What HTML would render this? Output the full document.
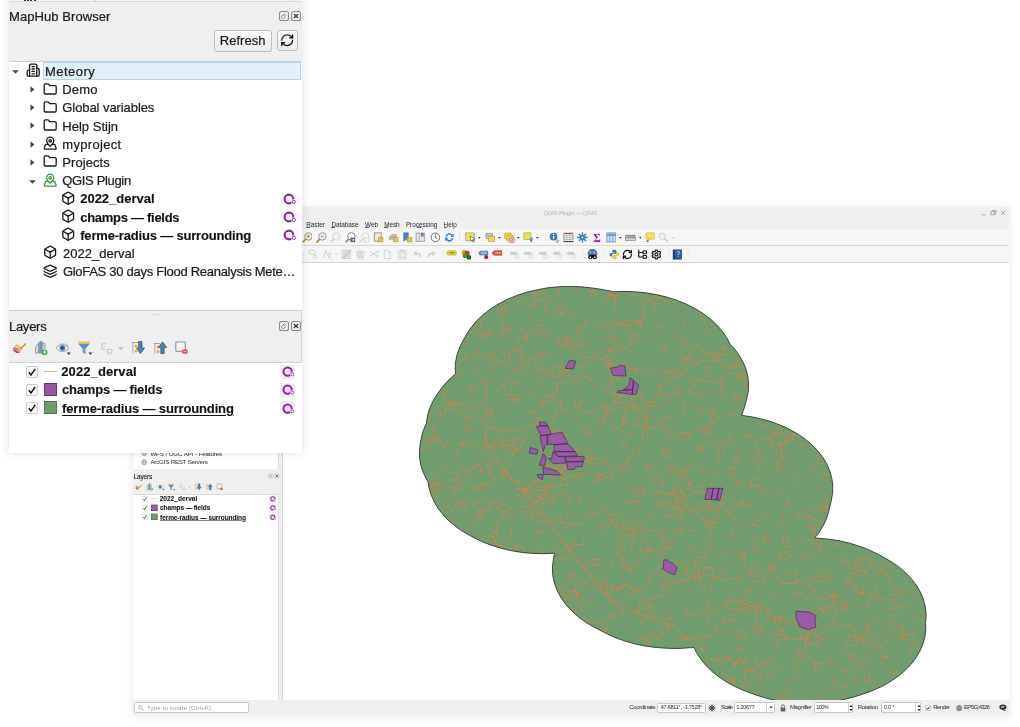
<!DOCTYPE html>
<html><head><meta charset="utf-8"><title>QGIS Plugin — QGIS</title>
<style>
html,body{margin:0;padding:0}
body{width:1020px;height:727px;position:relative;overflow:hidden;background:#fff;font-family:"Liberation Sans", sans-serif;}
div,svg{box-sizing:border-box}
.abs{position:absolute}
</style></head><body><div id="root" style="position:absolute;left:0;top:0;width:1020px;height:727px;will-change:transform">
<div class="abs" style="left:133px;top:207px;width:875.8px;height:508.4px;background:#efefef;box-shadow:0 1px 8px 1px rgba(0,0,10,.08)"></div><div style="position:absolute;left:543.4px;top:207.70000000000002px;line-height:10.2px;font-size:6.2px;font-weight:normal;color:#c8c8c8;letter-spacing:-0.333px;white-space:nowrap;-webkit-text-stroke:0.22px #c8c8c8;">QGIS Plugin — QGIS</div><svg class="abs" style="left:980px;top:209px" width="28" height="8" viewBox="0 0 28 8" fill="none" stroke="#9a9a9a" stroke-width="0.8"><path d="M1.3 5.8H5.7"/><rect x="11" y="2.6" width="3.6" height="3.2"/><path d="M12.4 2.6V1.6H16V4.6H14.6"/><path d="M21 1.8L25.2 6M25.2 1.8L21 6"/></svg><div class="abs" style="left:133px;top:229.3px;width:876px;height:16.4px;background:#f6f6f6;border-bottom:1px solid #d9d9d9"></div><div class="abs" style="left:133px;top:245.7px;width:876px;height:17.3px;background:#f6f6f6;border-bottom:1px solid #d4d4d4"></div><div class="abs" style="left:283px;top:263px;width:726px;height:437px;background:#fff"></div><svg class="abs" style="left:283px;top:263px" width="726" height="437" viewBox="283 263 726 437"><defs><clipPath id="bufc"><path d="M455.4 363.1 455.2 370.2 455.6 374.0 452.5 376.4 446.4 382.3 441.1 388.6 437.3 394.2 436.9 394.7 432.9 401.3 429.8 408.1 427.7 415.0 426.5 422.0 426.5 423.2 425.7 424.6 422.9 431.7 421.1 438.9 420.1 444.4 419.4 451.4 419.6 458.5 420.9 465.5 423.2 472.4 426.4 479.2 427.9 481.5 428.7 486.0 429.3 488.9 431.4 495.6 434.4 502.2 438.2 508.6 443.0 514.7 448.5 520.5 454.9 525.9 461.9 530.9 469.7 535.4 474.0 537.7 482.6 541.9 491.8 545.4 501.5 548.4 511.5 550.7 521.8 552.4 532.3 553.4 542.9 553.7 553.5 553.3 554.4 553.2 554.0 556.0 553.9 557.5 553.2 560.4 552.4 568.0 552.8 575.6 554.4 583.1 557.1 590.5 560.9 597.6 565.7 604.4 571.6 610.9 578.5 617.0 586.2 622.5 594.7 627.5 604.5 632.6 613.8 637.0 623.7 640.7 634.1 643.7 644.9 646.0 656.0 647.5 658.5 647.7 669.5 648.4 680.6 648.4 691.6 647.6 694.0 647.3 696.5 652.5 701.0 659.5 706.4 666.1 712.9 672.2 720.3 677.9 728.4 683.1 737.4 687.7 746.9 691.7 755.2 694.7 765.4 698.0 776.2 700.6 787.2 702.4 798.5 703.4 809.8 703.7 821.2 703.2 832.4 701.8 843.3 699.7 853.9 696.9 861.9 694.4 871.8 690.9 881.1 686.8 889.7 682.0 897.6 676.7 904.6 670.9 910.8 664.6 915.9 657.9 920.0 650.9 923.0 643.7 925.0 636.3 925.8 628.8 925.5 622.5 925.9 620.2 926.0 613.1 925.1 606.0 923.3 599.0 920.4 592.2 916.6 585.6 911.8 579.3 906.2 573.3 899.8 567.7 892.5 562.5 884.6 557.8 877.7 554.1 868.9 549.9 859.5 546.2 849.7 543.2 839.4 540.8 828.8 539.2 818.0 538.2 814.6 538.0 819.0 532.6 823.1 526.0 826.3 519.2 828.5 512.3 831.4 500.0 832.6 492.8 832.8 485.5 831.8 478.3 829.9 471.2 826.9 464.2 822.9 457.4 817.9 451.0 812.0 444.9 805.3 439.2 797.7 434.0 789.5 429.3 780.5 425.2 771.1 421.7 761.2 418.9 750.9 416.7 741.5 415.3 741.7 415.1 744.3 407.8 746.7 399.0 748.2 391.6 748.6 384.2 747.9 376.8 746.1 369.5 743.2 362.3 739.3 355.4 734.3 348.7 730.1 344.3 726.8 337.8 722.2 331.1 716.6 324.8 710.2 318.8 702.9 313.4 694.8 308.4 686.0 304.0 676.6 300.2 666.7 297.1 656.4 294.6 645.8 292.8 635.0 291.8 624.0 291.4 613.3 291.8 608.9 290.7 598.6 288.9 592.4 288.0 581.4 286.8 570.2 286.4 559.1 286.7 548.0 287.8 537.2 289.7 526.7 292.3 516.6 295.5 507.1 299.5 498.3 304.1 490.1 309.2 482.8 314.9 476.4 321.1 471.0 327.6 466.5 334.5 462.1 342.4 458.9 349.2 456.7 356.1Z"/></clipPath></defs><path d="M455.4 363.1 455.2 370.2 455.6 374.0 452.5 376.4 446.4 382.3 441.1 388.6 437.3 394.2 436.9 394.7 432.9 401.3 429.8 408.1 427.7 415.0 426.5 422.0 426.5 423.2 425.7 424.6 422.9 431.7 421.1 438.9 420.1 444.4 419.4 451.4 419.6 458.5 420.9 465.5 423.2 472.4 426.4 479.2 427.9 481.5 428.7 486.0 429.3 488.9 431.4 495.6 434.4 502.2 438.2 508.6 443.0 514.7 448.5 520.5 454.9 525.9 461.9 530.9 469.7 535.4 474.0 537.7 482.6 541.9 491.8 545.4 501.5 548.4 511.5 550.7 521.8 552.4 532.3 553.4 542.9 553.7 553.5 553.3 554.4 553.2 554.0 556.0 553.9 557.5 553.2 560.4 552.4 568.0 552.8 575.6 554.4 583.1 557.1 590.5 560.9 597.6 565.7 604.4 571.6 610.9 578.5 617.0 586.2 622.5 594.7 627.5 604.5 632.6 613.8 637.0 623.7 640.7 634.1 643.7 644.9 646.0 656.0 647.5 658.5 647.7 669.5 648.4 680.6 648.4 691.6 647.6 694.0 647.3 696.5 652.5 701.0 659.5 706.4 666.1 712.9 672.2 720.3 677.9 728.4 683.1 737.4 687.7 746.9 691.7 755.2 694.7 765.4 698.0 776.2 700.6 787.2 702.4 798.5 703.4 809.8 703.7 821.2 703.2 832.4 701.8 843.3 699.7 853.9 696.9 861.9 694.4 871.8 690.9 881.1 686.8 889.7 682.0 897.6 676.7 904.6 670.9 910.8 664.6 915.9 657.9 920.0 650.9 923.0 643.7 925.0 636.3 925.8 628.8 925.5 622.5 925.9 620.2 926.0 613.1 925.1 606.0 923.3 599.0 920.4 592.2 916.6 585.6 911.8 579.3 906.2 573.3 899.8 567.7 892.5 562.5 884.6 557.8 877.7 554.1 868.9 549.9 859.5 546.2 849.7 543.2 839.4 540.8 828.8 539.2 818.0 538.2 814.6 538.0 819.0 532.6 823.1 526.0 826.3 519.2 828.5 512.3 831.4 500.0 832.6 492.8 832.8 485.5 831.8 478.3 829.9 471.2 826.9 464.2 822.9 457.4 817.9 451.0 812.0 444.9 805.3 439.2 797.7 434.0 789.5 429.3 780.5 425.2 771.1 421.7 761.2 418.9 750.9 416.7 741.5 415.3 741.7 415.1 744.3 407.8 746.7 399.0 748.2 391.6 748.6 384.2 747.9 376.8 746.1 369.5 743.2 362.3 739.3 355.4 734.3 348.7 730.1 344.3 726.8 337.8 722.2 331.1 716.6 324.8 710.2 318.8 702.9 313.4 694.8 308.4 686.0 304.0 676.6 300.2 666.7 297.1 656.4 294.6 645.8 292.8 635.0 291.8 624.0 291.4 613.3 291.8 608.9 290.7 598.6 288.9 592.4 288.0 581.4 286.8 570.2 286.4 559.1 286.7 548.0 287.8 537.2 289.7 526.7 292.3 516.6 295.5 507.1 299.5 498.3 304.1 490.1 309.2 482.8 314.9 476.4 321.1 471.0 327.6 466.5 334.5 462.1 342.4 458.9 349.2 456.7 356.1Z" fill="#709c70"/><g clip-path="url(#bufc)"><path d="M907.3 306.4L906.2 313.0L909.1 311.6L910.8 317.3L909.9 322.3L910.2 327.2L909.6 330.6L912.0 329.5L914.1 327.3L916.6 323.7L918.2 321.1L921.3 318.7L922.7 316.4L924.4 314.5L926.5 312.8L929.7 311.2M931.8 311.2L933.7 310.3L936.2 309.9M935.7 307.0L937.8 307.0L937.1 304.7L940.4 305.4L943.0 306.6L945.2 307.8L949.0 308.7L952.6 308.4L953.0 301.9L957.3 300.5M649.8 417.0L645.8 417.3L643.9 416.5L640.9 413.3L638.2 411.3L635.7 408.3L633.7 406.2L633.4 408.5M628.3 411.5L625.2 410.2L623.0 408.6L620.4 407.8L617.7 407.6L615.2 408.4L612.9 408.5L609.1 410.5L605.2 412.3L603.9 418.5M630.9 586.8L632.2 589.5L635.9 589.4L636.8 591.3L639.8 590.6L642.6 588.7L646.0 585.6L647.9 582.2L648.8 578.3L649.8 575.4L650.5 578.1L652.2 574.8L654.2 572.7L656.3 570.1L659.2 567.2L661.5 563.4M662.7 559.1L661.8 554.1L661.0 551.7L660.4 548.1L664.1 546.0L666.2 544.5L667.3 548.5L671.4 547.8M673.8 546.1L671.3 541.0L673.2 540.0M686.8 362.3L685.6 359.2L686.1 362.6L682.6 364.8L680.1 368.1L677.4 370.8L673.9 373.2L673.6 369.0L671.6 369.7L667.1 370.5L668.7 375.4L666.8 376.4L665.4 378.0L662.8 380.1L661.1 382.5L659.9 386.4L659.6 388.8L658.8 384.0L660.9 388.1L659.5 389.8L660.6 394.9L657.8 397.2L653.8 399.4M651.0 400.5L652.8 405.4L648.5 406.6L645.7 408.9M641.2 409.8L639.1 409.4L635.3 407.5M501.6 331.0L504.7 333.9L505.6 330.4L507.3 331.9L509.5 332.3L511.4 326.9M516.4 327.8L517.9 329.5L522.0 330.5L525.1 332.4L529.0 332.9L531.1 333.0M533.9 333.9L537.9 335.1L541.0 335.8M544.1 337.1L545.0 333.8M547.3 329.4L548.7 326.5M656.5 504.3L660.1 505.0L659.8 501.5L662.2 501.7L664.3 502.8L666.1 503.8L668.5 506.0L671.7 508.0L675.2 509.0L679.2 509.0L683.6 510.0L686.2 510.1L685.8 507.3L688.5 507.8L690.9 509.2L695.1 509.0L694.9 513.0L697.2 515.1M699.5 516.4L702.5 518.7L705.0 520.7L708.1 521.1L710.7 521.7M713.6 522.7L717.3 522.5M716.2 516.6L718.5 516.6M621.6 394.9L617.8 395.1L613.5 396.8L615.4 392.0L613.2 392.6M608.8 391.5L606.4 391.1L604.2 389.9M602.3 388.4L600.4 386.1M591.6 379.5L588.2 378.2L586.1 377.3M586.9 374.7L586.2 377.8L583.6 378.0L579.5 379.5L575.9 379.1L572.4 377.1L569.6 375.1L567.4 372.5L569.4 367.3L565.9 367.2M668.0 299.4L664.9 299.4L663.6 305.9M660.8 304.0L657.0 303.7L654.3 302.5L652.2 301.1M648.7 298.9L645.6 297.6L643.0 295.1L640.5 293.8M638.8 292.5L637.0 291.3L632.7 290.4L628.8 288.5L625.5 286.7L621.8 286.1L620.1 291.1L616.1 290.5L613.0 290.7L611.5 296.4L612.5 289.5L608.5 289.8L604.2 290.0M744.7 671.1L747.9 669.8L750.9 669.9L754.6 668.5M758.1 667.3L757.1 663.9L761.2 663.1L765.0 664.0L766.9 665.2L769.4 667.3L773.2 668.4M765.0 475.8L761.8 474.2L759.7 472.1L757.7 468.5M752.6 461.7L751.4 458.1L748.7 456.0L745.7 452.8L743.6 450.3M756.5 669.5L753.3 669.4L750.9 670.1L747.9 670.6L744.1 673.1L744.6 677.7L741.1 680.7L738.8 682.0M734.8 682.0L732.7 682.5M731.0 683.7L727.1 685.9M539.0 497.0L536.2 496.2L532.7 493.1M530.1 492.0L528.4 490.6L528.1 492.6L525.9 489.9L523.7 487.9M518.8 483.9L520.0 481.5L515.6 481.5M720.1 499.7L720.1 502.6L719.7 499.9L718.3 495.8M715.0 495.6L711.8 494.2L708.0 491.9L705.4 491.4L701.3 492.2L698.2 492.4L694.2 492.9L692.1 493.4L688.5 495.5M686.2 503.5L686.6 496.9M684.1 497.9L681.8 499.9M610.9 431.6L614.5 429.1M620.7 426.3L622.7 425.3L622.9 422.2L624.1 419.8L623.9 414.6L624.7 411.5L625.1 408.9L624.6 405.8M627.2 403.9L629.2 400.9L630.7 399.5L632.9 397.4L636.2 396.3L639.4 395.0L642.3 394.4L643.3 398.8M522.5 399.2L519.1 398.9M515.8 399.2L513.1 399.8L508.6 400.0M506.9 406.2L504.2 405.9L501.0 406.1M497.6 406.4L494.4 407.1M492.0 407.8L491.4 411.4M491.2 413.7L489.1 413.4M487.0 412.5L485.0 411.1M482.3 408.8L479.1 406.5M475.6 404.5L473.8 411.1L469.8 410.8L466.6 410.8L463.6 411.2L459.7 412.1L457.3 412.6M456.1 405.3L453.9 405.4M450.3 403.8L447.2 402.5M621.2 337.2L618.8 337.8L614.5 337.6L612.3 337.1M613.1 328.0L611.0 327.8L607.4 327.4L605.5 328.1L605.3 331.1M452.7 539.6L452.5 544.2L450.3 544.7L447.2 545.1L446.8 547.9L442.6 549.0L444.4 542.5M443.6 548.9L440.0 549.4L437.6 548.5L434.8 548.3M432.3 545.5L428.6 545.2L425.6 543.5L422.6 542.5L421.9 548.7L418.2 546.8M414.4 545.8L410.0 545.8L407.6 545.8L404.4 544.4L402.1 543.2L399.1 541.7L395.5 540.7L394.8 545.9L391.9 545.2L389.2 545.7M563.4 366.2L559.2 365.8L557.1 366.1L554.1 366.9L550.4 368.9L548.7 370.3L549.4 376.1M546.0 376.4L543.4 376.5M532.5 374.7L530.6 373.9L526.2 373.4L523.1 371.5L518.9 370.3L515.1 369.5L511.4 368.9L507.8 367.2L504.8 364.3L500.9 363.2L499.0 361.8L497.0 360.4L495.6 355.4L491.7 355.4M461.4 471.9L463.9 472.0L466.0 472.1L468.7 471.1L472.0 470.0L474.5 468.0L477.2 467.1M481.7 466.7L481.0 473.3L480.2 469.5M484.2 467.5L486.4 467.0L489.4 466.9M491.7 466.3L490.1 472.8M722.6 603.7L724.7 604.5L726.8 600.6M728.8 601.0L730.1 597.1M733.8 597.8L736.5 597.5L735.2 601.4L737.6 601.5L741.5 600.3L745.0 600.2L747.3 600.7L751.3 602.1L753.4 603.2L755.2 605.5L757.4 606.9L759.3 608.6L762.8 609.9L766.1 611.0L768.7 613.2L770.2 615.1M772.2 619.1L774.0 621.7L774.7 624.1L776.8 627.0L780.3 628.5L782.6 628.6L781.8 634.2L784.6 636.8L788.0 638.8M508.3 356.3L509.4 359.1L510.0 361.3L506.0 363.1M502.4 363.3L499.8 362.9L497.0 361.2L495.3 359.8L491.9 357.4L489.5 356.4L486.1 355.9L483.6 355.5L480.4 355.8L477.2 356.6L473.7 356.3L472.1 351.7M469.1 354.0L467.6 356.0L466.1 359.8L465.5 355.3L463.1 357.7L461.1 359.7L459.3 361.7L458.4 363.4L456.3 366.3L455.4 368.9M452.9 372.6L452.9 368.8M887.2 538.3L889.5 539.5L892.2 539.9M899.3 541.2L901.2 534.8L905.1 534.8L904.2 537.1M908.3 539.1L909.8 540.6M912.5 542.0L914.6 542.2L917.2 543.5M916.8 548.6L918.7 549.5L922.1 551.3L924.5 552.4L928.6 552.5M931.6 553.1L933.8 553.8M865.6 408.8L863.0 406.7M857.4 402.2L858.8 398.7L854.5 397.9L855.0 394.2L852.5 393.1M849.8 390.0L850.4 386.4L849.6 384.2L847.6 381.2M846.6 378.5L843.4 375.7L841.1 375.3L839.1 374.0L841.0 369.0L836.7 368.7L834.9 373.9L834.6 378.3L832.2 378.7M469.2 413.6L469.0 418.3L472.8 420.3L475.9 420.9M479.1 417.4L481.2 418.2L483.9 419.6L487.4 420.8L491.0 421.8M493.9 422.5L493.5 427.9L496.3 429.7L500.6 430.7L503.8 431.4L506.6 433.3M507.6 439.9L510.7 442.9L512.5 445.5L514.9 447.3L518.4 448.5L520.6 449.0L520.4 444.4M741.7 579.2L739.2 579.6L735.6 581.0L736.7 578.2L733.1 578.6L730.2 578.9L726.5 579.3L723.1 579.9L719.5 578.6L717.3 578.3L714.1 577.6L710.6 578.6M704.3 577.8L700.6 576.7L697.4 575.3L697.5 577.7L695.4 577.4L693.2 577.2M571.5 665.2L568.7 665.4L566.2 664.2L562.1 663.4M560.0 663.2L556.1 661.5L552.7 661.7M549.2 661.7L544.9 662.8L541.7 664.0L539.2 665.0L535.2 665.4L532.2 664.2L530.6 668.4L529.1 673.5L528.2 677.8M523.0 678.1L523.3 674.9L523.9 668.8L520.0 666.5L516.6 665.2L513.4 665.4L511.1 665.1L507.2 662.6L504.5 661.8M502.7 660.3L501.6 666.1L499.7 663.2L499.0 665.4L496.5 664.5M795.8 393.7L794.8 397.9L792.6 397.5L789.7 396.8L787.3 397.0L783.2 395.7L783.6 391.0L783.9 388.0M781.9 389.1L780.8 394.9L778.2 395.1L776.1 395.5M775.9 400.5L773.7 400.6L771.8 399.6L769.6 397.7L768.6 396.0L766.9 394.5L765.3 392.7M762.9 391.7L760.2 388.7L757.8 385.1M754.6 383.3L750.8 383.0L747.6 381.0L744.4 377.9L742.2 374.5L740.4 370.8M539.3 593.2L543.4 592.8M547.7 592.5L549.8 593.0L553.6 594.1M555.8 595.5L559.4 597.9M562.9 598.6L566.0 598.9L568.2 599.0L570.8 597.8L573.8 597.7M577.2 596.4L574.6 590.5M577.0 588.5L579.3 587.2L583.0 586.4L583.4 588.7M431.2 353.8L426.8 353.6L423.6 353.1M422.7 345.3L420.3 344.8M418.3 343.3L416.2 341.8L415.5 335.0L413.5 333.0L410.2 332.4L408.2 331.5M404.4 329.4L402.0 327.7M399.9 325.2L396.7 323.2L396.4 319.1L395.1 317.4L392.5 314.2M389.3 312.0L387.6 310.4L384.6 308.1M376.8 306.9L376.0 312.0L373.1 311.0L370.1 310.8L365.9 311.8L366.0 305.2L363.0 307.0L360.0 309.5M750.2 581.8L754.4 580.9L758.1 581.2L761.8 582.0L765.3 581.1L763.7 575.8M762.6 571.4L763.8 574.3L766.6 573.5M769.2 573.6L771.2 573.6L771.7 578.5M775.3 578.3L779.1 579.8L780.7 581.3L784.0 583.1L786.5 583.6L790.3 582.9M637.1 486.5L640.9 487.4L644.4 489.9L643.4 495.0L644.5 491.0M648.4 491.8L652.7 492.1M655.5 491.9L658.7 493.0L662.4 493.5L666.5 493.3L668.9 493.8L671.1 493.4L674.7 491.3M677.2 491.0L680.0 491.8L681.4 488.2M914.5 672.2L917.9 673.0L920.1 673.5L923.1 674.0L926.7 673.9L930.9 672.5L935.0 670.5L939.2 670.4M942.8 668.2L945.5 665.5L947.3 659.0L948.5 655.6L950.8 657.6L952.8 652.6L956.5 653.2L959.8 652.9M963.6 653.5L965.8 654.2M968.4 653.9L970.8 652.8L974.2 651.8L976.0 650.7M978.3 648.8L980.7 647.8M419.3 436.1L422.9 435.7L426.7 434.1M424.5 439.9L427.3 439.9M433.2 437.0L432.6 440.6L435.5 439.5M597.5 473.5L596.7 476.7L600.3 475.3L603.9 475.9L607.6 476.8L609.6 476.5L612.5 474.9L612.3 470.9M615.6 467.7L617.9 466.0L620.1 465.5L623.6 464.4L626.8 462.0M628.4 460.7L628.0 457.2L632.1 455.7M414.8 644.3L411.1 644.3L408.7 643.4L406.4 643.7L403.3 644.6L400.1 645.1L396.0 643.7L393.3 643.7L391.1 643.9M387.7 645.1L385.7 645.8L382.4 646.5M379.3 647.0L375.6 648.8L376.1 645.9L376.6 643.8M651.9 636.7L654.0 630.8M651.1 634.9L647.1 637.1L644.6 637.3L640.3 638.7M641.0 635.6L637.7 637.9L634.9 639.1M632.3 640.7L630.2 642.6M628.4 644.0L625.9 646.3L621.6 647.8M617.4 653.7L613.8 654.5M610.3 655.9L609.9 659.1L605.8 657.2L603.9 655.3L600.3 654.4L597.7 652.6L595.1 649.1L594.6 653.1L593.7 650.3L592.1 647.8M591.2 645.7L589.4 642.4M449.9 686.7L445.9 687.6L446.3 682.4L446.2 679.6L442.5 679.2L439.4 677.6L435.3 678.0M436.2 680.5L433.8 680.1L430.7 680.3M431.5 682.4L428.4 685.4M426.4 688.3L422.8 690.6L421.3 685.9L417.9 688.0L415.4 690.9L414.7 687.7L415.5 691.0L412.3 692.6L409.2 694.6L406.2 697.3L402.2 698.0L400.0 697.9M475.9 620.5L479.1 621.0L482.6 621.9M485.6 623.3L487.9 625.3L490.6 628.1L492.1 629.8L494.6 633.5M495.9 635.1L497.8 637.3L500.5 640.1L502.5 643.2L505.9 645.5L508.9 646.0L513.2 645.8L517.2 643.9L517.5 647.8L521.4 647.1L524.7 647.6M531.6 648.4L531.5 643.5M534.7 644.9L538.9 645.4L541.9 645.1L544.2 643.9L548.3 642.6L552.4 643.1L556.3 644.3M754.2 412.2L750.2 410.1M747.5 407.2L746.1 404.2L745.0 400.5L741.7 397.7L738.5 396.0L735.9 393.5L732.8 391.5L730.0 390.6M725.7 389.9L723.9 388.8L722.3 386.7L720.9 383.2L719.4 380.4M734.9 430.9L738.9 431.0M742.9 431.9L745.5 433.7L747.2 435.6L748.8 437.4M758.5 439.0L762.0 439.8L765.3 440.0L767.9 438.7L770.0 437.1L773.9 435.2L777.8 434.4L781.6 432.7L781.7 427.9L784.1 427.5M450.8 300.4L453.8 300.6L454.7 298.2L458.9 297.5L461.6 297.2L464.9 297.1M463.6 302.5L466.8 303.0L470.7 302.0L474.5 302.3L478.1 301.5L481.7 301.7M485.2 301.6L488.5 300.6L492.2 298.4L495.4 298.2L498.5 296.7L500.8 297.0M567.2 491.0L563.8 493.4M561.1 493.8L559.0 494.5L556.8 496.2L554.1 499.9L552.7 503.0L552.3 499.1M549.4 501.9L551.5 506.9L550.1 500.2L547.2 501.4L543.5 504.1L542.2 499.0L538.8 501.6L536.8 502.0L533.1 502.4L529.7 504.6L527.4 505.4M522.8 501.1L518.6 500.0M851.4 353.3L855.3 354.0L859.5 353.5L861.5 354.3M865.5 354.4L868.6 354.9L870.6 355.9L872.9 358.1L871.3 361.2L874.7 363.3L877.6 364.9L879.9 366.5L882.7 369.0L885.1 372.4L886.6 376.0L887.6 380.1M888.4 375.2L890.8 376.5L893.0 379.5L894.7 373.8L895.3 376.3M656.8 691.7L661.2 692.5M661.5 696.8L661.9 692.8L665.1 693.2L668.5 693.1M674.9 692.3L678.4 692.6L680.6 692.1L685.1 691.7M688.5 693.1L691.1 694.4L692.8 696.4L696.2 697.2L700.3 696.5L704.7 697.8M706.8 697.3L706.7 702.9M709.0 704.9L711.0 701.9L714.8 700.0L716.6 695.2L720.3 694.0M720.0 691.5L722.7 690.9L725.9 690.4M652.5 297.3L656.4 295.9L659.3 295.0L662.4 293.0L666.3 290.9L667.8 289.3L670.5 287.7L671.8 294.2L676.2 293.9M679.8 295.4L677.8 290.0M846.9 437.5L848.2 440.4M850.1 439.3L852.4 437.8L855.5 435.7M857.6 433.0L858.9 430.0L861.2 427.6L865.2 426.6L867.5 426.0L866.2 422.6L870.0 422.3M873.8 421.4L873.7 426.6L874.8 429.5L876.9 430.3M516.8 489.0L519.6 488.7L522.2 488.5L525.3 488.4L528.0 488.3M531.2 489.0L534.2 489.4L538.1 490.7L541.3 490.5L545.2 489.7L548.8 488.0L552.5 487.0L554.5 486.3L559.0 485.7L561.1 485.0L564.0 484.2M551.8 301.5L549.5 296.6L547.3 291.2L544.0 294.0L541.8 288.6L542.3 291.5L539.2 293.3L534.9 293.9L533.6 287.8M531.0 288.2L529.0 287.7L525.3 287.6L521.8 288.5L518.9 289.8L516.4 292.6M582.9 523.2L578.5 524.2L574.1 523.8L574.4 525.8L570.2 524.5L568.1 523.6L564.8 523.0L561.6 521.4M558.7 519.3L554.5 517.6L553.4 521.2L549.7 521.0L547.1 521.1L544.3 520.2L539.8 520.3L540.3 523.1L537.2 522.2L533.2 520.5L532.9 515.2L529.4 513.1L525.5 511.6M522.4 511.0L520.2 510.3M418.8 499.2L422.6 497.7L425.8 497.8M430.0 498.0L432.0 497.7L431.8 492.3M434.0 491.7L438.5 491.1M447.0 487.4L451.5 487.2L452.1 490.3M721.6 475.8L719.6 475.9L716.8 474.9L713.5 473.2L709.1 472.9L706.7 472.2L704.8 471.0L702.1 469.8L700.1 469.3L697.2 467.6M693.1 467.4L689.6 466.2M690.1 469.0L686.5 468.5L682.8 469.5L680.3 469.8L676.3 472.0L675.3 466.2L672.7 465.7L672.5 468.4M670.3 467.9L670.8 464.6M803.3 320.7L803.3 323.2L804.0 325.3L799.6 326.0L795.9 328.5L792.5 330.6L790.3 332.7L787.3 334.4L784.6 336.6L781.4 339.3L778.1 341.0L776.1 343.0L773.9 345.9L772.9 348.9L772.0 351.0M769.8 352.8L767.5 347.7L766.2 350.4M862.4 513.2L859.0 514.5M859.1 517.8L856.4 519.0L856.6 515.8M854.6 516.5L851.5 518.0L849.2 518.0L848.5 516.0L844.5 517.1L842.3 518.8L839.8 520.0L836.4 519.9L834.3 520.7L830.9 523.2L830.6 519.7L828.6 520.7L826.8 522.1M820.0 525.3L817.4 525.3M813.0 526.8L810.8 527.2L809.3 522.2M786.1 370.4L786.5 375.2L790.6 373.6L793.8 374.1M797.4 375.4L799.6 377.0M802.4 378.0L803.2 373.4M806.6 368.5L808.5 370.3L808.3 367.1L810.9 368.7M811.4 366.2L815.2 365.6L815.7 369.6L819.2 370.1L823.5 370.9L827.9 370.9L831.7 370.3L836.1 370.4L840.1 370.3L844.2 370.6L844.0 373.6L844.3 371.3L846.4 371.4L848.6 371.5L851.4 370.3L853.4 369.4L856.3 366.6M746.5 380.6L750.7 380.5L752.9 380.1M756.5 381.0L755.7 378.6L756.1 385.5L760.3 384.6L764.4 385.4L767.3 385.9M774.5 387.2L777.5 386.1M767.1 537.8L764.6 538.9L760.9 539.6L758.5 539.1M755.0 537.3L756.2 541.7L756.4 539.6M757.2 544.3L756.7 549.0L752.6 548.4L752.4 551.6M746.7 553.4L744.2 552.5L739.9 552.9L740.0 549.3M734.0 551.0L732.4 552.5L730.4 553.4L727.3 553.5L724.8 554.0L721.4 553.8L718.6 553.9M738.7 367.1L734.3 366.0L734.4 362.4M722.7 361.3L721.9 355.2L718.7 354.8L719.2 357.8L715.7 356.3L713.2 355.7L709.5 354.1L706.2 352.8L701.8 351.5L701.7 348.4M698.8 347.8L694.8 348.2M674.2 429.8L673.5 432.8L675.3 433.7L678.4 434.3L682.5 433.8L686.5 432.9L685.4 437.4M689.9 433.5L692.4 432.3L695.8 430.3L699.7 429.0L701.6 429.5L704.5 430.2L708.6 430.0M580.6 357.3L584.6 356.8M586.9 356.9L591.1 357.6L595.4 356.9L597.7 355.3L599.8 353.1L603.6 350.6M606.7 348.7L610.4 348.0L614.9 348.0L618.8 347.0L622.4 345.6L623.3 349.3L625.6 348.0L628.3 346.0L631.8 343.4M868.6 658.5L867.6 660.5L864.3 659.7L862.8 666.4L860.9 665.6L860.2 668.2L856.7 668.5L852.6 668.6L849.6 670.0L845.3 671.3L842.8 670.6L840.3 670.8M836.9 676.1L834.5 681.0L831.2 678.0L828.6 675.1M539.3 451.6L539.5 448.6L543.2 449.3M546.5 454.0L548.8 453.8L551.8 454.4L551.4 449.1M553.7 451.5L555.7 452.3L556.1 458.6L560.0 459.2L563.4 458.6M566.0 457.3L568.3 457.5L572.1 458.5L575.5 459.2L578.8 460.2L581.1 460.9L584.5 461.5L587.4 461.6L591.0 460.0L593.8 459.2L598.2 459.8M605.8 458.0L604.7 464.7L608.5 463.9M622.6 367.0L625.1 365.3L628.7 365.1M630.8 365.7L633.9 367.0L635.4 371.9L633.9 368.7L637.3 368.9L637.7 371.9L640.9 371.5M644.5 369.7L646.9 369.8L647.6 373.6L651.8 372.9L655.1 372.2L658.6 370.7L659.7 373.0M663.2 372.4L667.0 372.7L670.3 373.6L673.6 372.5L673.6 378.3M679.6 372.7L680.8 375.9L682.8 375.1L685.3 373.2L687.6 370.4L685.8 367.1M543.8 682.5L544.7 680.5M542.0 681.2L543.5 676.7L540.3 676.8L538.0 677.1L534.0 677.9L532.6 682.8M532.4 688.3L528.2 687.7L524.7 686.2M520.5 685.9L517.7 686.1L515.0 685.1L511.9 682.6L507.9 681.0L505.4 681.1L502.2 680.0L502.1 682.7M498.2 681.3L496.2 681.5L493.0 682.6L488.8 683.5M486.1 683.9L483.3 683.6M484.1 602.0L484.1 597.3L479.9 597.1L476.9 598.4L474.7 600.5M471.8 601.9L468.3 601.7L464.1 601.7L461.0 601.9L456.7 602.0L454.1 602.7M452.3 603.6L449.3 603.8L449.1 600.4M780.7 490.7L776.5 490.4M773.9 491.2L772.3 492.4L770.3 493.4L767.4 493.4L764.1 492.1M760.4 490.9L757.5 491.4L757.0 486.2L753.2 485.4L749.8 483.4L751.6 488.6L750.9 486.0M746.9 485.1L743.2 482.7L739.1 480.8M736.6 479.0L739.1 485.1L736.1 485.7L734.3 487.0M731.5 490.0L730.4 491.7L729.2 493.4L725.8 496.4L723.7 497.3L720.9 497.1M665.2 535.0L665.0 537.4M662.8 537.7L660.7 537.2L660.6 530.6L657.0 530.1L653.5 530.2L649.4 530.5L646.0 530.8L642.0 532.1M640.0 533.5L636.8 534.0M634.3 534.2L630.7 535.9M629.6 529.5L625.7 529.8M782.6 336.7L785.5 336.8L789.1 337.4L793.2 336.7L797.1 336.4L798.8 330.6M801.0 330.0L801.1 323.6L805.5 324.6L808.9 325.8L812.9 327.9L816.2 329.4L816.1 335.7M892.1 572.0L888.2 572.7L884.4 572.5L880.7 571.2M880.0 566.9L880.4 573.0L877.3 574.5M874.1 577.3L872.5 579.5M866.5 586.2L865.2 588.1L864.5 590.0L863.4 592.8L862.6 595.3L862.3 590.8L860.8 594.9L860.4 592.4L857.1 594.1M820.7 657.3L824.7 658.7L826.8 660.0L829.7 662.9L831.0 665.3L830.5 659.0L832.4 660.4L834.1 663.3L836.7 664.8L840.2 665.8L841.9 667.1L842.0 672.0L845.6 674.7L849.1 677.0M852.5 678.9L855.0 682.0L857.0 683.6M911.3 426.5L909.1 425.0L907.1 422.5L904.6 420.2L906.5 416.2L903.1 414.9L903.4 410.8M901.2 410.1L902.2 405.7L898.0 405.1L895.8 404.3L893.7 402.5L890.7 401.0M889.0 405.0L886.3 403.0M887.8 398.9L887.7 392.7L884.4 393.2L882.5 393.8L879.9 393.8L877.3 394.7L872.9 395.2L873.0 400.8M582.6 695.4L585.6 695.3L587.5 691.5L590.8 692.2L590.5 697.9L592.8 699.1L590.6 703.1M592.0 697.6L591.8 699.8M596.4 700.2L600.3 699.2L601.0 697.3L604.2 699.3M610.5 699.5L608.6 703.7L609.5 698.1L609.7 693.9L612.9 694.4L615.0 694.7L617.2 693.9M620.5 693.4L621.4 690.4M624.1 689.5L628.5 690.2M891.3 691.3L894.2 690.1L897.8 688.1L899.4 686.1L902.3 684.1L905.5 683.7L909.8 682.7L912.2 681.8L916.3 680.2L918.9 677.5M920.5 676.1L919.8 673.4M924.0 673.1L926.8 671.5L929.7 668.4L931.2 665.3L933.1 664.0L934.9 662.5L938.2 660.8M538.1 464.6L542.2 465.0L544.9 465.2L549.2 465.7L551.9 464.9L552.7 467.3M555.2 468.6L559.1 469.7L562.3 469.1L565.8 466.9L568.9 463.7L570.8 461.8L573.1 459.5L574.4 457.4M576.5 453.9L577.4 452.1M603.4 619.0L603.0 623.7L600.5 624.2L596.3 623.3L594.0 622.8L589.6 622.1L591.2 628.7L588.1 629.2L583.9 628.3L580.5 626.8L576.2 627.1L573.9 626.1M571.9 618.6L570.9 614.3L567.6 613.8L563.7 613.6L563.5 617.8L561.7 615.7M559.4 614.9L557.3 614.5L555.5 613.4L552.5 612.8L549.4 612.6L548.8 608.9M546.9 607.3L546.6 601.8L543.2 601.1M920.3 668.5L923.5 668.5L924.4 673.4M926.6 673.6L926.8 669.8L929.5 669.6M932.8 669.9L936.9 671.6L941.4 671.4L944.5 671.5L945.1 677.9L947.8 678.1L951.2 678.8L954.5 679.2L957.3 678.5L958.2 683.0M957.1 677.5L961.5 676.8M965.3 680.3L966.9 685.5L971.2 686.6L975.5 687.0M552.4 313.1L548.6 311.4L544.7 310.4L544.9 305.8L545.6 300.4L542.2 300.1L539.0 299.8L535.3 300.8L535.3 306.6L532.3 306.8L529.4 308.0M881.2 622.0L882.0 626.3L885.7 626.4M888.2 627.6L890.3 627.7L889.7 631.3M894.3 631.3L894.8 627.1L897.3 627.3L899.5 627.2L901.6 627.2L903.1 633.1L902.7 635.8M907.3 635.8L911.3 633.9L913.7 633.6L914.7 637.7L913.5 644.1L915.9 643.9L919.3 642.7M878.8 293.7L875.3 294.6L871.6 295.9L871.1 292.3L872.9 296.9L871.0 298.6L867.2 299.6L863.9 302.6L861.2 304.5L861.0 301.0L858.7 295.4M854.4 295.2L851.2 293.8L848.0 293.2L843.8 293.7L840.5 293.6L837.7 295.1M833.2 299.3L830.7 303.0M444.6 583.7L440.7 584.4M433.8 582.2L433.0 585.9L429.3 584.7L429.7 590.0M427.0 589.2L427.6 584.2M425.2 581.4L425.2 585.2L426.2 578.5L422.3 577.3L417.9 577.1M458.0 664.8L461.5 662.5L464.0 660.4L467.5 659.8M475.3 659.0L478.7 658.2L481.0 657.9M480.2 653.9L482.9 653.3L485.9 654.0L488.1 655.0L489.9 656.8M494.9 659.5L498.3 659.3L502.1 657.1L503.5 660.1M508.0 655.9L510.4 653.3L514.3 651.9M657.4 313.6L655.0 313.1L654.8 307.6L653.0 301.6L650.3 301.5L646.0 302.8M643.8 304.6L643.3 310.6L644.5 316.7L645.0 319.4L642.8 319.4L642.8 322.0M640.5 320.2L640.4 325.9L639.0 320.9L634.8 320.8L631.1 320.8L627.1 320.7L624.0 320.6M621.3 321.2L620.8 327.1M577.5 286.7L578.5 281.0L576.5 279.8L578.7 273.2L574.5 271.6L572.4 269.7M570.9 268.1L567.8 265.1L565.1 263.0M561.0 259.8L561.3 263.3L561.2 265.8L561.8 270.7L559.2 272.1L559.0 267.9M558.8 265.4L556.1 265.3L552.4 266.7M548.0 267.7L544.3 269.8L540.5 272.1M917.4 489.3L915.3 485.9L919.7 484.6M922.1 483.0L926.5 482.6L930.6 482.3M933.8 482.0L937.9 483.2L940.1 484.5L941.9 486.4L943.9 489.1M947.9 490.6L950.4 491.9L952.5 492.3M958.6 494.2L962.1 494.2L965.5 494.9L968.2 495.9L970.6 496.4L973.2 495.9M977.4 497.0L979.6 497.7M982.8 500.0L985.1 498.7L987.2 498.5M989.4 499.0L990.4 501.7L994.4 503.0M732.4 341.1L736.5 343.0M737.6 337.8L739.2 331.8M741.4 340.8L743.9 344.4L743.2 347.0L745.5 348.4L748.5 351.2M750.9 352.9L754.5 354.2M760.2 358.0L764.4 359.1L767.8 359.6L771.3 358.8M819.3 433.2L816.7 433.2L813.7 431.9L809.9 430.5M807.3 430.4L803.5 431.7M801.4 433.5L801.8 435.7L798.1 437.0M791.9 438.3L789.5 439.6L786.3 442.8L784.8 444.3L782.6 448.3M690.9 509.3L689.9 513.8L692.1 513.8M696.3 515.1L696.7 510.9L699.3 510.7L701.7 509.4M704.7 507.6L707.0 507.7M709.8 507.7L709.5 510.4L713.1 509.2L717.5 509.0L720.0 507.8L722.1 508.1M727.0 512.4L730.1 513.1L732.7 515.0L736.3 516.8M739.2 523.1L738.5 525.8M741.9 525.5L745.4 525.2L747.4 525.8M751.8 525.2L755.8 525.2L759.5 526.8M631.5 666.9L633.9 667.5M636.9 669.4L639.9 672.2L643.5 673.7L647.1 673.4L645.9 679.0M647.3 673.0L651.6 671.3L654.5 671.4L657.6 671.1L661.3 672.8L665.2 673.5M667.7 674.0L670.7 674.9L673.6 674.4L676.4 674.2L680.3 673.5L683.9 671.3L687.2 670.5M691.2 666.7L695.3 667.6L697.5 667.0M467.4 590.9L471.0 590.5L472.9 589.6L474.6 588.2M482.6 598.0L485.6 599.7L485.7 596.6L487.8 598.2L491.3 599.3M906.7 523.4L902.8 523.0L899.6 521.9L900.1 516.4L897.5 516.4L893.9 515.0L890.4 515.4M887.1 517.1L883.1 519.2M879.8 520.5L875.7 520.9M875.9 523.7L872.0 523.7L870.0 523.0L869.2 529.8L865.9 529.2M867.1 522.3L864.0 523.6L865.2 516.8M862.9 516.5L863.3 518.7L859.8 521.3L856.0 521.7L853.3 522.2L851.6 516.6M829.7 701.5L825.3 702.4L821.4 702.5M822.4 705.8L819.5 706.2M817.4 705.9L814.6 705.4L815.6 711.4M815.8 713.9L813.4 711.9L809.4 711.5L806.8 710.4L804.6 705.7L800.7 704.3M797.4 703.7L795.2 703.3M791.2 699.6L787.1 699.2L784.3 700.3L783.5 696.7M795.3 639.9L797.8 639.6M802.9 639.7L805.8 638.3L807.3 636.6L807.2 632.6L809.3 631.4L809.1 636.3L808.2 630.5L810.8 628.6L812.6 626.0L814.2 621.9L815.2 617.5L815.1 613.4L816.9 610.8M825.4 599.6L829.1 597.3L830.8 595.5M833.7 593.4L833.7 599.3M839.0 605.3L841.7 605.7M921.9 367.2L925.5 367.0L929.3 366.5L931.2 372.2L933.2 372.0M934.9 370.9L937.5 370.3L940.3 370.2L943.2 369.3L945.5 367.4L948.1 365.2L950.2 364.7L953.6 364.2L951.0 357.7L954.2 357.7L956.9 356.9L960.6 356.7L964.4 357.6L967.5 358.1L970.6 358.3L974.2 357.3M975.3 363.6L975.8 367.8L978.0 367.1L982.2 366.9L983.3 369.8L986.5 370.0L990.2 370.2L994.5 370.1L997.1 368.8M496.7 390.6L499.9 388.6L501.6 387.3L503.9 385.4L505.5 390.9M510.3 395.0L514.3 395.9L518.4 394.9L522.0 393.3M529.0 394.1L532.0 394.9L535.6 396.9L537.3 398.2M539.8 399.7L541.0 403.7L543.0 403.4L546.0 402.2L549.6 401.3L551.6 400.4L554.3 397.3L553.8 392.2L557.5 390.3L556.9 385.0L557.8 389.6L556.2 384.2L559.9 382.9L562.9 382.5L567.2 381.5L569.6 381.3M760.3 297.6L759.6 295.5M762.8 293.4L766.4 292.7L768.4 291.9M771.7 291.2L773.9 290.4L778.5 290.9M781.8 291.0L786.1 290.0L788.7 290.2M794.6 287.2L796.9 288.4L801.3 289.2L805.1 291.6L808.4 291.9L812.7 290.5L814.8 289.9L817.4 288.9L820.9 288.5L823.9 287.7L823.0 285.2M826.2 282.5L829.2 281.7M832.4 281.8L835.7 282.6M576.9 624.0L580.2 624.3M583.7 623.7L586.8 622.5L585.8 626.2L589.3 625.2L591.6 625.1L595.1 626.6L597.7 627.9M599.9 629.2L603.9 631.0L606.6 631.2L607.1 625.7M606.8 629.2L605.2 634.4L604.9 629.1L608.7 628.1M697.5 448.2L701.6 447.6L701.5 452.4L703.8 451.7L703.5 445.5L705.2 443.7L708.3 441.3L710.7 440.3L714.4 439.7L717.1 440.0M719.2 440.8L721.4 440.9L724.4 441.9L728.2 441.5L730.3 435.1M848.0 566.1L851.5 566.8M853.6 567.8L857.3 569.7M860.6 570.0L863.5 571.5L866.7 571.3L868.6 570.8L870.0 566.9L873.9 566.5M877.7 567.4L881.0 568.6M884.3 569.9L883.0 575.2L886.5 574.9L885.7 577.2M889.9 577.4L888.3 583.8L892.5 584.6L894.7 586.0L898.4 588.4L901.0 588.8L904.6 590.9M906.9 590.9L909.3 592.0L913.5 593.2M703.2 692.8L705.6 692.1L709.3 690.1L710.8 694.2M712.8 692.5L717.0 691.3L720.1 690.7M729.3 683.2L731.6 681.5L735.1 680.2L734.2 676.9M424.3 696.5L421.0 695.8L418.0 694.3L417.7 689.6L415.4 688.2L410.9 688.2L411.3 685.1M409.7 683.4L406.7 682.6L402.8 680.4L400.8 680.0M398.9 678.8L397.1 684.7L394.6 682.2L391.1 681.5L392.1 674.9L388.5 674.0L385.3 672.6L381.0 671.0L378.6 670.7L375.9 670.5L372.3 671.6L370.4 672.5L367.2 673.8L364.6 676.0L365.0 672.3M656.7 395.9L658.9 396.1L660.9 396.1M663.0 395.7L667.2 395.8L669.8 394.6L671.6 393.4L674.0 391.3M676.4 390.2L679.4 390.4M687.0 390.8L691.3 391.5L691.1 393.8L694.4 393.1L698.5 392.8M699.2 395.9L703.6 396.4M706.2 657.3L709.6 659.2L713.0 660.5L717.3 660.7L720.1 660.6M723.0 660.6L726.9 659.7L731.2 659.8L733.8 659.6M736.7 660.0L735.0 666.7L738.3 667.9M742.3 668.4L745.5 669.4L749.5 671.3L751.6 671.7M753.7 671.9L757.6 671.4M477.4 513.5L481.4 512.7M482.6 515.4L486.1 513.3L489.1 510.6L491.0 508.9L492.6 507.2M495.5 506.5L498.7 506.4L501.6 505.2L503.9 504.3L507.9 503.5M510.0 502.0L512.9 498.5L515.7 496.1L518.7 494.8L521.1 492.7L524.3 490.5L527.2 489.4L529.6 486.8M531.6 484.8L534.2 483.9M537.2 481.5L541.5 480.7L543.8 480.9M544.7 485.0L547.1 486.1L549.8 486.7L552.3 486.6M754.9 622.5L756.5 623.8M760.1 626.4L761.7 628.9L762.6 630.9L765.6 632.9L769.5 634.0L773.9 634.4L778.2 634.8M776.6 638.5L780.2 639.6L784.4 639.7L788.5 639.3M792.8 638.9L795.7 639.8L800.0 639.2L802.3 639.2M806.6 639.5L805.7 645.0M805.9 641.8L807.8 642.8L811.8 643.8L816.1 643.7L819.6 644.4L820.0 639.6L824.3 638.4M517.1 659.1L515.1 657.9L512.2 655.7L509.0 653.3L506.6 651.0M506.6 648.2L504.6 646.3L501.1 644.8L498.2 642.3L496.1 640.2L495.1 638.2L495.0 641.2L493.1 637.0M531.5 423.9L534.3 425.6L537.5 426.3M540.4 427.7L544.0 429.5L548.1 429.5L550.1 429.1L554.1 430.6L557.9 433.1L561.4 434.8L564.5 435.3L567.7 434.9M432.5 564.2L435.3 563.2L437.4 562.5M440.1 561.3L441.0 563.5L440.8 559.9L443.8 557.8M446.3 554.1L447.7 552.2L449.1 549.2M452.1 545.9L451.0 541.5L448.0 535.8M449.3 532.1L453.7 531.1L455.7 530.1L457.4 533.8L459.4 533.7M465.2 530.1L468.6 529.1M477.0 518.8L480.7 516.9M588.8 437.5L590.3 434.2L587.8 433.6L584.2 431.0L582.4 429.1L580.6 425.9L579.7 424.0M576.2 421.5L576.6 418.2L574.5 417.1L572.1 414.6L569.8 413.5L566.0 411.4L563.7 409.6L560.3 407.8M558.9 414.6L555.2 415.8L553.3 421.5M554.1 418.8L552.7 421.9L550.3 426.2M538.8 497.0L541.6 497.4M545.0 496.0L544.5 489.7L548.6 490.4M548.0 485.6L550.7 484.8L551.8 487.7M553.2 486.1L552.3 482.5M552.6 479.3L555.6 477.3L558.1 475.3L561.0 471.8L561.1 478.8L564.1 477.8L567.4 477.0L569.4 475.6L572.9 475.4L575.5 475.3M579.3 474.7L582.4 474.1L585.3 472.7L588.2 472.2L591.7 470.3M799.4 445.4L803.4 445.7L805.5 445.0L808.1 443.6L812.5 443.2M812.2 441.0L815.4 438.6L817.5 436.0M817.1 442.5L815.0 436.3M434.0 550.8L435.7 549.7M433.2 545.1L432.4 538.4M435.2 539.0L439.1 540.9L437.7 537.1L440.7 540.4L443.7 541.2L447.4 543.6M449.9 546.5L452.7 547.8M455.7 546.2L457.8 546.4L459.8 545.5L461.3 543.7L464.6 542.8L466.1 546.4L468.7 546.2M472.3 547.4L475.0 549.5L476.4 551.0L479.0 552.8L482.1 553.7L484.6 553.7L487.9 554.5L490.4 554.4L489.2 549.1L493.2 549.3M514.3 445.1L511.9 445.7L510.0 446.7L509.5 444.3L505.9 444.9L503.4 445.5L500.0 447.7L496.5 448.4L492.5 447.3L489.1 446.6L486.7 446.2L484.3 445.4L481.5 445.0L478.2 444.7M475.6 444.9L472.0 443.7L469.3 443.9M465.2 443.0L462.3 443.4L458.0 444.1M493.2 416.4L490.7 415.2L487.4 414.1M476.1 406.2L476.2 410.3M467.3 405.4L463.6 404.6L459.2 404.3L455.1 402.3M454.1 405.8L451.8 402.2M449.3 408.6L446.2 408.4L444.5 415.1L443.6 417.7L440.1 417.6L441.0 411.5L438.8 411.6L434.4 412.4M431.9 412.5L428.0 414.0L428.4 420.2M866.5 328.6L869.1 328.3L869.1 332.2M871.0 330.4L873.9 329.2L877.8 326.7L880.8 325.5L884.9 323.8L887.3 323.0L889.2 322.4L891.1 320.9L892.7 319.5L894.8 316.7L896.6 315.6M628.9 593.8L632.5 595.6L635.1 597.9L636.7 599.4M640.0 602.2L639.3 607.1L637.2 613.0L638.8 615.7L641.2 619.3L642.3 621.9L643.6 624.3L643.8 620.5L644.5 617.3L647.7 618.4M650.2 618.1L652.4 617.6L655.0 617.9M434.7 315.1L431.4 313.3M429.1 311.4L425.6 310.9L422.2 309.5L419.5 307.2L416.1 304.6L414.2 302.6L413.1 300.4L411.3 297.9L409.3 297.0L407.0 297.1L409.8 290.7M407.2 291.1L403.6 291.2L400.7 290.0L398.5 289.1L395.2 288.2M604.6 513.2L608.0 515.1L610.5 516.9L613.5 519.2L611.5 523.9L615.3 525.1L619.3 526.8L623.3 528.4L625.5 528.8L627.6 530.3M631.0 531.1L633.2 531.9L636.4 532.9L640.4 533.9L642.2 534.9M644.3 537.6L641.9 543.0M794.5 679.2L790.1 680.4L786.8 682.6M789.2 688.9L786.4 688.6M787.8 693.6L789.9 697.8M785.4 695.5L781.4 695.5L778.1 696.3L780.3 701.4M869.4 324.4L872.3 325.1M876.4 326.4L876.4 331.4L879.2 331.4L881.7 331.6L882.2 336.6M885.4 335.5L888.8 335.0L891.7 335.4L895.2 336.1L898.2 337.1L901.8 337.5L905.1 338.4L907.1 338.6L911.3 339.8L910.8 344.0L911.1 340.3L910.9 343.4L915.4 343.9L919.8 342.7L923.2 343.3L925.2 343.5L927.5 344.7M841.3 424.9L840.1 418.9M839.9 416.6L839.6 411.1L843.4 411.9L845.6 412.2L849.9 412.6L853.0 412.8L857.2 412.1L857.7 408.5L856.3 403.4L860.1 401.8L864.6 401.6L866.7 402.4M868.6 403.9L871.8 405.2L876.2 404.6M880.0 405.3L883.0 405.4M711.0 567.6L708.8 567.9L705.4 567.2M700.7 568.3L698.2 568.8L699.5 573.3M697.2 573.5L692.9 572.4M689.9 573.2L689.3 578.8L687.8 580.3M510.0 339.7L507.4 338.0M504.7 338.6L500.9 338.3L501.6 331.7M493.7 332.2L489.3 333.6M485.5 335.4L481.5 335.2L481.2 338.9L478.8 337.3L479.8 334.7L477.2 331.8L476.0 329.7M474.6 325.7L472.0 322.0L473.3 316.2M475.5 305.4L472.6 303.7M473.0 297.3L471.0 293.2M902.9 607.3L900.4 606.7L896.6 604.5M894.6 603.3L895.2 599.6L891.7 599.2L889.0 600.0L886.3 600.1L881.9 599.5L879.0 599.1L876.5 598.5L874.2 598.9L870.5 597.4L868.0 602.8L870.6 597.7L873.6 592.7M871.4 592.9L867.4 592.7L864.1 592.9L860.5 594.6M477.4 695.1L480.9 694.6L483.9 700.7L485.8 699.7L488.5 696.8L488.1 691.1L491.0 691.8L493.6 693.1L497.1 692.6M500.3 692.8L499.0 686.2M704.7 605.0L708.9 604.5M707.4 600.8L711.3 602.7L715.0 604.8M719.1 605.9L722.3 605.5M724.7 606.1L727.7 608.3L730.0 609.4L733.7 608.9L736.5 608.9L739.3 609.3L743.1 608.3L746.2 607.4L749.8 606.3M752.3 606.3L755.4 607.5L757.5 608.7L759.9 610.7M762.4 618.0L764.9 619.8L768.6 620.6L767.4 614.8L767.8 608.6L771.3 608.4M509.8 290.4L513.3 291.8L517.0 293.5L520.8 295.1L523.0 297.4L524.6 300.2L527.1 302.7M528.8 304.0L526.7 308.6L527.6 306.2M649.0 557.4L646.2 557.8M640.0 559.4L636.6 561.2L634.7 562.6L635.3 567.8L631.0 569.0L631.5 573.0L631.2 568.3L628.0 567.9L626.0 568.5M828.9 380.3L824.9 378.9L821.0 378.7L818.9 378.9L816.5 378.0L813.6 375.6M810.7 374.6L806.7 373.9M803.5 372.0L801.2 369.7M802.5 365.9L800.9 372.4L798.9 372.0L796.2 370.9L793.7 370.9M791.1 370.0L787.4 368.3L784.8 368.4L780.6 368.0L780.6 364.5L778.3 364.8M779.2 360.4L779.7 363.9L781.5 358.8M592.6 603.1L589.9 603.2L586.5 601.8L584.1 599.6L582.1 598.2L581.2 595.7L578.5 593.7L574.3 593.3M570.5 594.3L569.9 590.2L566.5 591.7M564.1 593.1L562.4 594.3M602.7 648.3L604.2 654.6M601.7 654.7L597.7 656.0L595.7 657.7M590.6 654.2L587.6 655.4L587.4 658.2L585.2 658.4L582.2 659.1L579.8 658.7L576.1 658.0M572.2 658.5L568.2 657.7M565.2 656.5L561.9 653.6L558.4 652.7L554.9 650.8L551.5 650.6M603.6 418.2L607.9 418.6M611.6 421.1L613.9 424.2L615.3 426.7L618.8 428.9L622.3 430.5L624.6 431.9L628.4 433.9L627.9 436.6L629.9 437.4M639.2 550.8L643.2 549.6L644.7 554.0L647.5 552.4L647.1 547.5L648.1 550.6L649.3 546.2L650.2 552.2L652.8 550.7L652.0 548.2M650.3 542.3L652.6 541.4M659.0 540.2L662.6 540.1L662.9 534.8L666.1 533.2M739.0 619.9L736.5 619.3L734.2 619.9L732.0 621.2L728.4 621.3L724.7 623.1L720.8 624.1M717.4 626.4L716.2 628.0L714.2 629.7L711.1 632.3M711.7 634.5L708.0 636.0L704.4 635.9M916.6 631.0L914.0 631.3L911.3 631.5M902.2 636.5L902.6 639.9L900.0 634.1L897.8 635.5L895.0 636.7M891.9 636.4L887.9 637.1M885.2 637.3L882.1 636.3L879.8 636.3L876.3 635.5L873.7 633.6M870.5 633.7L870.2 631.6L867.4 632.2M867.2 629.6L862.8 630.1L860.5 629.9L862.4 634.1M635.5 454.9L637.4 452.8L640.1 449.5L638.9 446.9L641.2 444.7L642.2 442.8M643.0 440.0L642.7 435.4L642.4 429.0L644.1 427.3L645.1 425.3L646.9 422.6L648.4 425.2L647.9 422.9L646.6 417.0L645.0 410.7L647.6 407.2M880.5 495.2L879.2 493.6L876.1 490.6L874.9 488.8L874.1 486.3M871.4 484.3L868.8 481.5L867.2 480.3L864.3 486.4L861.3 486.0L857.5 484.5L854.5 482.4L852.7 479.6M853.2 477.6L851.2 475.2L848.8 472.3L845.2 470.3L842.3 466.7M799.5 639.5L802.0 638.8L804.3 637.7M807.2 636.9L807.5 638.9M814.2 638.5L817.1 636.5L819.4 634.9L822.4 632.4L824.2 630.2L825.9 627.8L829.7 626.0L832.7 622.9L832.4 619.9M833.7 625.0L832.3 621.4L834.3 619.3L835.6 616.9L837.1 613.6M839.2 611.7L841.9 609.2L843.8 606.2M428.5 287.4L431.8 286.2L434.0 285.2M437.4 284.8L441.6 283.8L440.7 287.1L445.1 287.5L444.7 293.3L447.6 294.1M449.6 295.7L450.8 297.6L452.9 299.1L454.3 301.2L452.9 305.3L457.3 305.7L461.4 304.3M463.6 309.4L467.0 309.4L470.8 310.3L473.5 311.5L477.9 311.3M482.3 310.2L485.1 309.9L489.4 309.0L492.1 307.8M477.5 646.6L477.1 641.9M474.7 642.2L471.4 643.2L468.4 644.2L466.1 644.1L462.2 642.8L459.6 641.9M457.0 640.8L453.5 638.6L450.4 636.1L446.8 634.9L443.8 634.7L440.8 633.8L440.0 629.9L438.2 627.4M436.6 621.5L434.2 618.3M427.9 487.3L431.2 486.7L433.4 485.3L437.0 483.5L436.8 486.9L436.3 482.3L438.7 481.8L437.6 475.6L440.1 474.4L442.3 473.5L442.7 469.1M445.4 466.9L448.0 465.6L450.7 463.4M453.4 460.5L455.1 457.4L456.0 454.9L457.6 453.1L459.2 450.6M461.2 447.2L462.5 444.8L463.8 443.0L465.7 440.1L466.1 438.0M626.5 363.7L623.0 363.2L624.1 370.0L620.6 370.4L620.9 368.3M614.4 364.8L613.1 362.9L611.7 368.1L609.1 365.8L610.2 370.8L609.5 364.4L607.3 362.1L605.3 360.4L602.7 359.6L598.2 359.9M594.4 358.7L593.9 361.9L591.5 362.0M588.1 361.3L587.4 364.8L582.8 365.2L578.5 366.1L574.3 367.5M818.3 352.0L816.2 351.3M813.5 349.7L811.7 348.3L809.7 347.2L807.7 346.2L804.2 345.5L800.3 343.4M797.6 340.1L795.1 339.2L793.0 337.7M790.0 335.9L786.2 335.8L782.2 336.7L778.3 336.2L776.3 336.9L774.0 337.2L771.4 337.0M767.2 336.5L765.2 336.6L763.0 336.5L763.9 333.8M759.5 333.8L756.0 334.6M701.0 318.4L703.5 318.4M704.0 315.2L707.0 314.8L709.4 315.5L709.3 318.0M712.2 319.6L714.6 320.1L716.8 319.6M720.2 317.9L723.9 316.7L727.1 315.3L729.0 314.4L729.3 321.2M732.4 320.4L735.5 318.9L738.7 316.5L740.4 314.7L743.7 313.8L746.2 312.3L749.1 310.4M749.0 306.5L750.0 304.5L751.7 301.0L752.5 297.7L755.0 294.5L758.5 293.0L760.3 291.4L762.0 289.5L763.6 288.2M872.1 444.6L868.9 444.7M865.2 443.3L861.7 440.6L864.1 434.7L861.8 433.9L861.5 436.1L859.2 434.3L856.3 434.0L851.8 435.1L847.4 436.0L843.6 436.0L840.4 436.9L838.6 438.0L837.1 439.7L836.7 433.4L833.9 434.6L829.5 435.3M825.2 437.7L822.9 438.9L819.6 439.5L819.6 443.9L819.9 440.6M625.2 581.9L622.7 583.1L623.3 587.3L619.0 587.6L619.6 590.2L615.4 590.6M612.4 591.0L610.7 584.5L608.2 585.3M602.8 589.6L601.6 586.7L600.3 580.1M598.2 581.3L594.3 582.0M587.2 584.2L584.2 583.4M581.3 583.3L577.4 583.1L573.1 582.1M569.8 582.2L566.0 583.4L563.1 585.4L559.2 587.4M476.8 303.0L474.0 303.3L470.5 302.8M465.6 299.7L461.2 300.4L458.8 301.3L455.4 301.8L452.2 300.6L449.4 299.8L446.4 299.0M592.2 342.7L588.2 343.9L584.1 344.8L582.0 345.5L579.3 346.1M575.6 347.7L575.8 349.9M573.0 352.3L571.9 346.0L571.2 342.5L568.6 343.8L564.7 345.2L561.0 347.0L557.1 346.9M549.1 354.1L545.7 354.2M543.6 354.0L540.4 354.0L538.1 353.0L539.2 358.5L536.4 358.0L532.8 357.7L528.7 358.1L525.8 357.1L522.7 357.5L520.6 357.9L522.0 363.9M714.0 419.5L716.9 418.9L719.1 417.9L722.5 415.1L724.8 413.0M728.6 410.8L728.6 415.3L730.3 413.8L732.9 413.4L737.1 414.4M501.0 460.9L497.0 461.8L493.3 462.7L490.9 463.0L491.8 459.0M489.6 459.6L489.5 466.4M487.3 468.1L485.1 470.7M482.3 471.5L480.2 472.3M477.8 473.5L473.9 475.6L470.3 475.8L466.9 477.3L463.3 479.5L460.6 482.9L458.6 484.6L455.4 486.6L453.0 488.7L451.4 490.4M625.7 535.8L629.5 534.0L632.5 531.8M633.9 530.2L636.1 529.3M639.1 528.5L641.2 527.4L641.1 529.6L640.4 526.6L643.0 523.2L645.7 519.6L647.3 518.4L649.5 516.2L649.2 513.5L653.4 512.1L656.8 509.5M660.4 508.1L660.4 505.0L663.2 503.0L665.7 501.7L669.7 500.6M667.7 494.0L669.4 492.4L673.6 490.9L675.7 490.8M891.1 608.6L894.0 609.1L897.2 610.5M900.9 611.6L900.4 606.9L902.9 608.4M905.0 603.3L907.7 604.5L910.5 606.0M913.3 611.5L913.6 617.9M915.9 618.1L919.0 618.9L921.7 619.2L925.3 619.1L929.5 618.9M929.1 623.5L932.2 624.2M932.3 617.4L936.7 617.5L940.1 617.1M903.7 563.2L901.2 563.2L903.1 566.2L900.8 565.9L898.1 565.0M894.9 565.6L892.9 567.2L889.3 568.2L887.3 562.9L884.5 564.5L881.3 565.5M876.6 562.3L874.1 562.6L870.9 563.5L867.8 557.8L865.1 558.3L861.0 558.1L857.9 559.0L855.0 560.8L851.9 561.5L849.8 562.4L847.7 563.0M495.2 552.2L498.3 551.0M499.9 549.6L501.7 554.3L505.5 552.0M507.6 549.4L511.3 547.1M514.8 546.3L519.1 546.1L522.1 546.2L522.1 548.4L525.1 549.4M530.3 552.0L533.1 553.2M537.5 553.4L541.4 553.6L545.0 555.1M549.3 555.9L551.7 557.1L553.7 557.7M557.4 558.1L559.9 559.3L564.1 559.6L566.8 560.1L566.6 556.8L569.7 554.8L571.9 553.2M571.2 546.9L575.6 546.2M920.4 513.3L918.0 513.0L915.9 513.1L915.6 516.0L911.9 517.3L908.4 517.5L905.8 517.3M902.7 516.2L899.6 514.7L897.2 513.2L895.1 510.9M894.8 507.0L892.8 506.8L893.3 511.8L890.7 510.3M889.8 516.0L886.1 516.2L886.0 523.1L882.0 522.6L878.1 522.9L875.6 522.3L872.4 520.9L872.3 525.5L869.4 525.2L867.4 518.9M716.7 543.8L714.2 545.7L711.5 547.4M707.0 551.3L705.9 554.0L704.7 557.7L704.4 559.8L701.2 562.7L697.7 564.8L695.7 566.6L694.8 561.6L691.4 564.0L687.3 565.4L685.1 566.8L687.0 573.3L683.1 573.4L681.1 573.2L676.5 573.6M668.8 571.8L666.5 571.7L662.2 570.2M841.7 487.7L842.9 490.0M845.4 485.6L848.3 484.7M850.4 484.0L852.4 482.4L854.8 480.5L855.9 478.7L857.0 476.4L860.4 474.6L861.6 477.0L865.0 475.7L867.2 474.4M871.4 473.5L874.3 473.1L876.6 472.1L873.6 466.9L876.3 464.7M878.0 463.6L880.1 461.2L882.6 459.9M885.9 459.4L888.8 457.8L888.6 453.7L890.9 454.2L894.4 454.6M755.1 355.7L758.4 354.6L758.2 356.9L760.9 356.7L761.3 353.1L764.6 353.5L767.1 353.4L769.1 353.5L772.1 352.3M778.8 350.1L780.6 348.8L784.7 346.7L788.0 344.6L788.6 341.0L790.7 339.1M792.4 337.9L794.7 335.9L797.5 334.3L799.8 334.0L803.5 333.6M805.7 334.0L809.5 333.3M506.0 624.8L510.5 624.7M514.6 626.3L518.4 626.6L522.3 627.8M524.6 628.2L528.9 628.1L532.9 628.9M536.9 629.2L541.1 628.8L542.1 623.1L544.9 622.4L544.0 624.3L545.9 623.6M545.0 627.1L547.9 628.2L551.8 627.9L554.0 627.3L557.5 627.4L561.6 628.0M565.2 627.6L567.4 627.0L567.1 631.5M571.4 631.9L575.4 631.1M646.8 336.9L643.6 336.5M640.9 336.1L638.1 335.7L635.7 335.4M631.6 330.3L630.7 327.0M627.4 326.2L623.9 326.1M619.7 324.3L616.4 321.8L612.4 320.5M605.3 323.2L603.0 324.8L599.4 326.3L595.6 326.7M595.5 322.4L593.2 321.7M588.7 322.5L584.4 323.9L584.9 318.3M806.0 319.6L802.7 320.3L799.3 321.7L796.3 323.2L795.9 320.3M790.5 318.4L786.9 319.9M783.8 321.1L780.2 320.6L780.5 318.0L776.4 318.0L774.0 316.9M771.8 314.9L772.8 310.8L770.3 309.2L767.8 308.8L764.3 309.5L761.1 310.6M673.3 400.7L669.0 400.3L666.6 400.2M662.0 402.9L659.9 406.0M656.0 409.4L655.7 403.6L655.7 400.9L652.3 402.0L647.7 401.3L645.0 401.6M642.8 401.7L643.8 403.8L641.9 404.4M639.4 404.1L637.4 403.0M638.4 406.4L635.9 405.1L633.3 403.1L631.3 397.1M628.6 394.5L626.2 391.1M692.9 387.0L694.9 387.6L695.0 382.7L694.1 378.7L697.8 379.3L702.2 379.8L706.3 381.3L710.0 381.0L714.1 382.2L718.1 382.0L721.6 381.1L721.2 378.1L723.8 379.1L725.5 373.2L727.6 373.9L731.6 373.4L734.4 373.7M736.9 373.2L736.7 379.0L739.5 377.2L742.8 376.9L745.7 375.8M749.9 375.4L752.7 376.5L756.9 376.9L759.7 376.6L763.9 374.9L764.9 368.5M840.8 376.7L842.8 370.1M836.9 369.3L833.7 367.4L830.4 364.2L831.8 361.0M832.7 355.2L828.8 354.5L826.5 353.4L822.2 353.0L818.6 350.5L815.9 349.3L815.7 353.2L816.4 350.7L813.1 347.5L809.8 344.6L807.2 341.2L804.4 340.2L802.4 339.4M804.1 336.1L801.6 335.7L799.5 334.6L797.2 334.0M883.8 357.9L881.2 357.7L879.3 357.2M872.1 357.3L869.4 357.0L865.3 355.8L864.1 350.5L864.8 355.8L862.5 356.8L862.5 353.2M858.2 353.5L854.8 353.8L851.6 354.5L852.0 358.4L848.8 361.1L846.4 362.2M781.1 548.1L785.2 546.6L789.1 546.2L792.3 545.4L795.1 544.6L798.1 543.2L800.3 541.8L802.6 539.9L804.7 539.6L807.5 539.5L811.6 538.8M814.2 538.8L818.4 539.2L821.4 539.4L819.3 534.5L820.9 539.0L822.9 537.9M825.8 537.5L829.4 535.9L832.7 535.2L836.1 535.8L839.8 535.6L842.9 533.8M840.6 527.6L842.9 527.9L846.8 528.9L849.6 529.3L852.5 528.5L855.5 527.6L855.6 531.1L859.1 533.1M416.1 415.7L414.1 415.3L412.7 417.9L412.4 420.9L409.8 420.3M406.9 419.1L404.8 418.8M400.7 418.8L401.3 416.1L398.0 422.1L395.4 422.5L391.4 423.6L390.8 425.8L386.8 426.5L383.9 425.5L381.3 425.3L378.3 425.5L374.9 425.4L371.4 424.3L369.6 422.8L368.2 421.2L366.6 419.6L364.9 417.5L362.9 414.3M926.7 331.7L923.2 332.3L920.7 331.7M916.4 335.0L913.7 335.7L914.2 329.2L912.1 330.5L909.3 333.3L906.2 335.4L904.6 336.7M904.3 339.5L906.2 335.2L902.4 334.1M902.5 330.5L901.3 337.4M901.9 335.2L899.3 334.2L895.9 331.3M893.7 330.2L890.0 327.7M886.0 325.5L883.4 323.9L879.2 322.2M876.8 320.7L876.4 322.9M871.1 322.3L868.7 322.8L865.8 322.8M469.4 513.4L473.3 512.3M477.8 511.6L480.6 511.1L479.8 508.3L482.7 508.7L487.1 509.5L489.7 509.4L488.4 504.0L492.0 501.6L494.2 501.1L497.7 501.6L498.9 504.6L498.8 509.8M503.3 510.6L506.8 511.6L510.3 512.1L514.6 512.9L514.1 509.3M518.1 507.9L521.3 507.4L525.6 506.5L529.3 507.0M531.4 507.4L532.0 510.1L536.0 512.1L538.8 514.4M582.5 581.6L586.9 580.9M589.8 586.4L592.4 587.2L596.2 587.8L598.9 589.7L602.1 592.9L605.2 593.8M608.0 595.2L610.2 595.1L612.3 595.9M513.0 566.9L509.4 565.7L508.7 561.9L505.6 560.5L503.6 558.6L500.5 556.8M496.5 555.3L492.1 554.6L489.5 554.2L489.7 551.8L485.9 551.4L485.8 557.6L481.2 557.2L478.7 556.3M471.7 554.8L469.2 555.6L469.5 551.8L465.5 553.3L462.6 553.4L462.1 548.1L459.9 546.7L455.8 545.1L454.0 543.6L454.0 549.0M738.1 300.0L741.5 300.3M743.7 300.2L747.4 299.6M751.0 294.9L753.3 294.4M756.2 294.1L759.8 295.4L761.5 296.6L764.4 299.1L767.3 301.2L769.3 302.2M772.2 304.8L775.4 307.6L777.5 309.4L781.2 310.1L784.4 310.2L788.0 310.4M502.1 352.2L504.3 352.8L504.5 356.7M508.2 356.1L507.7 351.2L511.8 351.0L514.7 349.6L518.4 346.9L522.1 346.1L522.9 350.0M526.8 342.1L527.7 339.7M526.9 336.8L528.0 333.0L530.0 330.2L532.0 328.9L533.9 327.7M538.1 326.8L538.4 331.9L540.6 332.4L544.7 333.9L547.3 334.8M792.3 592.4L792.6 598.1M795.3 596.8L797.1 594.6L799.7 593.3L803.9 592.6M808.3 592.9L812.6 594.6L812.3 589.9L816.7 590.1M818.1 595.1L820.2 601.0L819.8 598.1L823.5 599.6L822.4 595.7L824.9 595.4M828.6 596.5L831.5 597.3L831.0 594.7M663.9 516.8L667.6 515.8L670.5 515.1L674.1 514.4L677.9 512.4L681.0 510.9L683.6 508.3L686.0 505.5L688.6 504.5M691.7 503.5L694.4 503.5L696.8 503.3L701.2 504.0L703.4 503.8L705.8 502.7L710.0 502.7M715.9 509.2L718.9 511.6M665.0 471.3L667.3 470.5L670.8 470.9L674.2 470.0M682.6 468.1L682.1 473.7L681.3 477.7L685.4 477.5L688.8 478.7L687.9 485.5M688.5 481.9L691.7 484.2M843.9 595.6L839.6 597.0L836.4 597.4L833.3 597.7L834.8 603.0L832.4 603.9L828.7 603.4L824.5 605.2L824.9 608.8L822.8 611.9L821.2 608.4L821.2 611.1L819.8 606.5L817.2 607.3L813.9 608.4L812.0 609.3M808.8 609.2L805.4 610.9M802.9 612.0L799.7 614.6L796.6 617.7M795.2 619.5L791.1 621.6L787.5 622.5L785.3 622.1L784.7 617.9L780.2 618.1L781.4 621.1M704.5 486.0L700.2 486.2L695.7 487.1L692.7 488.0L689.0 488.0L685.5 489.7L683.7 490.9L680.0 491.3M676.7 493.3L673.0 494.4L668.8 493.9L665.2 494.1L663.2 493.3M659.8 490.4L659.7 492.9L657.6 491.8L658.1 495.7M656.5 493.1L655.4 489.7M653.9 485.7L651.1 482.6L650.3 476.2L648.6 474.3M647.1 472.3L645.0 469.7M577.8 403.8L578.2 410.6L580.3 410.3L583.6 410.6L586.5 412.0L589.3 412.6L591.9 413.8L592.1 411.5L595.9 410.5L599.2 408.1L602.9 407.0L606.8 406.6L607.6 411.3L607.7 415.8L610.5 412.8L610.5 409.4L611.9 406.0M613.3 401.8L616.3 399.4L619.7 397.2L621.2 395.1M672.5 688.0L675.9 686.9M674.4 683.8L677.2 683.3M677.2 679.1L681.0 679.6M684.8 681.6L687.0 683.2M689.2 683.2L691.6 682.0L690.2 678.7M692.2 677.6L695.5 675.1L698.1 674.6L701.7 671.7L701.4 667.3L703.4 665.3L704.4 669.6L706.2 666.5L707.4 664.2L707.9 662.2M813.9 293.9L814.2 297.5L810.3 297.4M804.1 290.8L799.6 291.2L795.5 292.5M793.0 293.8L789.5 294.9M789.3 292.8L785.2 293.8L782.3 295.2L779.4 296.8M534.8 692.7L535.3 694.7M531.7 694.8L528.8 694.5L525.0 692.4M521.4 690.1L517.5 688.0M514.2 686.8L510.8 684.9L507.0 684.9L503.7 683.9L501.7 683.1L498.8 683.3L496.6 676.8M490.7 675.7L493.6 680.4L492.6 674.2L490.1 674.7L485.9 675.3L483.5 675.9L480.4 675.4L476.7 675.6M833.6 595.2L835.6 595.4L839.7 597.4M839.7 601.8L844.1 602.5L844.3 605.5L848.1 606.8M849.7 608.3L852.1 610.6M852.3 606.1L854.7 608.9M475.0 615.7L477.0 611.6L480.6 611.9L480.9 606.9L482.6 608.1L485.5 610.7M486.9 612.6L488.4 615.8M489.8 618.1L491.8 619.7L493.3 621.6L494.6 625.0L494.2 629.3L496.2 630.8L497.5 632.7L499.6 636.6L502.0 639.3L505.7 641.7L508.7 643.0L510.5 645.2L512.0 647.2L513.6 650.8L513.8 648.6L516.7 649.1M519.1 653.7L521.2 648.7L524.1 642.4M779.5 401.6L775.9 401.2L771.5 401.4M768.5 401.4L765.3 401.0M764.8 398.5L761.9 398.5L761.7 394.9L758.2 393.4L755.7 391.0L751.9 390.2L748.8 389.1M746.6 387.5L744.0 384.6L742.5 382.4L740.1 378.7L739.3 376.9M737.9 375.2L735.5 373.4M559.2 646.7L562.1 652.2M566.1 652.5L569.5 653.9L573.3 654.6M575.2 654.0L577.6 654.4L580.2 656.0M580.7 653.2L583.0 653.5L585.8 652.8M590.2 652.3L594.2 650.5L596.2 648.2L598.3 644.6M599.6 642.8L602.6 639.4M603.4 642.7L603.8 640.7M604.0 638.0L605.1 635.6L606.8 633.2M672.7 668.5L675.6 668.7M679.0 668.9L682.3 669.8L685.9 668.9L690.5 668.5L693.4 667.7L695.9 672.8L699.5 674.8L702.7 677.2L706.7 678.7M709.0 679.8L710.9 681.6L712.8 682.1L715.2 682.3L717.3 682.5L721.7 682.7L720.2 679.9L722.7 677.9L723.3 683.1L725.3 682.6L728.1 681.0M730.9 679.6L729.7 676.9M731.0 673.9L731.3 680.5L732.3 683.8M464.6 324.1L462.3 323.6L458.4 321.3L455.5 318.0L453.3 316.8L449.4 315.3L447.3 314.3L444.6 312.1L442.9 309.6L442.1 307.5L440.3 306.1M675.0 639.3L678.1 639.7L681.7 639.4M683.7 639.8L687.6 638.7L692.1 638.4L694.3 638.4L696.5 638.4L699.6 637.3L701.7 637.1L703.8 637.1L707.5 636.3M416.8 388.0L414.4 387.9M410.5 386.3L410.1 383.8L406.8 384.7L404.5 390.8L400.2 391.7L398.3 392.7L395.7 394.0L392.9 396.2M390.6 397.7L387.3 397.5L384.3 396.2M381.1 393.3L379.2 392.6L376.6 392.1L373.8 392.7M368.7 393.3L364.7 393.3M364.2 396.3L361.9 396.6L359.2 398.1L356.0 400.5M490.0 482.4L487.0 482.9L483.0 483.3L481.8 488.4L479.7 487.8M473.0 486.7L468.7 486.0L466.7 484.7L463.9 484.4L461.0 484.9L461.2 488.6L458.0 488.1L457.9 490.4M453.3 490.1L451.1 489.9M447.3 489.2L443.8 488.4L441.8 486.9L439.5 484.6L436.8 483.6L432.5 483.6L433.3 478.6L430.0 480.5L427.7 481.3M743.4 436.7L746.0 438.2L745.7 434.0L748.3 436.5L749.4 438.5L749.6 434.9M751.3 436.3L752.9 437.9L752.2 440.5M755.0 443.2L756.1 445.3L756.7 447.4L754.8 452.3M755.3 445.8L756.9 447.5M759.1 448.1L756.8 454.4L759.5 457.0M764.7 461.6L767.5 465.1L769.9 467.1M776.2 471.7L777.5 466.1L780.2 469.1M782.6 469.8L786.0 469.2M770.6 437.7L770.0 435.2M772.9 435.2L771.8 431.1L775.6 432.2L779.4 433.5M781.3 434.6L785.6 436.2M788.9 436.9L787.3 432.3L790.0 431.7L789.0 428.8M582.5 496.9L578.6 495.8L576.1 495.7M571.7 495.4L567.4 496.7L564.7 496.5L561.5 495.3L558.9 495.4M551.9 491.9L552.2 497.0M779.5 584.5L782.7 583.4L786.4 583.5L788.7 583.4L791.2 583.7L793.9 583.4L796.7 584.0L795.4 579.2L798.6 580.0L801.9 582.1L804.7 583.2L808.7 582.8L810.8 582.6M812.7 582.2L814.8 582.2L817.9 581.3L820.9 581.7L824.9 581.9L825.0 579.0L827.9 580.0M900.8 389.2L898.0 388.6L895.1 389.5L893.0 391.3M889.7 392.7L887.2 394.9L885.7 397.1L884.4 393.1M883.0 396.4L880.0 399.0L876.4 399.8L874.5 401.2L871.1 403.8L868.5 405.9M866.5 409.3L865.2 411.3L861.5 413.5L858.4 415.1L854.9 415.0M853.8 412.9L849.6 412.9M870.8 386.5L870.1 388.6L868.8 393.5L865.3 394.0L863.1 394.2L861.1 393.3L859.1 392.8M854.9 392.7L852.4 392.0L852.4 394.7L849.8 395.4L847.4 395.7L845.1 397.0L843.1 398.4L839.4 400.1L836.3 406.1M833.0 407.5L834.4 402.0L831.2 403.4L828.2 406.2L825.9 409.8L824.2 411.4L824.7 406.2M536.2 556.9L533.4 556.5L533.4 561.6L532.6 563.6L528.4 563.7L525.4 562.2L524.8 566.9M522.1 564.2L521.5 567.5L523.5 562.2L521.5 560.6L517.4 559.0L514.6 559.4M508.4 557.0L510.1 550.2M507.5 549.0L504.4 546.4L502.1 545.7L499.3 545.4L497.1 544.8L494.2 542.6M490.2 540.7L487.8 539.7M606.8 289.7L611.2 289.8L613.4 296.3L616.9 298.5L616.1 296.0M618.9 297.1L617.3 292.2L621.1 293.5L620.5 290.5L622.6 291.4M626.3 292.3L629.4 294.0L631.4 294.9L633.3 295.8L636.1 295.6L635.8 291.9L637.8 291.3L638.0 287.5M641.9 285.8L643.6 284.3M646.1 283.7L645.8 280.3M648.2 278.1L650.1 275.4M500.5 560.9L505.0 561.0L507.9 561.4L511.3 562.1L514.4 561.4M521.6 560.5L524.0 560.3M526.6 559.6L529.8 557.2L531.7 554.5M724.6 700.6L720.8 700.1L717.6 701.1L714.3 702.2L712.2 703.6L708.4 703.8L706.5 704.7M703.5 706.6L701.4 708.2L697.3 709.1L694.8 709.7L694.0 712.3L691.2 713.7L688.8 716.0M685.8 718.9L686.5 713.7L683.2 715.3L678.9 716.3L678.7 719.1L676.8 720.9L679.4 715.9L676.9 719.2L673.5 721.1M670.0 726.5L669.1 730.3L666.3 730.7M850.7 700.1L854.9 700.0M858.9 699.8L862.9 698.7L864.2 702.7L868.5 701.9M871.4 702.1L873.7 708.3M877.7 708.9L881.5 708.8L885.2 708.8M885.3 704.0L888.8 703.9M894.5 702.5L895.0 706.4L896.9 712.6L898.6 710.3L902.4 709.3L905.8 709.2L909.4 709.1L913.5 709.6M511.2 529.4L511.4 536.3L511.0 539.3L508.3 540.8L505.4 543.8M501.0 544.5L497.8 544.0M497.7 541.5L495.4 540.2L495.5 542.8L493.4 539.5M490.5 536.5L487.9 534.5L486.2 533.6L484.2 532.9M765.9 606.8L762.7 606.7L758.6 608.2L757.4 610.2L755.1 610.0M753.2 609.5L750.8 607.7M747.7 604.7L744.2 603.4L740.0 603.1L735.6 602.3L731.8 600.9L727.7 600.7L726.9 607.1L724.2 607.6M718.0 609.3L714.4 609.2L711.4 609.4L708.4 610.4L705.0 612.1L700.6 613.1M698.3 613.8L699.0 607.7M748.8 502.4L749.0 508.7L748.8 504.0M744.7 505.8L743.7 500.9L740.6 500.5L742.2 506.9L739.4 505.8L736.1 505.9M736.1 501.3L731.8 502.6L729.9 503.0M723.3 503.8L719.8 505.8M763.9 382.9L760.2 383.4L756.9 384.5L755.0 378.7M754.0 371.9L751.8 372.5L747.9 374.4L744.2 374.3L741.2 373.5L738.1 373.4M735.2 367.0L731.3 365.6M728.1 363.1L729.5 368.4L726.4 367.0L723.5 366.8L720.6 366.5L719.8 360.8L716.9 360.9L714.0 360.8L711.2 360.5L706.7 360.8M703.9 360.8L701.0 359.5M694.3 360.5L691.5 360.0L688.4 358.8L684.3 357.9M441.0 620.9L444.3 619.5M447.1 618.2L449.2 618.3L451.3 619.1L448.8 613.5L452.8 614.1L455.1 614.1L458.0 612.7L460.6 612.0L464.7 611.7L467.6 611.2L470.2 609.4L470.7 616.2L472.8 615.7L477.0 615.2L480.6 614.5L483.7 614.0L486.2 614.0L488.4 614.3L486.7 609.1L488.2 614.0L491.6 612.5L492.5 617.8L494.9 618.2M849.5 307.9L845.1 308.4L842.2 308.2L839.1 306.9L835.4 304.2M828.2 304.3L824.1 304.0L822.9 297.5M819.2 298.5L820.7 304.1L818.0 305.8M818.6 308.1L817.1 309.5M818.1 311.7L816.2 312.9L816.5 315.5L817.3 321.4L815.5 320.5L812.0 318.7L810.0 318.1L805.9 318.3L802.8 319.3L798.8 319.6L796.0 320.9M569.1 375.8L566.1 375.4L563.5 375.8L563.7 371.5L562.2 373.2L559.3 376.2L556.8 377.5L553.8 377.6L553.7 375.0L551.7 374.3L552.3 370.9L548.1 371.3M797.7 516.5L800.6 517.3L804.1 517.2L808.0 518.6L807.9 516.3L810.3 515.8L811.4 520.4L815.4 518.5L815.4 520.6L817.4 520.9M819.4 521.9L823.9 522.8L827.5 521.7L831.1 519.7M838.6 517.5L838.8 520.3L840.8 518.0M843.0 516.3L846.1 513.3L847.6 510.9L847.8 515.4L850.1 515.3M668.1 596.0L664.6 596.2L661.4 596.7L658.6 596.6L655.3 597.7L651.5 599.4M638.9 610.0L634.6 611.3M622.9 608.7L622.9 613.0L621.6 609.9L619.6 607.3L617.1 604.5L615.1 603.0L611.4 602.9L608.9 602.6M609.6 596.4L606.6 596.2L607.6 589.6L607.2 585.1L604.2 585.1M899.2 646.6L897.4 645.4M893.3 643.8L891.2 643.1M888.3 641.1L885.3 640.5M876.8 639.6L876.3 641.7M870.0 638.5L867.0 644.8L864.9 645.1L862.9 644.7L863.8 640.3L861.4 637.7L860.0 641.2L858.0 639.8L854.7 637.8L856.0 631.0L854.2 629.6L850.7 627.0L847.5 625.2L843.6 624.6L840.8 623.7L839.1 626.8L837.0 627.7L834.6 629.2M615.7 699.0L617.7 699.1L617.7 701.4M617.7 698.7L621.9 698.5L624.8 698.5M629.4 701.6L627.7 707.7M630.9 710.9L632.8 712.7L633.4 710.2L636.3 709.9L639.2 709.8L641.2 710.2L643.7 709.8M645.9 709.7L649.8 709.8L652.2 709.5L656.6 708.9L655.3 712.9L655.8 710.9L659.3 709.6L663.5 710.2L668.0 710.3L671.9 711.1L674.6 711.0M678.3 711.0L682.0 710.1L684.3 709.0L687.1 709.2M703.5 283.6L704.9 288.6L709.2 289.6M711.8 290.8L715.8 290.8M719.5 291.8L723.3 293.4L727.3 293.7L729.5 294.6L731.6 295.7L735.2 298.5M738.1 299.6L740.8 301.9L742.6 303.6M745.6 305.0L748.0 305.8L749.5 307.2L752.4 309.3M682.4 439.0L679.1 438.6M674.9 438.9L670.5 437.4L667.9 437.0L668.7 431.7L664.8 431.3M662.1 430.6L662.7 424.0L660.5 423.3L658.1 422.1L655.6 427.5L653.2 427.1L649.6 427.5L646.6 427.0L642.8 427.6L638.9 426.3L635.5 425.0L631.3 424.6L628.2 423.9L624.5 421.6L625.0 417.7L622.9 417.1L621.7 423.5M749.2 659.2L746.6 658.9L743.8 659.1L741.3 658.4L738.1 658.7L738.7 664.1L734.5 662.3L732.4 661.3L729.3 661.5L729.5 657.3L726.9 657.2L723.6 656.9M831.0 509.0L828.3 508.6L824.7 507.1M822.6 506.0L819.2 505.1L820.2 511.6L815.8 510.2L813.1 510.5M811.1 510.8L807.1 510.9L805.1 511.5L805.3 515.6L803.7 511.1M799.8 513.2L797.0 515.0L794.4 515.9M562.7 396.7L560.2 396.4L560.4 393.5L556.4 393.8L552.8 394.6L550.1 395.4L546.9 396.8L544.0 397.0L541.5 398.4M541.8 400.8L543.2 406.6L539.3 407.9L535.3 409.7L532.5 412.3L528.1 413.2M523.7 590.1L523.7 586.3L524.8 591.8M530.5 589.2L533.0 589.2L535.9 589.6L538.1 588.7L542.4 589.1L545.1 589.8L544.3 586.9L544.1 580.8L547.9 582.7M554.3 585.9L556.8 587.8L560.4 588.6M817.6 635.0L813.5 633.3L809.0 633.4L806.5 639.9L802.5 639.1L800.0 638.1L801.7 634.8M801.9 627.9L799.3 625.5L797.5 624.2L795.4 622.8L792.7 621.6M789.7 621.0L786.3 620.9L783.7 619.7L781.0 619.0L778.4 618.6M775.4 619.4L775.4 616.9M763.3 609.5L760.0 609.8M757.0 605.6L758.5 599.5M821.8 408.4L818.2 409.2M810.1 415.4L810.4 421.9L807.9 423.3L805.7 429.5L802.7 430.6M799.1 430.8L795.0 432.1L794.8 436.6L791.1 435.6L788.5 436.2L784.8 437.8L784.7 444.7L781.1 444.5L778.0 443.9L778.2 441.1M774.4 442.2L770.9 443.7L767.6 446.2M766.0 450.9L763.5 450.7L760.2 451.9L758.0 453.8M548.1 414.7L545.7 414.6L543.8 415.5L541.3 417.6M539.1 420.0L539.9 425.0L538.5 418.2L537.0 422.2L537.4 424.6L536.8 422.4L535.1 424.5L531.6 426.4L529.7 427.2L528.2 428.6L524.0 429.4L520.9 430.2L518.2 431.2L514.3 430.9L512.0 431.4L508.9 431.9L506.5 431.2M502.5 430.9L499.6 430.0L495.3 428.4L491.1 429.0L487.4 429.0M536.9 638.4L535.2 634.4M538.7 633.7L542.2 633.8M548.6 632.6L552.2 632.9L552.0 626.7L554.2 627.9L556.7 629.7M558.5 630.5L560.9 630.1L564.6 629.3M569.0 628.6L570.9 627.2L572.6 625.8L574.3 623.1M575.7 620.7L575.9 615.7L575.2 608.8M582.2 606.1L585.6 605.6M878.0 462.1L880.7 462.7L883.3 462.4L882.1 456.1M885.0 456.2L887.1 455.5M891.6 452.7L893.7 452.8M896.3 453.1L900.4 452.1M902.5 450.3L904.4 447.8M454.8 450.2L457.1 450.4L459.6 450.2M461.5 444.8L464.6 445.5L467.5 445.8L470.0 445.9M478.1 446.1L477.9 449.8L481.6 451.0L485.1 450.6L489.0 448.8L490.2 444.2L493.8 442.1M495.9 441.4L496.3 436.2L496.0 438.6M499.9 437.8L501.7 436.6L501.9 441.8L504.8 440.3L509.1 440.4L512.9 440.3L514.1 436.9L517.6 438.7M522.1 438.9L524.4 438.0L522.4 443.7L525.6 440.6M847.1 641.0L849.5 640.5L847.7 635.0L849.8 635.9L853.0 636.2L857.2 637.4L860.4 639.1M859.9 633.6L863.2 636.6L866.0 639.3L868.6 640.6L871.5 642.7L872.1 647.0L875.4 648.4L877.6 648.1L880.0 647.4L883.8 645.6M546.5 524.0L549.7 522.4M553.8 521.9L557.7 522.4L560.1 522.3L562.4 523.2L561.6 520.1L559.0 514.1L561.6 515.1M565.1 515.9L569.2 515.1L572.3 513.6M575.0 518.9L576.7 517.4L580.1 516.0M584.4 515.5L587.4 514.7L590.4 514.5L594.1 514.0L597.3 513.2M598.9 512.0L602.4 510.8M661.3 579.6L665.3 579.4L667.9 579.2L671.9 580.2M674.9 580.9L675.0 585.7M678.8 585.8L679.5 580.9L683.6 580.5L686.4 579.3L686.6 583.1L688.0 581.4L691.0 578.4M819.9 463.4L822.0 463.1L824.0 463.8L827.0 463.7L829.2 464.1L832.0 463.5L835.8 463.1L839.0 463.3L842.7 463.6L846.6 462.4L845.4 457.4L843.8 453.3L847.6 453.0M851.3 454.0L853.6 454.3M857.3 454.8L859.3 454.2L861.7 453.7L864.0 453.4L868.2 451.6L871.3 451.9M814.6 536.6L817.3 537.5L815.7 541.9M817.7 544.3L819.7 547.9L820.5 550.8L823.4 545.2M826.0 548.9L825.1 553.1M828.9 555.5L832.7 556.3L836.2 555.4M461.9 344.7L464.5 344.7L468.3 343.0L467.0 337.1L469.4 335.3L471.9 332.1L474.0 330.0L475.5 327.7L476.5 324.6L476.9 321.5L476.9 319.0M477.8 315.1L481.3 312.6M695.2 530.7L691.9 530.6L688.2 529.9M686.1 524.0L683.9 521.2L682.8 519.4L681.5 516.0L683.1 510.7L679.0 509.5L678.9 505.9L680.8 502.0L678.4 499.9L676.6 496.7L675.7 494.1L674.5 491.3M787.5 311.3L787.6 315.8L784.8 315.6L782.3 316.5M780.0 318.3L776.7 319.5L772.6 321.3L769.1 321.6M764.9 320.3L762.6 319.6M762.7 315.9L759.1 316.7M754.8 316.9L752.1 318.1L749.5 319.4L745.0 319.0L742.3 318.9L738.8 318.0M734.5 318.6L731.7 318.6L727.8 317.6M461.2 578.5L458.1 579.2L457.2 582.9L452.8 582.0M449.3 580.9L449.8 585.3L446.4 585.9M443.3 587.8L442.9 582.2M440.3 585.5L437.6 588.1L436.8 592.6M715.3 625.5L715.5 629.9L715.9 635.1M719.3 635.2L722.9 634.8L722.8 630.9L725.6 631.0M728.8 630.6L732.0 631.6L733.7 632.7L733.5 636.4M735.8 638.7L738.7 640.0M739.2 644.8L740.8 646.0L742.1 651.0L744.5 652.1L747.3 652.1M755.0 655.6L756.0 661.8L757.9 664.2L760.4 665.0L762.9 666.7L762.4 661.2L766.7 660.3M768.9 658.8L772.9 657.4L773.5 660.7L775.6 658.9M924.1 457.4L926.5 457.2M928.5 458.1L927.2 462.1L929.4 462.4L932.2 461.7L934.6 460.1M937.7 459.6L936.1 464.4L938.7 463.7M938.9 460.4L941.1 457.9M939.9 460.7L940.3 467.2L942.2 465.0M946.4 455.5L947.0 452.9L950.6 450.9L953.0 448.3M954.5 446.8L956.4 445.4L959.7 442.4L961.5 439.4M687.8 366.8L688.5 362.3M690.8 363.0L694.9 364.4L698.8 365.6L698.5 359.1L702.1 360.5L705.8 362.7M706.3 357.9L708.9 351.8L713.2 352.7L715.6 352.9L718.6 352.9L722.5 354.1L726.8 354.8L730.5 354.4M733.6 353.4L735.5 352.7M742.5 353.1L745.6 353.0M861.3 396.3L861.1 392.8L862.2 389.8M862.6 387.5L862.8 383.8L862.9 380.3L861.8 376.9M666.1 288.2L659.4 287.6L658.5 283.6L663.1 285.4M666.5 285.6L664.6 282.5L664.5 280.3L664.9 277.7L666.2 274.8M757.7 560.6L756.5 564.1L755.6 568.5L750.5 566.9M749.6 569.9L749.1 573.9L748.6 577.5M833.7 596.8L832.3 593.3L832.6 590.7M615.6 297.6L615.6 300.0L615.1 303.4L614.3 305.8L614.7 308.1L616.5 312.3M770.5 414.6L775.9 415.0L775.5 412.2L779.7 412.9L774.6 412.1L774.5 408.0L775.0 403.8M776.2 400.2L778.4 396.7L783.2 396.4L789.9 397.2L792.7 398.0L792.8 394.0M757.9 468.7L757.5 464.6L756.8 462.6L756.2 459.8L755.9 456.1M909.9 579.7L908.8 577.8M908.5 573.5L908.6 568.9L908.1 565.1L908.0 563.0L911.0 562.5L910.6 559.8L910.6 556.6L911.2 554.4M911.2 551.4L909.2 547.2M777.0 474.6L776.2 470.2L776.9 467.7M776.5 464.0L781.8 463.7L782.2 460.1L782.1 456.5L781.9 453.1L780.9 450.7L780.8 446.5L780.3 442.8L775.8 443.9M626.9 482.6L628.2 486.5M629.0 489.2L630.5 490.8L633.5 493.3L634.3 495.9L635.5 499.2M636.2 501.6L640.5 501.3L639.7 504.5L639.7 506.7M536.9 388.9L537.6 385.1L538.9 382.1L540.3 380.4L541.6 378.9L542.9 376.3L545.0 376.2L545.2 372.5L544.2 369.6M636.3 522.2L636.1 525.0L631.5 524.8L631.6 529.0L632.2 531.1L633.3 534.5L634.3 538.3L634.1 541.9L632.8 544.6L631.1 548.3L630.6 551.0L633.2 550.6M703.7 492.6L710.0 494.8L710.6 498.4M711.4 501.9L710.5 505.2L708.4 509.0L708.0 513.2M708.0 516.4L709.6 520.3M819.2 357.5L820.7 353.8L823.8 350.7L820.7 350.7L823.3 347.5L823.7 344.4L823.4 342.2M428.5 443.4L430.7 439.4M471.8 420.5L472.1 423.4L471.1 427.5L464.5 427.6M463.1 431.1L467.5 430.8L473.9 429.8M916.8 437.9L918.4 441.3M920.5 443.3L923.3 444.9L925.3 448.1L926.3 451.6L927.7 455.2L928.3 457.8L928.1 461.6L928.2 465.1L928.6 468.3M754.4 368.2L754.1 371.5M760.2 371.9L760.6 376.2L760.9 379.2L761.0 382.4M756.6 382.4L750.9 382.0L748.6 381.6L747.3 383.8M745.0 389.4L747.7 388.9M517.5 449.3L514.7 448.4L515.1 451.8L512.7 450.9L508.1 449.3M506.9 453.6L507.2 456.0M576.6 447.5L575.8 449.4L580.6 449.6M584.9 451.5L591.2 451.5L589.7 453.3L588.1 455.8L581.8 456.1L588.5 456.7L588.5 460.7L583.3 459.9L582.1 463.9M718.4 465.8L718.6 462.5L718.4 458.8L717.3 455.7L716.0 454.0M473.3 287.7L472.7 285.2L472.1 283.2M465.1 281.0L462.5 281.0L460.8 277.8L460.3 273.8M458.4 269.9L455.3 266.9M458.3 266.9L456.6 265.3L454.7 263.3M502.9 326.5L502.5 323.2L501.2 319.1M499.3 316.6L504.1 316.4L505.4 312.0L505.9 309.5L504.7 305.2L504.9 302.4L506.2 299.5L505.9 296.3L506.0 293.0L506.3 290.1M537.9 481.6L531.7 480.9M530.6 484.7L529.6 487.1L527.0 487.4L526.0 491.3L525.1 495.3L523.2 499.4M623.2 651.4L623.3 655.6L622.4 660.1M620.4 664.1L620.4 666.5L621.2 670.5L620.8 673.3L620.5 675.8L620.6 679.7M622.2 683.7L623.0 686.8M488.6 335.4L490.3 332.6M483.3 332.3L486.6 333.1M480.1 331.9L479.8 329.8L480.5 326.4L480.5 323.8M560.9 412.5L560.1 409.0L560.5 406.4L560.6 402.0M429.5 680.8L429.8 678.1L428.8 674.1M427.0 671.9L429.2 671.4L422.4 672.1L422.3 668.5M421.9 665.6L421.1 663.3L421.6 659.5L421.9 656.0M519.9 655.6L519.8 658.6L520.7 663.0L520.6 665.3M519.4 669.5L517.3 672.6L514.7 675.9L513.6 680.1L513.9 684.0M606.2 285.3L605.9 287.5L605.5 289.7M610.0 289.3L609.2 291.8L608.6 294.9L608.7 297.8L602.8 299.6M846.8 562.6L846.2 558.9L845.2 554.8L844.7 551.5M843.8 547.4L844.4 545.3L844.1 542.1L843.2 538.7L849.5 538.8L843.7 539.3L837.9 539.9L838.6 536.4L840.7 533.1M713.4 347.8L713.7 351.2L715.0 355.6L715.9 357.7L718.2 360.8M683.4 498.6L683.3 495.2L682.0 492.4L682.2 490.3M801.9 676.8L795.8 678.4M795.7 674.5L795.5 671.6M795.4 666.4L794.9 663.3M878.7 305.0L879.1 307.7L879.3 311.1M879.1 313.4L880.1 316.9M881.1 319.4L882.6 321.4L885.9 324.2L887.6 326.0L885.4 325.9L887.4 326.3L886.9 328.8M659.4 483.9L664.1 485.0M658.2 482.0L662.9 483.9L664.3 481.2L661.1 480.0L656.1 479.4L655.6 476.1M662.5 476.7L662.6 474.4M642.9 416.4L642.9 420.5M641.6 424.1L646.7 423.9L645.6 426.3L649.2 427.4L647.1 431.2L646.9 433.3L647.1 436.5L647.5 438.8M738.0 578.3L739.3 575.3L741.8 572.1M743.6 567.9L744.3 563.8L744.1 560.1L744.6 556.8M744.6 553.8L744.1 550.2M677.8 362.7L678.6 360.6M681.1 354.2L681.3 352.1L682.9 348.7L685.6 345.1L686.7 342.6M805.8 288.0L800.5 287.6M796.7 287.6L794.6 283.6M541.2 549.4L540.2 552.1L537.6 555.3M537.2 558.2L537.6 561.9L542.1 562.5M611.7 566.5L612.1 563.3L613.6 560.3L616.3 557.6L618.1 555.3L618.9 553.0M616.4 554.0L618.1 549.9L620.7 546.4M517.5 373.4L517.3 370.8M518.1 367.7L519.4 365.3L522.0 362.0M527.2 362.2L530.4 359.3L532.0 358.0M537.2 357.7L539.3 354.9L541.2 351.6M590.7 377.0L591.1 380.5L592.8 384.1L593.5 387.2L593.8 389.5M450.1 388.1L449.1 391.2L444.0 390.2L443.3 394.5L444.1 397.0L444.1 400.8L444.9 403.4M810.8 604.9L810.0 603.0L809.3 601.0M809.6 598.7L803.3 597.8M796.5 596.4L795.8 593.5L795.5 589.6M464.6 690.0L465.4 692.5M464.1 699.0L468.9 699.3M462.6 699.5L455.9 701.0L456.7 703.1L457.2 706.0M417.3 294.2L413.0 293.6M413.8 297.3L415.3 299.7L410.8 299.0M442.6 579.4L442.3 575.4L443.9 571.8M444.0 567.9L442.6 564.5M565.3 335.9L565.7 338.4L566.2 341.0L566.1 343.4L565.5 347.6M821.2 488.1L817.3 488.0M869.0 671.1L869.4 675.5L870.1 678.2L871.5 680.4M873.3 682.6L876.4 685.3L879.3 688.3M881.3 691.0L883.3 694.5M610.3 481.5L610.6 477.5L611.6 474.7L611.5 470.5L610.8 466.8L609.6 464.5M606.5 461.7L604.6 460.6M909.8 292.8L908.8 294.7L907.2 296.9L904.3 299.5L902.4 302.6M677.9 386.2L679.5 388.9M681.5 391.7L682.3 395.1M682.2 398.9L682.7 400.9L684.3 403.6L685.2 406.9L685.2 409.4L684.3 412.4L684.3 414.5M513.2 520.6L508.3 519.4L510.2 516.6M506.0 515.5L507.2 513.9L508.4 511.9L509.9 510.3L510.6 508.4L512.0 506.6M627.9 595.1L628.5 592.4M627.3 585.9L626.8 583.2M623.7 554.5L624.8 558.6L621.5 558.1L622.9 562.1L626.0 562.6M732.6 307.1L733.1 304.6L732.2 301.3L730.3 298.7M723.8 293.4L729.1 293.0L726.3 291.1L723.8 289.3L721.2 287.3L716.9 287.7L714.0 285.9M811.7 621.1L811.8 624.0L811.9 626.3L812.6 630.0M814.1 633.7L815.5 636.7L820.5 636.0L820.7 639.6L816.9 639.9L818.7 642.8M916.1 574.8L915.8 577.3L914.3 580.2L913.6 583.3M913.7 587.3L912.9 590.1L911.6 591.9L910.4 594.2M434.7 554.7L434.7 558.7M434.4 561.3L433.7 565.6L434.9 569.0L436.9 572.7L433.5 573.5L439.6 571.2M810.5 393.8L810.4 389.3L804.2 387.8L803.4 385.2L800.6 384.8L799.6 381.9L806.0 384.4L806.0 381.8M720.4 660.3L722.3 664.4M723.7 671.6L725.0 674.1L727.8 677.0M731.1 679.4L733.3 681.8L735.0 683.6M852.3 572.6L852.5 576.9M855.9 582.8L856.7 585.6M858.6 588.5L853.3 588.9L856.3 588.5M826.6 388.4L824.9 392.2L823.7 395.5L828.6 395.4L827.1 398.2L824.1 400.8L822.9 403.1L816.3 403.2M499.2 314.5L498.6 312.0M497.6 309.5L503.3 311.0L500.1 311.2L501.5 308.9M501.9 304.4L501.4 301.1M499.9 297.7L504.6 297.5L507.4 298.0L504.1 295.8M505.7 557.9L505.0 554.3L504.1 552.5M503.0 548.4L501.2 545.1L501.0 542.8L501.1 540.6M552.5 585.1L549.5 586.5L548.5 590.4L546.2 590.6L544.7 592.8L550.4 592.5L550.9 594.6L551.7 597.7M554.1 597.0L555.7 599.7L557.3 602.1M503.4 613.5L503.6 609.7L502.2 606.3M498.3 606.5L497.6 603.6L497.3 600.5L496.9 596.7L496.3 594.6M709.6 436.3L710.1 433.0L711.3 428.8L712.0 426.7M711.4 422.5L710.8 420.0L715.5 419.7M819.2 694.2L816.6 694.7M818.4 696.9L820.1 698.2L822.1 699.5L824.4 702.6M575.6 584.1L575.2 586.8L575.6 589.8L576.9 593.8L577.5 597.5L578.4 599.4L579.9 601.3L575.3 602.6L577.0 604.1L579.2 607.2L581.3 609.0L582.2 612.0M592.0 496.6L592.8 498.5M590.6 499.6L591.4 501.6L591.2 503.8L593.8 503.5L595.9 507.1M741.0 350.0L746.9 347.7L747.0 350.4M747.9 354.7L750.1 357.5L751.1 361.8L751.2 364.9L751.9 368.4M488.0 609.2L486.8 612.5M484.2 615.4L482.7 618.3M481.3 626.7L480.5 629.7L480.8 632.4L480.0 636.2M817.3 320.5L817.8 317.9L820.2 314.7L823.1 311.8L827.8 313.1L829.1 311.2L830.9 309.1M826.4 308.4L827.8 305.6L828.5 302.0M704.3 536.8L709.8 537.8L710.2 534.5M710.3 532.2L710.5 528.2L711.7 525.1L713.7 521.1M715.5 518.3L717.0 515.6L717.8 512.8M718.6 510.9L718.8 508.2L720.7 504.9M874.0 510.5L877.6 510.8L878.3 508.3M878.3 504.6L876.9 501.1L882.6 500.9L881.8 498.8L881.6 494.6M881.9 491.7L888.9 491.8M918.7 680.3L920.7 683.9L920.9 688.2L922.0 692.6L922.0 695.0M711.4 591.0L711.0 587.4L712.1 584.6L712.2 581.6L713.9 577.7L718.3 578.1L720.3 574.6L723.1 572.2L725.2 568.3M722.4 569.1L720.2 569.2L718.5 565.4M881.8 649.0L881.2 651.8M887.8 651.7L884.8 654.7L882.0 656.7L888.8 657.0L882.8 656.0L881.6 659.6L881.4 661.9L880.7 666.2M811.7 348.3L812.1 346.2L816.3 346.6L818.7 347.1L820.3 345.3M823.0 342.8L817.3 341.0M808.7 558.0L807.2 554.3M804.9 551.5L804.5 548.4M809.3 546.8L810.6 543.9L815.5 543.7M682.6 561.3L683.6 564.8M680.9 563.5L675.5 563.2L675.7 565.9L674.1 570.0L673.7 573.0L674.9 577.0M707.2 310.4L707.5 313.5L703.4 313.5L702.8 316.0M703.6 318.9L704.5 322.0L705.8 324.1L706.5 327.2M886.9 613.2L885.2 609.1M882.5 603.2L880.3 601.2L877.2 599.1L874.4 596.8L878.3 596.5L875.6 593.4L875.2 591.4L875.6 588.5L875.8 585.1L878.6 583.9M826.3 497.3L827.2 500.6L826.5 503.9L825.8 507.2L824.4 510.4M822.2 517.7L821.0 519.3L823.3 518.8M608.6 631.6L609.3 633.7L610.5 637.9L611.9 640.5L612.4 642.7L616.1 642.3M616.3 645.6L615.3 648.8L613.0 652.0M857.0 365.5L861.8 366.4L862.0 363.5L861.5 361.3L861.5 359.1L862.5 354.8L858.7 354.1L861.2 351.3L866.1 352.4M897.8 393.8L895.5 396.9L893.9 400.6L893.3 404.6M893.5 407.7L896.6 407.6L894.0 410.6L893.4 413.7L893.5 418.0M540.7 482.6L541.3 479.3L541.6 477.0M548.5 477.1L549.1 474.7L550.1 470.6M863.9 475.3L864.1 478.4M761.5 520.7L756.1 520.0L755.4 521.9L753.8 524.9M497.9 679.0L497.1 675.6M500.0 675.8L500.2 673.3L500.7 670.8L502.2 668.0L504.4 665.6L506.1 664.0M702.1 642.6L697.1 641.6M697.8 637.2L698.8 634.8M773.8 447.8L772.1 443.6L770.5 441.4L769.1 438.0L769.4 435.5M775.3 435.1L775.7 431.4L776.0 429.2L779.5 427.8L779.4 423.3M561.6 639.3L560.3 636.9M558.1 637.1L556.5 634.5L555.2 632.7L561.6 631.8L559.2 629.1M926.2 480.4L920.0 480.4L919.7 476.3M918.0 472.5L917.2 470.2L917.3 465.8L914.9 466.4L920.0 466.0M921.1 464.5L918.9 464.4L916.5 462.2M757.8 627.9L757.4 623.8L756.0 620.0M756.4 616.3L756.2 614.0L756.8 611.5L758.6 608.1L759.4 605.8M760.1 603.0L762.6 603.5M762.6 598.9L763.4 595.1M776.5 641.2L776.4 643.5M776.7 647.1L776.0 649.9M663.4 700.4L663.6 704.3L664.4 706.6L666.6 710.5M661.8 709.3L662.1 711.6M662.3 715.7L663.9 719.1L664.3 722.5M866.4 409.0L866.5 412.6L861.4 410.6L861.5 413.0L861.3 416.5L862.1 420.1L868.4 422.5L867.8 425.0L861.0 424.9L860.5 427.0L858.9 430.0L863.2 430.3M588.4 664.2L588.1 661.1M588.1 658.0L590.7 658.6L590.7 655.6M584.9 656.0L585.5 653.2M607.8 358.5L608.1 354.4M611.8 354.3L612.9 351.4L614.3 349.4L608.3 351.4L613.9 348.6L614.7 344.3L613.9 341.2M751.6 681.5L750.2 685.3L746.4 685.5L742.3 686.3L743.8 690.5L746.5 690.1L746.1 694.6L745.2 698.1M741.9 698.0L740.6 700.3L738.6 704.2M566.3 685.3L564.9 689.0L568.8 689.3L569.0 691.9M427.4 518.7L427.0 514.9M424.6 508.9L422.3 505.1M817.4 425.0L815.5 428.1L813.4 431.8M811.1 434.9L814.9 435.0L808.4 432.4L805.2 435.0L811.8 437.4M787.7 502.2L786.8 505.7L787.2 509.8M785.5 513.4L783.9 515.6L782.0 517.4M781.1 519.3L780.4 521.6M778.4 525.3L777.6 527.7M493.6 524.3L497.8 522.7L497.4 526.5L496.2 530.2L494.6 532.7M494.3 537.1L494.1 539.6M467.0 567.2L468.0 569.8L468.3 572.2M469.5 575.4L470.1 577.5M471.4 580.4L471.8 584.5L472.2 587.2L471.8 591.2M485.6 388.9L485.6 386.7L486.1 384.7L487.8 382.4L482.6 382.7M922.3 340.0L928.6 338.8M931.1 338.7L937.4 339.3L940.2 342.7M665.6 419.6L665.8 416.9M668.9 417.7L675.1 419.5L673.1 417.0M628.2 384.9L625.1 388.3L622.5 390.9L619.6 393.7L617.3 396.2M614.4 399.5L613.6 401.4L616.4 401.6L613.5 404.7M909.9 656.1L910.5 652.3L910.8 648.8M911.4 645.4L912.0 641.9M653.0 607.9L652.8 605.6L646.9 606.7M646.8 603.5L645.6 600.2L645.4 597.2M488.4 470.9L489.3 473.4M489.2 475.5L492.7 474.1M493.6 476.7L493.3 480.1M493.5 484.4L490.2 484.8M445.8 452.7L445.2 449.8L444.9 447.7L443.0 443.5M440.4 443.2L440.4 438.8L439.4 436.7M432.9 435.9L432.9 433.8M433.3 430.3L433.7 426.7L433.0 424.8M630.4 586.5L632.5 587.6L634.5 589.3L637.3 591.9L639.9 595.2L642.1 598.9L642.6 601.2L643.4 605.2M706.2 608.9L706.8 610.9L707.1 615.4L708.9 617.5L711.7 612.4L713.9 613.4M576.5 466.1L571.4 469.4L567.2 467.7L563.2 466.1L559.7 470.1L556.0 469.1M550.9 466.4L548.4 465.6M545.7 465.2L542.9 465.1L540.9 464.1M424.5 323.1L422.1 321.8M418.9 319.8L415.3 317.7L412.6 317.5L410.2 316.9L406.0 316.0L401.6 320.9L398.9 318.2L397.5 315.4M394.9 317.8L393.2 316.5M767.5 390.1L770.2 387.6L772.9 385.2M774.8 384.4L776.8 383.7L780.5 383.3L784.0 382.9L787.3 383.5L791.5 382.0M789.5 379.5L792.7 377.9L795.6 377.2M510.7 478.1L513.6 481.6L515.4 484.7M517.4 487.8L519.4 489.5L521.9 490.4L524.7 490.4L528.7 492.6L530.8 494.6L534.3 497.6M793.8 626.0L797.6 626.3L800.4 625.2L803.4 631.5L805.7 629.7L808.0 628.8M584.4 562.2L588.3 564.5L590.8 564.7M593.1 564.5L595.5 564.7M599.1 565.0L595.0 569.4L597.5 571.3M600.9 572.0L603.4 574.4M600.3 579.3L601.5 582.0M880.2 292.7L877.8 293.1L879.8 298.0L877.7 298.1L879.1 300.3L875.2 301.5L871.5 302.0L869.3 303.6L870.5 306.7L867.6 307.7M711.0 551.3L706.8 549.7M703.5 553.0L700.0 550.8M696.7 549.8L692.5 550.0L688.7 548.4L685.1 548.0M874.1 394.5L871.3 394.4L874.4 390.6L871.5 389.3L872.6 387.1M868.5 386.4L870.9 382.0L869.2 380.5M863.7 499.7L865.8 494.6L866.9 497.0L865.0 501.0L867.8 502.9L865.2 505.4L869.6 505.7L873.7 500.2L876.1 502.3M878.5 502.9L881.7 505.3L884.0 505.8M460.4 476.7L458.6 479.0L458.0 481.4M455.9 488.4L455.7 491.5L454.7 494.0L452.1 495.9L449.0 497.7L446.0 500.7L449.3 505.7L446.7 508.6L444.5 510.1M900.4 630.4L898.5 626.7L896.7 625.3L894.4 622.7L892.3 622.1M889.4 621.5L885.7 622.2M880.0 622.8L875.8 621.0M873.2 619.7L870.4 616.5M488.9 665.2L491.2 668.1L493.0 670.3L494.3 673.9L496.1 675.4M845.9 284.4L847.9 287.0L845.2 287.5L842.7 287.7L840.2 289.2M821.3 454.2L818.9 456.9L818.0 460.2L817.2 464.3L814.6 467.1L816.3 469.1L813.5 470.8L809.6 471.7L807.6 473.7M806.0 477.9L804.2 480.5M801.7 484.0L797.7 486.2L794.0 487.2M740.0 285.8L741.4 287.6L742.4 289.8M745.3 292.8L747.0 295.0L748.1 297.9M720.5 658.7L719.1 657.2L722.4 653.3L719.9 658.0L718.5 661.2L718.1 658.8M516.4 436.8L513.7 438.9L516.7 440.8L513.1 445.3L514.2 447.1M515.0 449.7L515.1 452.0L511.6 456.1L513.8 451.9L517.4 448.9M522.5 449.4L523.6 451.8M501.5 386.5L503.3 383.5L505.2 384.0M506.4 380.4L509.6 379.9L512.1 380.3L515.9 382.6L519.9 384.6M523.6 388.9L525.1 390.3M528.7 391.8L532.8 392.0M451.2 511.3L453.5 508.7M458.1 504.7L460.3 504.0L463.7 502.2M462.4 500.1L465.4 500.7L469.1 501.2M432.5 390.9L429.8 388.5L432.1 386.1L430.3 385.1L428.2 382.4L427.7 380.3M871.6 559.4L869.5 562.1M864.3 567.2L861.3 570.4L857.9 572.2L854.5 573.0L851.1 573.9L847.2 573.8M612.1 519.7L609.7 522.1M608.6 524.3L607.9 527.4L606.4 529.6L603.8 532.4L602.0 533.2L599.4 535.3M698.9 343.7L697.2 346.1L694.5 350.8L692.7 347.7L689.9 344.4L688.3 342.3L685.3 340.2L682.8 338.3L680.0 335.8L678.5 333.9L676.2 337.4L672.6 335.5L669.5 334.0M769.9 457.2L772.0 459.1M775.4 460.7L779.0 461.2L781.1 459.7M778.1 464.0L780.2 465.3M782.0 466.7L780.4 468.2L781.0 471.4M574.6 317.2L572.2 316.1L570.4 314.2L569.3 311.6L567.0 309.7M565.8 308.1L562.6 304.9M561.6 302.3L559.9 298.8M559.2 295.9L559.4 292.9L556.3 294.7L559.7 290.5L557.8 287.6M817.0 667.9L814.8 666.5L817.1 662.7L813.5 661.7M809.6 660.1L810.9 658.3L807.7 655.3L804.5 652.8L802.5 651.8L801.2 653.7M797.3 654.1L801.0 649.7L797.6 649.7M575.2 684.5L577.4 685.0L580.0 687.0L582.5 687.5L586.9 687.3L589.7 688.3M592.2 690.8L594.8 691.8L595.8 688.4L596.6 686.6M827.5 461.6L825.3 459.6M822.6 458.2L820.3 456.1L816.7 454.7L820.0 450.8M816.6 450.6L813.3 448.7L810.6 445.6L807.9 443.6M803.5 438.6L802.7 436.1M639.3 338.4L636.5 335.3L634.3 334.0L631.6 332.2M628.0 328.1L626.2 325.1L624.2 323.7L620.2 322.0L618.8 323.9L616.9 325.4L613.3 323.8M611.9 322.1L607.5 325.0L606.3 322.7M682.8 324.3L685.7 318.2M682.2 317.1L679.2 314.4L677.4 310.9L675.3 308.6M668.5 304.1L666.7 301.2M663.6 298.4L660.7 297.3L656.9 297.2L653.7 295.2M922.6 591.3L925.8 588.5L929.8 587.0L933.5 586.5L936.2 586.3M939.3 592.2L941.8 595.9M945.9 595.8L949.6 596.3L953.6 596.5L957.6 594.3M706.2 428.6L708.8 426.4L712.4 424.0L713.6 422.3L715.9 425.2L711.8 420.6L709.5 415.7L707.8 412.6L710.5 412.0M713.1 410.5L716.5 408.8M433.0 368.3L431.5 370.8L434.8 372.0M433.3 373.4L435.2 375.6L437.1 377.3M435.2 380.2L436.9 381.7M438.8 384.6L441.8 387.1M443.2 389.2L444.7 392.4L445.5 395.4M475.7 502.7L479.5 501.0L481.9 500.9M484.4 499.5L486.9 496.0M532.3 520.1L531.0 516.1L533.9 514.9M538.5 513.4L541.1 512.2L544.2 509.5M551.0 471.4L554.0 466.9L555.7 468.2L559.7 469.9L563.8 471.7L567.0 473.0M670.5 286.8L673.2 283.6M676.4 277.3L678.0 275.1L679.3 271.5L679.8 267.1L681.1 265.4M682.8 264.0L685.0 260.1L687.5 256.4M468.7 330.8L466.7 327.0L468.8 326.5L472.3 325.3L475.1 323.5L476.8 321.8L479.7 320.4L483.0 319.7L486.3 319.0M683.8 499.2L679.6 500.7L675.9 503.0L673.9 506.3L673.2 508.7L671.6 510.3L669.3 512.6L667.4 515.7M667.5 611.0L663.5 612.7L659.8 613.5M656.5 614.3L654.1 614.5M452.0 609.9L454.8 612.8L456.0 609.9L454.5 613.2L452.5 615.7L454.6 617.3L458.6 618.7L461.8 621.6L463.2 619.8M749.8 697.0L751.6 695.5L753.5 693.5L756.6 692.1L759.2 691.7L761.3 691.0L762.6 689.5L760.3 687.9L757.4 683.4M759.6 681.7L762.5 680.0L760.2 678.2L754.8 674.7L756.2 677.0M896.9 359.5L896.0 361.9L894.7 363.9M892.0 366.5L893.7 371.2L891.3 372.5L887.3 374.7L884.1 375.3M880.9 377.9L883.5 384.3M852.4 664.3L850.1 659.2L851.7 657.5M853.6 656.9L856.1 660.6L859.5 658.7L862.7 655.7M866.7 654.0L869.5 653.3L872.2 650.7L873.8 647.6L877.2 645.4L879.9 641.7M530.5 601.6L527.5 599.8L525.7 597.9M529.0 593.0L527.2 590.5M873.8 608.4L872.0 606.5M869.3 603.0L864.7 608.0L861.5 605.8M861.1 599.9L857.6 599.8L855.5 599.8M691.4 465.8L688.3 467.1L684.6 468.4L686.6 473.3L682.1 474.5L678.6 476.9L676.6 473.0L673.9 473.8M671.1 476.2L668.2 479.5M482.3 549.1L479.5 550.6M476.9 552.1L474.4 552.5M470.2 553.1L467.8 554.7L466.1 556.7L464.8 559.1L463.0 562.0L460.5 563.3L457.7 565.9L453.8 567.3L450.4 562.9M448.1 560.9L449.8 564.2M803.6 301.1L800.6 302.7L797.8 303.5L799.6 307.8L797.7 309.9L795.5 312.1L792.7 313.3M783.6 318.5L786.4 322.4M885.3 678.1L888.0 680.0L889.7 683.1M891.4 687.2L895.0 689.6L892.2 694.2M892.9 696.3L889.1 700.6M890.9 708.0L894.1 704.8L898.2 706.6L901.2 710.1M766.6 514.5L769.6 516.6L771.5 519.4M782.0 514.7L783.0 512.1M789.1 403.9L791.6 405.1L795.1 405.9L797.9 405.9L802.0 407.8M804.7 407.7L802.2 412.1L805.0 415.0M805.6 575.9L808.2 577.7L810.2 578.5L814.3 579.7L816.0 576.0L820.4 576.9L823.4 577.0M827.0 577.1L831.3 578.0L833.6 579.7M422.0 555.4L425.3 553.1L426.8 550.5L429.8 548.3L431.6 551.8L435.5 549.8L439.6 548.4L443.5 546.9M816.8 542.5L817.6 545.1L820.3 547.7L817.0 553.5M605.5 389.6L607.1 388.1L608.4 389.8L610.5 391.8L613.4 394.0L615.5 394.5M619.0 396.4L621.2 397.5L626.3 393.9L629.1 394.7M631.6 395.5L633.6 395.7M640.5 397.7L642.3 399.6M445.7 677.7L444.0 675.6L445.9 673.9L448.6 672.5L444.0 667.6L445.9 666.4L448.1 668.8L449.7 665.1L450.1 663.0M845.9 389.1L848.9 387.9L852.8 387.4L855.1 387.5L857.5 386.3M854.8 382.4L853.1 380.0L855.5 378.5M774.1 598.8L772.7 596.3L770.2 592.8L767.3 591.3M765.0 590.3L761.1 588.1M587.1 350.7L585.6 353.1L582.5 352.6L579.7 350.6M576.4 347.6L578.3 345.3M572.1 346.9L568.2 345.7L563.8 346.1M659.3 674.4L657.5 672.0L656.9 669.3L655.3 667.3L654.4 664.0L653.3 661.6M658.5 463.1L657.9 460.6M655.6 462.3L652.1 463.9L648.9 464.8L644.9 465.3L646.0 468.8L644.3 464.7L647.9 470.5M528.0 433.6L526.6 435.3L525.1 438.4M518.3 446.5L515.6 448.6M541.4 680.5L543.4 687.2L539.4 688.2M536.1 690.3L533.4 693.6L532.1 697.4M532.8 700.2L529.8 703.5L527.1 704.8M568.4 303.8L566.6 304.7L564.4 305.1L562.2 302.7M559.7 305.9L556.0 308.5L554.7 310.1M551.1 548.2L553.0 549.4M554.0 547.0L557.0 549.5L559.8 550.4L563.9 550.7M827.3 614.8 L826.6 607.8 L834.9 606.9 L835.6 614.0M808.9 292.7 L809.9 295.7 L802.2 298.2 L801.3 295.2M665.1 569.5 L664.7 575.7 L655.2 575.1M730.8 620.2 L724.0 621.3 L723.3 617.0M747.2 663.9 L742.8 663.7 L743.0 660.4 L747.4 660.7M439.8 539.7 L430.4 540.3 L430.2 536.5 L439.6 535.9 L439.8 539.7M571.3 340.5 L578.1 338.7 L579.4 343.8 L572.6 345.6M604.2 357.3 L610.8 356.7 L611.4 364.0 L604.8 364.6 L604.2 357.3M659.3 345.2 L666.0 344.8 L666.2 348.2 L659.5 348.6M671.8 651.8 L679.3 652.5 L678.8 658.0M441.4 580.1 L439.5 586.8 L435.6 585.6 L437.5 579.0 L441.4 580.1M583.3 539.0 L583.5 544.5 L575.5 544.8 L575.2 539.4M719.6 453.6 L718.6 445.7 L722.9 445.1 L723.9 453.1M695.3 561.6 L696.8 556.6 L702.4 558.4M820.6 575.3 L821.1 570.2 L830.8 571.1 L830.4 576.2M819.1 312.6 L821.0 319.6 L815.2 321.1 L813.3 314.2 L819.1 312.6M612.0 381.3 L610.8 378.0 L619.6 375.1 L620.8 378.4 L612.0 381.3M481.7 518.0 L476.5 516.9 L477.7 511.3 L482.9 512.4 L481.7 518.0M631.1 339.3 L635.0 339.0 L635.5 346.5 L631.6 346.7 L631.1 339.3M510.7 557.3 L511.9 564.2 L504.0 565.7 L502.7 558.7 L510.7 557.3M678.9 482.1 L678.6 488.1 L673.7 487.9M455.9 379.2 L455.4 373.5 L465.1 372.6M679.6 686.0 L670.6 686.3 L670.3 679.4 L679.4 679.1 L679.6 686.0M665.1 619.4 L671.6 618.4 L672.5 624.5 L666.1 625.5 L665.1 619.4M425.8 449.9 L416.7 448.5 L417.8 441.0 L426.9 442.4 L425.8 449.9M449.2 519.8 L452.3 518.9 L453.7 524.1 L450.6 524.9M454.0 401.3 L454.0 408.7 L448.2 408.7 L448.1 401.3 L454.0 401.3M713.2 529.2 L705.2 526.6 L707.1 520.7 L715.1 523.3 L713.2 529.2M901.9 591.2 L901.3 595.9 L893.9 594.9 L894.5 590.2M772.9 671.0 L771.7 675.9 L766.1 674.6M846.8 409.1 L855.1 411.9 L853.0 418.2 L844.6 415.4M610.0 662.6 L606.9 662.0 L608.5 654.1M601.3 564.8 L592.2 565.0 L592.1 559.6 L601.2 559.5M911.5 494.6 L916.5 492.8 L918.7 498.9 L913.7 500.7 L911.5 494.6M750.0 604.7 L749.6 612.1 L740.5 611.6 L740.8 604.2 L750.0 604.7M534.7 537.9 L537.1 530.8 L544.1 533.2M700.7 577.9 L695.9 579.1 L694.1 571.7 L698.9 570.6 L700.7 577.9M914.4 423.1 L907.2 425.4 L905.1 418.9 L912.3 416.6M428.7 438.5 L437.3 437.0 L437.9 440.4 L429.2 441.8M748.8 302.8 L751.0 296.5 L755.0 297.9 L752.8 304.2 L748.8 302.8M558.3 686.6 L565.5 684.1 L566.9 688.1 L559.7 690.6 L558.3 686.6M454.8 608.5 L455.9 612.2 L449.4 614.1M556.9 405.4 L558.5 400.7 L567.4 403.8M542.7 325.2 L538.0 325.6 L537.5 320.8 L542.2 320.3M723.2 503.5 L720.1 502.6 L722.0 496.0 L725.0 496.9M561.5 640.4 L563.2 635.2 L567.6 636.7 L565.8 641.9M729.0 474.7 L727.9 468.6 L735.5 467.3 L736.5 473.3 L729.0 474.7M673.6 378.9 L667.2 380.8 L666.1 376.9M888.5 534.6 L888.6 539.9 L882.7 540.1 L882.6 534.8 L888.5 534.6M470.3 420.1 L465.2 420.1 L465.2 416.6 L470.3 416.6M777.7 447.5 L776.9 450.5 L771.1 449.0 L771.9 446.0M642.4 487.5 L643.3 491.2 L636.3 493.0 L635.3 489.3 L642.4 487.5M581.8 385.0 L577.2 383.6 L578.7 378.7M796.3 659.7 L797.1 652.6 L804.7 653.5 L803.9 660.5 L796.3 659.7M566.2 667.1 L574.1 665.9 L575.2 673.0 L567.3 674.2 L566.2 667.1M897.5 553.8 L893.9 554.0 L893.5 547.7M926.5 650.8 L927.2 645.6 L931.0 646.1 L930.3 651.3 L926.5 650.8M581.6 668.4 L572.9 669.4 L572.0 662.2 L580.7 661.1M887.3 296.0 L885.9 292.2 L891.3 290.3M486.3 328.2 L492.0 329.9 L490.8 334.0 L485.1 332.2M707.8 587.3 L699.4 585.7 L700.4 580.0M422.7 656.7 L422.1 653.0 L429.8 651.8 L430.4 655.5 L422.7 656.7M457.8 319.0 L456.5 324.1 L453.0 323.2 L454.4 318.1M523.3 616.8 L533.0 616.9 L532.9 622.6 L523.2 622.4 L523.3 616.8M722.7 351.2 L721.8 348.3 L725.0 347.4 L725.8 350.3M670.5 501.1 L676.9 501.8 L676.3 508.2 L669.9 507.5M426.8 488.1 L434.2 487.8 L434.3 490.9 L426.9 491.2M796.0 320.2 L790.7 320.2 L790.7 316.6M669.8 449.3 L669.9 456.5 L662.6 456.6 L662.5 449.4 L669.8 449.3M771.8 616.7 L775.5 616.6 L775.6 620.8 L771.9 620.9M627.1 462.5 L626.7 469.1 L617.5 468.5M681.8 532.5 L675.2 533.0 L674.8 528.9 L681.4 528.4 L681.8 532.5M896.7 489.1 L896.4 494.2 L888.5 493.7 L888.8 488.6M855.7 660.4 L848.8 658.5 L850.0 654.3M912.5 680.5 L903.1 681.1 L902.8 676.8 L912.2 676.1M470.2 680.3 L471.6 686.9 L465.5 688.3 L464.1 681.7M889.9 377.7 L891.3 385.0 L881.8 386.8 L880.4 379.5 L889.9 377.7M629.5 503.9 L630.4 500.3 L639.1 502.6M476.8 490.4 L475.5 486.5 L484.7 483.5 L486.0 487.5 L476.8 490.4M627.6 367.9 L630.9 368.2 L630.6 371.3M691.6 406.0 L700.5 408.0 L699.8 411.2M491.5 684.8 L492.3 692.4 L483.2 693.4M842.8 687.7 L843.0 684.5 L847.0 684.7 L846.8 687.9M861.4 561.4 L860.3 567.0 L855.1 566.0 L856.2 560.4 L861.4 561.4M767.5 424.5 L759.3 425.8 L758.4 420.5M564.8 371.7 L559.4 370.4 L560.7 365.1M737.9 553.5 L743.0 553.4 L743.1 557.3 L738.0 557.4 L737.9 553.5M869.0 631.7 L865.6 631.1 L866.9 624.4 L870.3 625.0 L869.0 631.7M463.6 555.0 L463.9 558.1 L458.3 558.6M500.3 477.6 L499.6 470.7 L506.7 469.9 L507.4 476.9 L500.3 477.6M569.0 597.7 L570.3 591.1 L577.8 592.6 L576.6 599.1M769.7 570.7 L769.1 564.3 L774.0 563.8 L774.6 570.2 L769.7 570.7M916.8 671.4 L909.8 671.9 L909.3 665.3 L916.3 664.8 L916.8 671.4M477.6 310.7 L472.0 309.9 L472.6 305.2 L478.3 306.0 L477.6 310.7M665.3 284.6 L674.2 286.3 L673.5 290.1 L664.6 288.4 L665.3 284.6M444.3 447.7 L443.9 444.4 L448.8 443.8 L449.2 447.1M831.1 469.8 L831.1 475.4 L821.6 475.5 L821.6 469.8M578.5 636.5 L586.6 634.6 L587.8 639.5 L579.7 641.5M577.0 333.2 L576.3 327.6 L581.3 326.9 L582.1 332.6 L577.0 333.2M703.6 432.9 L704.3 426.6 L707.8 427.0 L707.1 433.3 L703.6 432.9M456.6 350.7 L456.8 357.4 L451.2 357.6 L451.0 350.9M885.2 297.0 L877.7 296.4 L878.0 293.0 L885.5 293.6M891.0 668.1 L897.3 670.0 L896.0 674.3 L889.7 672.4M858.8 434.5 L858.5 429.1 L867.3 428.6 L867.6 434.1 L858.8 434.5M476.9 537.3 L477.9 540.5 L471.3 542.7 L470.3 539.6 L476.9 537.3M619.4 543.1 L617.3 535.7 L625.0 533.5 L627.1 541.0M624.0 666.4 L623.4 661.2 L628.9 660.5 L629.6 665.7M648.6 638.8 L649.2 644.2 L644.5 644.8 L643.9 639.4 L648.6 638.8M798.8 341.3 L800.1 345.5 L793.4 347.7 L792.1 343.4M471.3 392.0 L469.4 386.8 L475.0 384.8 L476.8 390.0 L471.3 392.0M843.1 433.3 L842.9 438.4 L839.8 438.3M597.3 296.2 L591.7 297.5 L590.2 290.8 L595.8 289.5 L597.3 296.2M730.0 511.0 L728.6 515.5 L725.4 514.5 L726.7 510.0 L730.0 511.0M537.8 486.4 L547.2 485.3 L547.7 490.0 L538.4 491.1 L537.8 486.4M928.3 518.8 L935.8 519.1 L935.4 526.3M626.9 650.4 L626.1 655.0 L618.6 653.8M691.7 638.4 L682.6 638.4 L682.6 631.6M422.5 341.3 L422.4 345.7 L418.7 345.6M560.0 484.4 L561.3 478.6 L568.6 480.2 L567.3 486.0 L560.0 484.4M417.0 396.4 L416.2 392.8 L425.2 390.6M598.1 419.1 L603.4 419.8 L602.5 426.7 L597.2 426.0M808.2 530.3 L815.2 529.5 L816.0 535.9M929.9 289.8 L935.5 288.3 L937.5 295.9M902.2 315.9 L911.3 313.4 L912.6 318.0M749.3 368.7 L756.5 368.4 L756.7 375.9 L749.5 376.1 L749.3 368.7M787.8 441.0 L790.2 434.0 L794.0 435.3 L791.6 442.3M790.6 504.5 L786.7 503.3 L787.9 499.6M611.2 585.9 L618.1 586.4 L617.9 589.4 L611.0 588.9 L611.2 585.9M749.3 587.9 L750.2 590.9 L746.7 591.9 L745.9 588.9M538.7 458.0 L545.4 460.0 L544.4 463.6M831.6 531.2 L832.3 534.6 L828.3 535.5 L827.6 532.1 L831.6 531.2M688.5 300.4 L683.4 299.6 L684.1 295.6 L689.2 296.5M683.3 363.6 L682.2 358.2 L690.8 356.4M466.1 503.6 L464.5 509.8 L455.5 507.4 L457.1 501.2 L466.1 503.6M761.5 319.1 L770.0 316.3 L771.1 319.6 L762.6 322.4M758.1 576.2 L757.2 573.0 L761.3 571.8M795.9 569.3 L797.2 574.2 L790.1 576.0 L788.9 571.2M795.6 385.9 L794.4 390.6 L788.7 389.0 L790.0 384.3M661.1 628.4 L667.5 626.2 L669.4 631.9 L663.0 634.1 L661.1 628.4M875.6 452.6 L885.1 454.0 L884.3 459.7 L874.8 458.3 L875.6 452.6M473.3 603.4 L479.7 604.0 L479.0 611.1 L472.7 610.5M437.5 692.2 L437.6 688.0 L447.0 688.3 L446.9 692.5 L437.5 692.2M493.0 536.9 L494.6 529.3 L498.0 530.0 L496.4 537.6M682.4 432.3 L689.0 433.1 L688.4 437.8M873.4 351.8 L872.8 344.9 L881.9 344.0 L882.5 350.9M615.7 613.8 L616.0 616.9 L609.6 617.6 L609.3 614.4 L615.7 613.8M920.1 485.7 L928.1 484.5 L929.1 491.4 L921.1 492.6 L920.1 485.7M857.1 638.4 L855.6 645.9 L846.2 644.1 L847.7 636.6M858.9 676.4 L858.6 681.3 L855.4 681.1 L855.7 676.2M679.0 391.8 L678.5 395.4 L671.3 394.4M861.7 506.7 L868.7 508.4 L867.5 513.3M643.5 325.6 L637.7 326.3 L636.9 320.0M473.1 553.0 L472.6 545.5 L482.4 544.8 L483.0 552.3 L473.1 553.0M487.5 352.8 L490.6 353.0 L490.2 358.1 L487.2 357.9M642.8 610.1 L650.1 607.5 L651.9 612.5 L644.6 615.1M662.1 325.0 L660.9 328.4 L654.7 326.2 L655.9 322.8M851.4 583.7 L844.9 583.8 L844.8 580.5 L851.4 580.3 L851.4 583.7M835.5 474.6 L836.2 471.4 L839.6 472.1M548.6 492.3 L549.7 496.7 L541.1 498.7 L540.1 494.3 L548.6 492.3M588.8 514.4 L590.0 511.0 L594.9 512.8M527.7 340.1 L523.2 339.2 L523.8 336.1 L528.3 337.0 L527.7 340.1M513.1 299.2 L518.7 300.5 L517.3 306.6M861.6 368.8 L866.2 369.4 L865.2 377.0 L860.6 376.4 L861.6 368.8M696.1 615.1 L686.4 614.9 L686.5 608.0M500.2 511.7 L503.2 512.3 L501.8 518.6M712.4 374.3 L707.3 375.5 L705.6 368.4 L710.7 367.2M872.4 680.8 L865.5 681.9 L864.3 674.6M555.1 311.5 L562.9 312.6 L562.4 315.8M512.9 349.5 L522.4 350.8 L521.3 358.4M440.0 635.4 L436.7 634.5 L437.7 631.3M416.3 313.0 L415.3 310.0 L424.3 307.2 L425.3 310.2 L416.3 313.0M830.9 511.0 L822.9 511.6 L822.5 507.5 L830.5 506.9M511.2 637.9 L511.7 641.2 L507.1 642.0M620.0 676.5 L626.9 677.0 L626.5 683.1 L619.6 682.6M443.4 511.2 L434.2 510.3 L434.9 502.6M579.7 624.1 L578.5 620.0 L586.4 617.7 L587.6 621.8 L579.7 624.1M705.5 695.3 L709.4 694.5 L710.9 702.0 L707.1 702.8M759.2 513.4 L762.3 512.9 L763.0 516.7M893.2 620.4 L892.8 615.4 L896.6 615.1M580.2 684.8 L579.7 690.9 L575.2 690.5M805.4 646.6 L805.1 639.8 L810.4 639.6 L810.7 646.4M700.8 680.0 L700.5 673.5 L707.4 673.2 L707.6 679.8M495.6 441.0 L495.2 444.5 L485.6 443.5 L486.0 439.9M791.6 397.4 L792.0 394.1 L799.6 394.9 L799.2 398.3 L791.6 397.4M635.9 306.4 L636.5 302.1 L644.4 303.2M606.6 331.7 L614.2 333.7 L612.5 340.1 L604.9 338.1M470.5 574.6 L476.8 576.9 L474.1 584.3 L467.8 582.1M897.0 467.1 L897.5 463.3 L901.2 463.7 L900.7 467.5 L897.0 467.1M745.3 630.9 L746.3 637.3 L738.3 638.4 L737.4 632.1 L745.3 630.9M571.0 543.5 L571.0 548.9 L566.8 548.9 L566.8 543.5M632.4 448.8 L632.7 456.5 L627.9 456.7M758.5 486.5 L749.9 483.9 L751.7 477.9 L760.3 480.5 L758.5 486.5M693.3 680.0 L702.1 679.8 L702.2 684.7 L693.4 684.8M815.1 377.6 L815.6 382.2 L812.1 382.7M545.0 562.1 L548.5 562.8 L547.2 569.8 L543.8 569.2 L545.0 562.1M702.7 418.2 L701.3 412.9 L706.2 411.6M833.4 683.7 L834.7 690.1 L826.6 691.8M761.0 631.6 L752.9 629.3 L753.9 625.8 L762.0 628.1 L761.0 631.6M469.2 637.4 L475.4 639.2 L474.0 644.1 L467.8 642.3M713.1 568.7 L711.8 576.3 L703.0 574.9 L704.2 567.3 L713.1 568.7M623.1 525.8 L622.9 521.3 L627.6 521.1 L627.8 525.6 L623.1 525.8M629.4 403.6 L635.7 404.5 L635.3 407.6 L628.9 406.6 L629.4 403.6M545.7 429.5 L546.2 434.4 L538.5 435.2 L538.0 430.3M831.2 494.3 L839.9 493.1 L840.9 500.2 L832.2 501.4 L831.2 494.3M507.6 324.3 L508.7 328.2 L499.2 330.9M837.9 312.9 L845.7 311.8 L846.5 317.1M603.2 474.0 L603.6 479.7 L596.5 480.3 L596.1 474.6 L603.2 474.0M865.7 573.7 L857.4 576.7 L855.9 572.3 L864.2 569.3 L865.7 573.7M801.0 701.4 L801.5 708.2 L794.9 708.7M842.4 602.2 L848.4 604.0 L846.5 610.3 L840.5 608.6 L842.4 602.2M847.9 564.2 L840.5 562.8 L841.2 559.2M505.6 399.5 L507.6 393.5 L514.8 395.9 L512.8 401.9M564.8 470.9 L557.7 471.5 L557.2 465.8 L564.4 465.2 L564.8 470.9M495.5 676.4 L496.1 672.8 L503.1 673.9M731.7 289.9 L731.8 296.2 L727.3 296.3M776.0 648.9 L776.7 644.2 L781.1 644.8M521.2 590.9 L521.8 594.0 L512.8 595.5 L512.3 592.4M610.0 514.0 L618.9 516.7 L617.5 521.6 L608.6 519.0M918.8 583.1 L913.7 582.3 L914.5 577.2 L919.6 578.0 L918.8 583.1M899.0 513.2 L897.3 519.9 L892.8 518.7 L894.5 512.1 L899.0 513.2M851.7 466.2 L860.4 465.7 L860.7 471.0 L852.0 471.5 L851.7 466.2M593.4 429.6 L587.5 429.6 L587.4 424.6M733.2 317.2 L733.6 312.6 L741.5 313.4M515.1 687.3 L523.7 685.0 L525.4 691.4M567.2 336.2 L568.4 341.0 L559.9 343.1 L558.7 338.3 L567.2 336.2M494.5 369.7 L490.3 368.3 L492.3 362.4 L496.5 363.8M876.7 415.2 L874.6 408.9 L883.2 406.0M907.9 635.0 L907.9 639.2 L899.0 639.0 L899.1 634.9M705.0 650.3 L700.2 649.7 L700.7 645.6 L705.5 646.2 L705.0 650.3M908.7 556.3 L918.6 556.6 L918.3 563.2M814.8 357.8 L820.6 357.0 L821.3 362.4 L815.5 363.1 L814.8 357.8M793.1 291.2 L784.4 291.2 L784.4 286.8 L793.1 286.8M448.9 627.8 L455.2 628.5 L454.6 633.4 L448.3 632.7M712.8 316.8 L713.8 313.7 L717.8 315.0 L716.8 318.1 L712.8 316.8M531.0 293.0 L536.6 292.7 L536.8 297.7 L531.2 297.9M703.5 308.3 L705.0 314.3 L699.7 315.7 L698.1 309.7 L703.5 308.3M570.1 498.2 L568.0 505.7 L564.4 504.7M873.0 621.9 L872.9 618.2 L877.1 618.0M576.3 481.7 L576.0 473.7 L580.5 473.6 L580.7 481.5M699.3 304.6 L698.4 296.9 L702.5 296.3 L703.5 304.1 L699.3 304.6M891.0 415.0 L892.1 420.0 L887.6 421.0 L886.5 416.0 L891.0 415.0M771.4 416.6 L771.8 409.4 L781.3 409.9 L781.0 417.1M869.5 319.5 L876.1 317.5 L877.7 322.9 L871.1 324.9M634.3 692.3 L633.7 686.6 L639.8 685.9 L640.5 691.6M449.3 472.2 L457.4 473.4 L456.4 480.7 L448.3 479.5M671.3 548.9 L664.2 549.6 L663.5 542.9 L670.6 542.1M934.8 319.9 L936.3 326.4 L929.8 327.8 L928.3 321.4M428.2 575.4 L421.1 577.0 L419.4 569.2 L426.5 567.7M775.8 622.0 L776.0 616.1 L780.2 616.3 L780.0 622.2 L775.8 622.0M473.0 462.4 L474.7 467.8 L470.0 469.4M606.5 403.3 L604.7 410.6 L601.4 409.8M839.9 298.0 L841.1 304.0 L833.0 305.6 L831.8 299.7 L839.9 298.0M664.7 425.3 L662.5 418.5 L668.0 416.7M433.2 293.6 L433.3 289.0 L438.2 289.0 L438.1 293.6 L433.2 293.6M927.5 344.9 L927.0 351.6 L921.0 351.2 L921.4 344.5M607.9 293.8 L616.2 295.8 L614.8 301.3 L606.6 299.3M832.2 403.1 L832.4 407.1 L826.3 407.4 L826.1 403.4 L832.2 403.1M787.9 452.2 L786.4 458.4 L780.0 456.8 L781.5 450.6M676.8 370.2 L682.3 371.4 L681.1 376.9 L675.6 375.7M638.8 416.7 L638.2 421.1 L632.8 420.3M790.1 474.7 L795.2 473.1 L796.8 478.1M567.0 577.7 L566.7 574.4 L574.1 573.6 L574.4 577.0 L567.0 577.7M916.0 398.6 L914.5 393.9 L919.5 392.4 L920.9 397.0 L916.0 398.6M732.9 530.2 L732.9 535.7 L725.5 535.7M772.4 542.0 L764.7 542.5 L764.3 536.1M848.6 387.2 L853.3 385.8 L854.6 390.4 L849.9 391.8 L848.6 387.2M922.3 452.6 L922.8 457.2 L916.3 458.0M452.5 585.9 L461.5 587.3 L460.4 594.2 L451.5 592.8 L452.5 585.9M783.7 536.4 L788.9 537.2 L788.0 542.6 L782.8 541.8 L783.7 536.4M502.9 440.7 L503.4 444.6 L498.9 445.3 L498.4 441.4M554.5 432.0 L563.2 430.2 L564.7 437.2 L555.9 439.0 L554.5 432.0M744.8 685.6 L747.7 686.7 L746.2 690.8 L743.3 689.8M519.8 691.0 L528.7 693.0 L527.9 696.6M683.2 490.8 L684.3 496.2 L674.9 498.1 L673.8 492.7M592.4 457.3 L597.5 459.1 L595.5 465.1 L590.4 463.3 L592.4 457.3M442.3 663.3 L448.3 662.2 L449.2 667.4M549.6 557.6 L548.6 562.5 L539.1 560.6 L540.1 555.7M534.4 635.0 L544.1 636.5 L543.5 640.0 L533.8 638.5M772.0 350.8 L772.8 357.6 L763.1 358.9M745.1 361.7 L744.7 367.5 L738.8 367.1 L739.1 361.4M909.9 368.3 L908.6 362.4 L912.1 361.7 L913.4 367.5M761.7 381.4 L769.5 381.1 L769.7 386.9 L761.9 387.2 L761.7 381.4M682.9 672.5 L681.3 677.3 L677.4 675.9 L679.0 671.1 L682.9 672.5M815.5 670.3 L814.8 663.7 L823.4 662.7M574.6 406.3 L576.0 399.3 L582.1 400.6 L580.7 407.6 L574.6 406.3M854.0 524.0 L857.8 523.4 L858.6 528.4M788.7 551.7 L790.4 558.0 L781.3 560.5 L779.6 554.1 L788.7 551.7M528.2 590.3 L537.2 589.3 L537.5 592.3 L528.6 593.4 L528.2 590.3M616.6 547.1 L624.5 547.0 L624.5 550.6 L616.6 550.7M622.1 590.5 L621.3 585.1 L629.4 583.8 L630.2 589.3M914.7 699.6 L914.8 704.5 L905.1 704.6 L905.0 699.7M481.6 668.2 L480.6 676.1 L473.5 675.2M739.8 397.2 L739.1 403.9 L732.9 403.2 L733.6 396.6 L739.8 397.2M738.9 460.9 L733.8 461.6 L733.3 457.0 L738.3 456.3 L738.9 460.9M622.3 564.1 L629.7 566.6 L628.6 570.1 L621.1 567.7 L622.3 564.1M907.9 395.1 L909.4 402.1 L905.2 403.1 L903.6 396.1M530.7 674.5 L525.8 675.8 L523.9 668.4 L528.8 667.1 L530.7 674.5M669.4 582.0 L670.5 587.9 L662.8 589.3 L661.7 583.5 L669.4 582.0M824.3 450.3 L825.1 445.6 L834.4 447.3M542.5 369.6 L537.0 371.4 L534.6 364.0 L540.0 362.2 L542.5 369.6M776.9 348.3L777.8 351.0M563.5 440.8L562.7 442.4M708.2 409.3L712.6 409.8L711.8 413.0L715.4 413.5M524.0 661.1L526.1 661.9L525.1 663.6M502.3 472.0L504.1 475.2L505.8 474.0L507.7 475.3M802.2 483.0L804.0 483.1M629.9 684.6L626.3 684.6L626.0 687.8M781.4 297.3L780.8 300.5L784.3 302.2M588.0 565.9L585.8 567.0L586.4 570.3M588.9 313.0L586.4 312.1L586.1 307.9M793.6 582.7L795.8 582.1L796.4 578.2M756.4 553.5L760.0 554.0L761.2 552.1L759.2 550.0M704.6 665.9L707.9 665.7M871.8 513.6L871.6 510.1M880.5 431.9L885.0 431.9L884.7 434.6M919.3 649.4L917.8 650.1M665.7 393.8L661.9 392.3M783.5 631.1L779.4 630.4L779.7 634.6L783.3 633.9M417.3 383.6L414.0 383.3M521.4 573.4L523.6 573.5M492.3 538.1L492.9 536.7L490.1 534.3L488.7 536.8M423.0 637.5L424.8 637.0L426.9 639.6M729.2 438.9L730.8 442.3L733.9 441.1M757.6 636.5L757.5 632.7L759.6 632.8M608.1 366.1L609.1 362.4M564.9 373.1L566.6 369.9L564.2 368.4L562.0 370.2M777.4 560.0L780.6 558.3M902.7 512.4L899.8 511.8L899.6 508.9M898.4 682.0L896.4 681.3M710.2 394.3L713.2 395.4L716.0 392.8L714.1 390.9M481.8 672.3L479.0 673.2M443.8 302.3L446.5 302.0L445.5 299.0M654.7 599.8L651.3 599.0L649.5 600.0M735.6 482.3L735.0 478.2L732.5 477.7L732.3 475.4M685.6 646.0L684.9 644.5L681.9 643.6M786.3 640.2L788.1 639.3L786.8 636.2M608.6 675.8L612.0 674.6L611.4 671.2M735.3 509.3L732.6 509.5M521.5 517.3L524.6 517.3L526.5 519.6M794.4 522.6L792.5 522.4L791.8 519.6M624.7 300.0L626.1 300.6L626.8 302.5M880.5 349.0L883.4 350.5M746.4 597.7L746.8 594.5L745.0 594.2L745.2 592.6M848.6 370.0L845.0 371.6L844.7 375.9L840.4 376.4M418.8 489.7L420.1 486.1L423.0 484.8M548.9 628.2L551.5 626.9L550.5 625.0L548.1 627.0M486.9 570.9L486.5 569.2M618.2 403.2L618.2 401.5L621.1 401.2L623.0 403.7M489.2 381.4L490.6 380.7L489.1 378.6L491.0 376.9M671.0 580.1L674.4 580.8L676.0 583.5M909.4 585.2L910.2 587.7M871.8 465.7L869.7 466.0L871.0 470.0L870.0 471.1M923.4 625.2L927.4 625.6L927.3 623.4M883.3 338.4L885.2 337.6M523.7 631.1L522.5 634.7M677.6 502.2L678.1 504.5L676.6 505.9M591.6 670.1L593.0 670.8L593.9 668.1L597.8 669.7M921.1 550.8L920.7 552.7L918.5 552.9L916.4 556.2M759.9 489.2L763.1 490.3L766.3 488.5M674.7 516.1L678.7 515.5L680.6 517.4L678.8 520.4M581.7 455.9L578.2 455.5M524.6 366.5L524.9 364.0L527.4 363.5M524.9 486.7L525.6 491.0L523.8 492.6L522.5 491.7M736.3 520.0L733.8 519.7L733.7 518.1M506.7 658.4L507.1 660.6L511.0 660.3M763.2 459.3L761.8 458.6L759.4 460.4M778.5 382.4L776.4 383.0L775.6 380.3L771.5 379.5M718.1 358.0L714.0 358.6M692.4 353.6L688.5 353.4M534.4 303.7L535.6 307.5L539.1 305.7M554.7 314.3L559.0 313.1M660.5 452.3L662.3 451.7L663.3 449.3L661.1 446.0M856.7 503.3L857.0 501.4L853.4 498.7L854.4 496.4M835.4 482.2L836.4 484.6M514.8 382.0L511.4 381.6L511.7 385.5L513.6 386.8M645.1 408.9L648.1 408.0L650.1 410.9M632.2 470.1L631.9 465.9M641.2 312.1L639.9 315.5M831.9 601.0L834.6 601.4L835.5 603.4L838.4 602.2M604.9 505.2L604.0 508.1L607.7 508.4M482.8 334.3L479.2 334.3M835.2 302.8L835.2 306.8L832.7 306.8L831.8 309.2M861.9 591.6L863.4 591.6L862.9 587.2L860.7 586.6M903.4 403.3L906.8 405.2L906.9 407.9M809.8 399.7L807.3 399.8L807.4 396.3M436.5 405.1L437.8 408.3L440.4 409.2M621.1 440.3L623.5 441.1L624.8 444.8M804.6 554.4L801.6 555.1L801.9 558.9L805.6 558.1M928.4 423.4L931.6 422.2M668.1 529.5L669.9 530.6M904.4 366.4L901.5 367.3L900.8 364.5M524.2 648.5L521.5 647.0L520.6 643.8M816.2 449.6L818.2 450.4L819.2 448.7L817.9 445.5M710.4 540.9L711.1 544.2L707.3 546.5M474.7 302.3L476.4 301.4M503.6 446.7L502.5 449.6L504.8 450.3M703.7 645.1L706.8 646.3M596.4 350.0L595.8 352.9M486.2 436.0L486.5 433.4M575.7 630.6L577.9 629.7L578.5 631.3L580.9 629.7M860.4 635.7L863.0 637.2L862.1 639.4M446.0 508.2L446.1 506.0L449.2 504.8M599.7 520.6L603.7 521.9L602.5 525.0L598.5 525.5M886.3 547.4L883.1 546.9L882.7 550.9M518.1 402.1L516.1 402.3L516.2 399.5L517.6 398.2M534.7 485.6L534.9 483.3M684.6 439.6L683.5 437.2M839.2 541.0L839.3 544.8L834.8 544.7M683.2 567.5L685.5 567.7L686.1 569.9L688.3 570.5M478.1 503.2L475.7 503.4L473.8 506.7M783.7 366.9L783.7 364.7L781.2 364.6L781.6 367.3M814.2 530.6L812.6 527.0L809.3 526.5L810.2 523.7M604.2 583.1L607.1 581.8L605.5 578.1M737.8 359.7L736.7 362.9L733.1 362.8L731.7 364.4M608.6 381.6L609.7 384.4L614.0 383.6M656.8 469.6L654.0 469.5L651.9 466.1L650.1 468.0M906.7 465.1L910.0 464.9M419.4 317.8L417.9 318.1L416.0 316.0L414.7 316.9M643.2 288.8L647.0 289.3L645.7 292.6L646.8 295.0M469.9 396.5L470.1 393.6L471.6 392.4L471.3 390.2M486.5 332.8L488.0 336.0L485.8 336.5L485.1 338.3M672.8 686.6L676.6 686.7L677.5 689.4M901.6 382.0L905.0 380.3M753.5 316.6L752.2 313.4M888.3 440.4L888.9 436.5L885.6 435.4M718.0 579.1L716.3 575.5M847.0 580.3L850.2 581.2L850.6 576.8M892.3 517.4L891.6 519.6L895.2 521.2L896.9 518.6M814.0 552.2L813.8 554.9L818.1 556.1M634.8 380.5L632.8 380.9L631.8 379.8M756.3 614.8L753.5 616.3M576.2 576.6L574.9 573.7M656.2 505.0L655.4 501.7L656.8 500.0M574.3 285.6L574.5 289.7L577.9 292.5L579.4 290.1M923.5 397.9L922.0 398.4M431.8 592.8L429.9 593.6M787.3 528.7L784.6 527.9L783.7 525.4L785.2 524.2M705.5 523.3L709.3 523.0L709.8 520.8M466.4 408.3L465.7 405.1L463.3 404.9L461.7 406.5M660.6 638.5L656.6 638.9L655.9 635.9L657.6 634.5M498.6 502.3L497.8 500.6L493.6 501.7L494.5 503.8M870.9 489.2L869.0 490.0L868.7 491.6L864.5 491.5M510.2 465.3L506.6 464.1L505.4 460.5L509.3 460.2M863.1 547.8L864.1 550.3M777.7 482.2L779.9 483.0M684.5 655.9L682.8 652.1L684.4 651.0L684.4 649.3M596.7 419.9L597.3 423.4M439.3 623.1L442.7 621.1L442.1 618.6M810.7 648.5L806.9 650.3M442.5 607.3L446.0 609.2L445.8 612.1M449.8 577.8L447.5 577.9M735.5 450.5L738.8 451.8L739.1 450.2M462.1 426.8L465.3 425.3L466.9 425.8M856.3 589.7L855.4 591.6L852.7 591.7M458.2 467.3L461.9 466.8L462.8 469.7L461.1 471.9M862.3 617.9L866.4 618.6M630.3 652.4L630.2 650.6L633.1 648.2L634.1 650.4M695.3 615.8L696.0 614.3M878.1 368.6L880.5 367.6M630.8 503.5L628.1 503.0L628.1 500.8L625.2 500.5M925.1 656.0L927.0 655.7L926.4 651.3L928.7 649.5M758.5 284.7L758.6 287.8L760.9 289.9M796.4 513.6L798.8 512.6M450.2 403.1L449.9 405.3L445.8 406.2M451.3 351.3L449.0 350.2M620.9 451.2L622.0 447.6L624.9 446.7L625.4 444.2M508.5 355.4L510.1 355.9L511.1 358.5M798.9 365.3L801.9 366.8M723.3 289.0L726.1 290.5M627.5 337.5L628.9 336.9L629.2 333.7M467.6 685.3L467.5 681.9L470.5 681.8L470.8 686.0M832.6 422.9L831.4 420.7M687.8 462.3L689.0 459.2M906.4 324.9L905.8 326.4L902.3 324.9M494.8 637.3L495.6 634.6M776.2 453.2L778.0 453.1L777.8 451.5M703.0 508.9L704.8 508.6L706.1 504.6M729.4 696.5L732.2 696.7L731.7 700.5M581.1 593.3L577.6 592.7M549.0 396.2L548.1 394.7L550.1 394.1L551.5 396.3M593.4 619.4L591.5 619.8M459.6 390.2L462.1 391.3M896.5 448.7L899.9 447.8M818.7 344.3L820.2 345.2L821.6 341.7M762.5 670.6L760.1 671.8L762.1 675.6L761.0 676.6M731.7 616.6L731.3 615.0L734.8 615.0M723.5 389.9L720.6 388.7L720.2 391.0L718.1 390.3M530.7 697.1L526.5 697.2L526.3 700.8L524.7 701.7M850.8 623.2L852.4 623.2L852.9 626.3L849.0 626.0M841.3 299.3L842.5 296.7M563.0 454.8L565.0 455.8L565.9 452.0M630.4 372.2L632.1 373.2M624.7 629.1L626.9 629.6M438.5 437.8L435.8 436.4L436.6 432.7M471.8 600.1L471.8 596.2L476.1 595.6L475.6 591.9M724.4 328.2L724.4 325.2M533.4 531.9L537.0 532.9L538.7 529.9L538.2 528.0M823.1 504.9L822.3 502.7L819.7 502.2M832.0 636.1L830.4 639.6L828.8 640.0M571.4 695.6L575.2 697.2M579.3 503.7L581.2 500.0M713.5 323.5L711.1 324.1M560.7 590.9L564.0 592.6L563.2 595.0M667.3 318.7L669.7 319.4M693.0 484.0L688.6 485.1L687.9 482.6L690.0 482.5M708.5 597.5L709.4 599.5L707.2 602.0L709.0 605.6M928.4 472.0L927.0 475.6L929.4 476.1M903.1 633.9L905.6 633.7L905.4 635.5L902.6 635.3M736.8 648.8L740.3 649.4L739.9 651.8M752.4 348.8L753.6 345.1L755.7 345.5M530.4 318.5L531.5 321.2M722.3 591.0L724.6 591.8M913.1 692.0L911.5 688.5M424.2 292.0L422.5 292.7L420.8 296.5M687.9 380.5L690.7 379.9L691.5 382.1L688.1 384.6M845.3 696.4L843.1 696.1L843.9 692.1M842.4 650.0L843.4 654.2L846.7 654.4M431.2 429.4L432.3 427.2L434.4 426.8M476.1 465.8L479.6 465.4L479.7 462.0L483.8 460.8M449.1 359.7L445.7 359.5L443.4 356.9L439.9 358.7M637.3 566.9L640.6 565.7L641.8 566.9M867.6 699.8L868.4 702.7L866.2 705.9M532.1 413.6L535.0 413.5M442.8 646.3L442.5 643.4L444.6 640.7L440.9 638.8M541.1 634.4L538.2 635.4L538.2 638.1M517.5 549.4L517.1 545.4L513.0 544.4L514.1 540.7M558.2 677.3L558.7 674.1L562.7 675.3M439.0 491.0L435.9 492.7M497.6 616.8L498.2 613.6L501.0 612.5M688.4 588.2L688.0 590.8L690.1 590.7M623.7 324.3L627.1 325.5L629.7 321.9L627.5 320.8M478.3 542.2L474.6 543.2M490.7 301.0L493.1 299.7L492.3 295.7L488.7 297.2M580.8 647.8L582.6 648.1M443.8 316.9L440.0 316.3M753.9 572.3L749.4 572.3L749.9 575.9M615.4 526.8L617.3 526.7L620.0 529.9L622.4 530.1M705.9 429.2L703.5 429.4L701.1 426.8L702.9 425.2M662.5 691.3L662.5 689.5L664.4 689.6M706.9 622.0L708.9 622.7L708.5 625.0L704.7 625.9M784.1 493.9L781.5 493.8M593.1 480.7L597.1 482.3L597.2 484.0M773.1 320.0L776.6 319.5M541.8 355.7L545.1 356.0L547.6 353.7M531.9 425.7L532.2 427.5M607.2 645.1L609.0 644.5L610.6 646.0M551.2 570.9L551.1 569.2L548.0 568.7L545.4 570.6M796.9 310.9L793.1 309.2L794.9 306.1M583.8 435.4L585.1 432.1L588.2 432.3M505.9 306.3L501.9 307.6L503.1 309.8L499.9 311.3M791.9 468.1L789.7 468.2M579.6 372.8L583.2 372.0L583.3 374.3L586.4 376.6M681.0 328.6L683.7 328.1M537.2 700.7L538.7 700.4L540.2 704.6M825.3 307.8L822.3 307.2L819.9 310.3M719.4 346.9L722.5 345.3L724.4 349.1L727.3 347.2M646.0 604.2L650.1 606.1L649.5 608.9M426.6 687.2L428.1 686.6L427.8 683.3L426.5 682.2M845.8 393.6L849.9 393.6L851.2 390.4M549.2 338.4L550.8 337.5M912.2 536.8L916.4 538.1L918.4 534.6M711.8 484.2L712.2 488.5L710.0 490.8M431.4 335.8L428.1 336.2L427.5 332.4L424.5 330.6M852.5 458.3L852.6 461.0L850.0 460.7M796.9 338.0L794.9 336.9L793.0 340.3L789.5 339.2M587.8 560.2L586.9 558.5M856.7 433.1L854.0 431.9L853.5 427.7L851.4 428.3M426.7 669.1L428.1 672.0M784.7 694.6L783.1 694.7M427.5 361.9L426.1 366.1M639.4 549.8L641.4 549.2M716.5 697.0L712.9 696.4M758.1 367.0L760.6 367.8L761.9 366.2M881.7 300.7L881.3 305.1M667.2 372.8L664.6 373.4M924.1 289.4L925.6 288.9L926.5 285.0M437.7 492.6L437.1 496.3L435.2 497.7M847.0 417.8L846.2 419.2L849.3 421.4M670.0 615.7L669.0 617.5L666.3 618.0M474.8 521.1L474.1 525.2L470.5 523.8L468.7 524.7M894.4 606.5L898.6 607.1M556.7 645.4L559.7 646.7M764.3 533.0L767.3 533.8L767.3 536.4M677.2 287.5L678.6 290.7L682.3 290.4M648.8 621.3L650.3 621.5M912.4 407.3L912.0 404.1L914.7 402.6L916.5 404.0M535.4 553.3L535.3 549.8L537.1 548.4L536.9 546.6M788.5 400.2L785.0 400.1L784.1 398.8L788.3 397.4M851.0 533.2L849.1 533.5L847.5 531.8M750.6 424.6L752.4 424.2L752.7 426.8L750.7 428.9M482.9 628.1L483.6 624.6L480.3 623.6M438.8 552.9L440.5 553.4M876.9 378.5L874.9 379.1L873.5 381.9L871.3 382.1M805.4 685.7L803.0 686.4L802.3 687.8M698.7 451.0L699.0 448.2L696.9 447.1L698.2 445.2M654.8 337.1L659.0 335.7L658.1 333.7M665.1 297.2L661.9 296.2M576.4 498.6L578.0 499.5L580.1 498.8M445.5 659.0L446.2 656.5M451.5 692.0L451.0 689.1L449.3 688.8M484.1 638.6L486.8 637.9L488.1 641.0L491.2 639.5M436.5 551.6L438.5 552.4L436.5 555.7M484.8 565.9L480.3 565.3M819.8 672.3L820.3 669.5L816.4 669.7M794.8 389.0L795.2 391.6L792.9 392.1L793.6 395.9M454.5 535.0L450.6 533.7L447.9 535.2M689.7 551.3L688.3 554.4L684.5 552.9M906.1 623.5L901.9 625.1L903.2 629.3M869.1 313.3L873.0 311.3L873.3 308.6M801.8 426.1L801.1 423.6L798.2 422.3M680.4 344.5L682.4 344.5L681.8 340.5L683.3 340.5M472.9 489.1L474.9 488.4M825.6 682.1L827.0 681.4M847.7 489.8L844.5 491.4M910.7 319.6L914.0 320.1M746.7 385.6L745.7 389.5L749.0 391.1M535.7 503.0L538.5 501.4L538.9 497.2M543.2 463.8L545.3 464.5L546.2 468.5M713.7 294.7L715.4 298.5M556.3 342.1L560.4 342.6M651.0 405.5L649.2 406.4L646.0 403.7M898.2 563.6L900.5 563.5M555.6 414.4L555.7 411.0M589.6 291.0L592.0 290.9L593.9 293.8M777.3 572.4L774.1 571.2L773.1 567.2L768.9 565.8M927.1 358.9L931.2 358.7L931.7 356.1L927.5 356.1M897.6 484.6L894.6 484.6M745.6 501.9L741.2 501.6M583.0 393.3L582.3 394.7M920.9 598.4L917.3 597.8L916.4 595.4M524.3 514.6L526.9 513.2L527.9 509.6L531.7 510.0M654.5 555.1L657.8 555.5L657.7 551.7L654.6 549.5M634.0 519.0L637.5 519.4L636.4 522.3L637.2 524.1M560.4 313.6L562.6 313.9L563.3 312.5L560.8 310.4M568.2 552.3L568.2 549.2M841.4 340.5L837.9 339.2M928.1 351.3L923.9 351.9M515.8 343.2L518.2 343.6L518.2 339.4L520.6 337.4M919.5 492.7L920.6 489.2L917.0 487.8L914.8 491.4M781.5 670.6L780.5 667.0L782.8 666.1M630.6 431.9L631.3 434.1M720.6 399.6L724.1 397.9L721.6 394.2L722.8 393.2M505.0 592.3L507.3 593.0L507.8 596.9L504.8 598.9M827.6 400.3L831.3 401.0M486.3 700.2L482.9 700.1L481.3 703.3L479.7 703.4M621.9 477.1L623.6 476.6L622.0 473.3M706.2 329.6L707.9 332.9L709.5 331.4L711.0 332.0M573.2 379.3L573.3 383.4M554.1 593.4L558.5 593.1L558.4 590.5M415.7 528.1L419.4 530.0L421.2 528.0L425.2 528.5M866.3 663.2L866.0 665.4M807.5 590.2L807.9 585.8L811.7 585.8M873.3 576.8L875.6 576.0L876.2 573.5M640.1 665.6L640.6 667.9L644.0 667.4L646.1 671.3M775.5 599.9L779.0 599.6M750.2 415.1L751.1 412.1M493.6 412.0L490.6 411.9L491.1 415.3M539.6 437.4L543.0 437.2M420.9 624.7L423.7 623.2M595.7 691.8L591.6 690.5M817.5 630.1L816.5 627.6L813.3 629.3M683.5 407.5L686.2 406.3M733.7 663.0L733.7 664.9L735.1 665.3L737.0 663.1M529.5 594.0L531.4 593.9L533.5 596.1L537.5 596.2M508.5 548.5L512.9 548.2M627.8 458.9L629.3 462.1M479.8 311.7L482.6 311.6L482.4 309.3L485.7 307.8M477.1 353.2L479.4 352.8L479.0 351.3L474.9 349.5M603.2 337.1L602.3 339.0M851.7 655.5L855.7 653.8M847.1 309.4L844.4 308.1M740.1 557.7L742.6 559.0M619.3 696.5L621.7 697.8L621.0 699.4L622.7 703.5M778.6 442.5L781.0 442.5M883.4 300.3L882.7 297.1L879.6 297.9M794.8 664.6L796.7 663.6L798.0 664.4L797.7 668.0M612.1 600.0L612.9 602.8L614.7 602.7L614.7 600.6M567.5 529.2L567.0 526.6L569.2 525.4M825.2 398.9L826.3 396.5L828.9 396.7M624.5 542.1L621.0 543.8L620.6 546.7M472.8 364 L478 372 L486 389 L485.8 415 L485.5 441 L501.7 468 L528.6 498.7 L555.6 533.4 L586.4 572 L609.6 599 L637.6 613 L670.6 624.7 L694 643.5M503.3 467.0 L530.2 497.7 L557.2 532.4 L588.0 571.0 L611.2 598.0" fill="none" stroke="#cb8650" stroke-width="0.95" stroke-linejoin="round" stroke-linecap="round" opacity="0.85"/></g><path d="M455.4 363.1 455.2 370.2 455.6 374.0 452.5 376.4 446.4 382.3 441.1 388.6 437.3 394.2 436.9 394.7 432.9 401.3 429.8 408.1 427.7 415.0 426.5 422.0 426.5 423.2 425.7 424.6 422.9 431.7 421.1 438.9 420.1 444.4 419.4 451.4 419.6 458.5 420.9 465.5 423.2 472.4 426.4 479.2 427.9 481.5 428.7 486.0 429.3 488.9 431.4 495.6 434.4 502.2 438.2 508.6 443.0 514.7 448.5 520.5 454.9 525.9 461.9 530.9 469.7 535.4 474.0 537.7 482.6 541.9 491.8 545.4 501.5 548.4 511.5 550.7 521.8 552.4 532.3 553.4 542.9 553.7 553.5 553.3 554.4 553.2 554.0 556.0 553.9 557.5 553.2 560.4 552.4 568.0 552.8 575.6 554.4 583.1 557.1 590.5 560.9 597.6 565.7 604.4 571.6 610.9 578.5 617.0 586.2 622.5 594.7 627.5 604.5 632.6 613.8 637.0 623.7 640.7 634.1 643.7 644.9 646.0 656.0 647.5 658.5 647.7 669.5 648.4 680.6 648.4 691.6 647.6 694.0 647.3 696.5 652.5 701.0 659.5 706.4 666.1 712.9 672.2 720.3 677.9 728.4 683.1 737.4 687.7 746.9 691.7 755.2 694.7 765.4 698.0 776.2 700.6 787.2 702.4 798.5 703.4 809.8 703.7 821.2 703.2 832.4 701.8 843.3 699.7 853.9 696.9 861.9 694.4 871.8 690.9 881.1 686.8 889.7 682.0 897.6 676.7 904.6 670.9 910.8 664.6 915.9 657.9 920.0 650.9 923.0 643.7 925.0 636.3 925.8 628.8 925.5 622.5 925.9 620.2 926.0 613.1 925.1 606.0 923.3 599.0 920.4 592.2 916.6 585.6 911.8 579.3 906.2 573.3 899.8 567.7 892.5 562.5 884.6 557.8 877.7 554.1 868.9 549.9 859.5 546.2 849.7 543.2 839.4 540.8 828.8 539.2 818.0 538.2 814.6 538.0 819.0 532.6 823.1 526.0 826.3 519.2 828.5 512.3 831.4 500.0 832.6 492.8 832.8 485.5 831.8 478.3 829.9 471.2 826.9 464.2 822.9 457.4 817.9 451.0 812.0 444.9 805.3 439.2 797.7 434.0 789.5 429.3 780.5 425.2 771.1 421.7 761.2 418.9 750.9 416.7 741.5 415.3 741.7 415.1 744.3 407.8 746.7 399.0 748.2 391.6 748.6 384.2 747.9 376.8 746.1 369.5 743.2 362.3 739.3 355.4 734.3 348.7 730.1 344.3 726.8 337.8 722.2 331.1 716.6 324.8 710.2 318.8 702.9 313.4 694.8 308.4 686.0 304.0 676.6 300.2 666.7 297.1 656.4 294.6 645.8 292.8 635.0 291.8 624.0 291.4 613.3 291.8 608.9 290.7 598.6 288.9 592.4 288.0 581.4 286.8 570.2 286.4 559.1 286.7 548.0 287.8 537.2 289.7 526.7 292.3 516.6 295.5 507.1 299.5 498.3 304.1 490.1 309.2 482.8 314.9 476.4 321.1 471.0 327.6 466.5 334.5 462.1 342.4 458.9 349.2 456.7 356.1Z" fill="none" stroke="#2c3a2c" stroke-width="0.9" stroke-linejoin="round"/><path d="M539.25 421.93 545.70 422.22 547.63 425.78 539.92 425.78ZM536.36 426.36 547.63 425.78 551.00 432.81 550.52 434.26 540.89 435.41ZM539.92 435.70 546.95 435.41 547.34 443.89 544.74 446.77 543.29 451.59 541.56 443.89ZM547.63 434.74 562.07 432.14 567.85 443.40 556.77 444.37 547.63 444.37ZM554.37 444.85 567.85 443.89 575.07 451.59 553.89 451.40ZM553.89 451.78 575.07 451.78 577.96 455.92 558.22 456.40ZM552.44 452.07 558.22 456.59 564.96 456.88 565.44 463.14 553.40 463.62 548.59 458.81 551.96 458.33ZM565.25 456.88 584.21 456.40 583.73 461.22 566.40 461.70ZM566.40 461.99 583.25 461.70 581.81 466.51 575.07 466.99 574.59 469.40 567.85 469.40ZM530.30 447.54 538.00 449.85 536.55 454.28 529.33 453.03ZM543.29 453.51 546.18 457.36 544.74 466.03 539.44 465.07ZM542.81 466.99 556.77 470.84 560.62 475.18 543.78 474.21ZM537.32 474.50 543.29 474.21 542.33 479.70 538.00 477.39ZM569.56 360.41 575.74 361.29 573.53 368.97 565.15 368.35ZM610.41 368.09 617.65 367.21 618.53 365.88 624.71 365.44 626.03 376.03 613.24 375.59ZM630.44 377.79 633.53 380.44 632.65 389.27 622.94 390.15 628.68 385.30ZM633.53 380.44 638.65 385.30 636.18 394.12 632.21 394.56 632.65 389.27ZM622.94 390.41 632.65 389.53 631.94 394.56 617.21 392.35 618.53 390.59ZM707.40 488.24 713.04 488.33 711.32 499.51 704.71 499.26ZM713.04 488.33 718.92 488.33 716.72 500.00 711.32 499.51ZM718.92 488.33 722.84 488.24 719.90 500.49 716.72 500.00ZM663.87 559.80 667.55 560.05 668.77 561.76 672.70 563.24 676.86 567.40 674.66 574.51 672.21 574.26 662.40 569.12 663.38 566.18ZM796.00 611.28 809.20 611.99 816.08 615.68 814.98 620.35 815.80 627.23 807.83 629.70 799.58 626.68 796.28 618.15Z" fill="#9a5ba6" stroke="#3b2348" stroke-width="0.6" stroke-linejoin="round"/></svg><div class="abs" style="left:133.2px;top:263px;width:145.6px;height:206px;background:#fff;border-right:1px solid #dcdcdc"></div><div class="abs" style="left:133.2px;top:494px;width:145.6px;height:206px;background:#fff;border-right:1px solid #dcdcdc;border-top:1px solid #dcdcdc"></div><div class="abs" style="left:282px;top:263px;width:1px;height:437px;background:#d8d8d8"></div><div style="position:absolute;left:150.4px;top:449.0px;line-height:9.2px;font-size:6.2px;font-weight:normal;color:#2a2a2a;letter-spacing:-0.111px;white-space:nowrap;">WFS / OGC API - Features</div><div style="position:absolute;left:150.4px;top:457.4px;line-height:9.2px;font-size:6.2px;font-weight:normal;color:#2a2a2a;letter-spacing:-0.2px;white-space:nowrap;">ArcGIS REST Servers</div><svg style="position:absolute;left:141px;top:450.40000000000003px" width="6.4" height="6.4" viewBox="0 0 6.4 6.4"><g fill="none" stroke="#7f93ad" stroke-width="0.6"><circle cx="3.2" cy="3.2" r="2.6" fill="#eef2f7"/><path d="M0.6 3.2H5.8M3.2 0.6C1.8 2 1.8 4.4 3.2 5.8M3.2 0.6C4.6 2 4.6 4.4 3.2 5.8"/></g></svg><svg style="position:absolute;left:141px;top:458.8px" width="6.4" height="6.4" viewBox="0 0 6.4 6.4"><g fill="none" stroke="#7f93ad" stroke-width="0.6"><circle cx="3.2" cy="3.2" r="2.6" fill="#eef2f7"/><path d="M0.6 3.2H5.8M3.2 0.6C1.8 2 1.8 4.4 3.2 5.8M3.2 0.6C4.6 2 4.6 4.4 3.2 5.8"/></g></svg><div class="abs" style="left:129.15px;top:312.9px;width:0;height:0;transform:scale(0.5);transform-origin:0 0"><div style="position:absolute;left:8.9px;top:318.1px;line-height:17px;font-size:13px;font-weight:normal;color:#1b1b1b;letter-spacing:-0.239px;white-space:nowrap;-webkit-text-stroke:0.22px #1b1b1b;">Layers</div><svg style="position:absolute;left:278.8px;top:321.3px" width="10" height="10" viewBox="0 0 10 10" fill="none" stroke="#8a8a8a" stroke-width="1.1"><rect x="0.55" y="0.55" width="8.9" height="8.9" rx="2" fill="#f4f4f4"/><path d="M3.2 5.2L5.4 2.6L7.6 4.6" stroke-width="0.9"/><circle cx="4.2" cy="5.9" r="1.7" fill="#fff" stroke-width="0.9"/></svg><svg style="position:absolute;left:291.0px;top:321.3px" width="10" height="10" viewBox="0 0 10 10" fill="none" stroke="#8a8a8a" stroke-width="1.1"><rect x="0.55" y="0.55" width="8.9" height="8.9" rx="2" fill="#f4f4f4"/><path d="M2.9 2.9L7.1 7.1M7.1 2.9L2.9 7.1" stroke="#3c3c3c" stroke-width="1.35"/></svg><svg style="position:absolute;left:12px;top:340px" width="15" height="16" viewBox="0 0 15 16"><path d="M1.6 7.4L4.6 3.6L8.4 6.4L6 9.8Z" fill="#ebcf55"/><path d="M1.2 8.4L2 7.2L6.6 9.6L5.8 10.8Z" fill="#4a7fc0"/><path d="M1 9L5.8 11.2L8 13L4.4 13L1.2 10.8Z" fill="#d43b30"/><path d="M5.6 8.4L8.4 6.4L9.4 9.2L7.8 12.6L6 10.6Z" fill="#e9a962"/><path d="M8.2 8L13.3 2.9L14.3 3.9L9.2 9.4Z" fill="#dd8b2c"/></svg><svg style="position:absolute;left:34px;top:340px" width="15" height="16" viewBox="0 0 15 16"><path d="M1.6 13.2V7L4.4 3.2V13.2Z" fill="#e4e4e4" stroke="#8e8e8e" stroke-width="0.9"/><path d="M5.2 13V2.2L8 1.2V13Z" fill="#6d94c4" stroke="#7f8ea3" stroke-width="0.8"/><path d="M8.8 10V2.6L11 3.8V9" fill="#e4e4e4" stroke="#8e8e8e" stroke-width="0.9"/><circle cx="10.6" cy="12.3" r="2.9" fill="#3fae49"/><path d="M10.6 10.7V13.9M9 12.3H12.2" stroke="#fff" stroke-width="1.1"/></svg><svg style="position:absolute;left:55px;top:340px" width="17" height="16" viewBox="0 0 17 16"><path d="M1 8.2C4 3.4 10.4 3.2 14.2 8.2C10.4 12.6 4 12.6 1 8.2Z" fill="#f4f6f8" stroke="#9aa4ae" stroke-width="1"/><path d="M1.4 6.6C4.6 2.6 10.6 2.6 14 6.4" fill="none" stroke="#b4bcc4" stroke-width="0.8"/><circle cx="7.4" cy="7.9" r="2.9" fill="#4f82b8"/><circle cx="7.4" cy="7.9" r="1.2" fill="#1f3b58"/><path d="M11.8 12.6H15.8L13.8 15Z" fill="#3c3c3c"/></svg><svg style="position:absolute;left:77px;top:340px" width="17" height="16" viewBox="0 0 17 16"><path d="M1.2 1.4H12.8V3.8H1.2Z" fill="#e9cc45"/><path d="M1.2 3.8H12.8L8.6 8.6V14L5.6 12.6V8.6Z" fill="#5a8ec9"/><path d="M7.4 8.6V13" stroke="#88b0dc" stroke-width="0.8"/><path d="M11.4 12.6H15.4L13.4 15Z" fill="#3c3c3c"/></svg><div style="position:absolute;left:100.5px;top:336.5px;font-size:15px;line-height:16px;color:#c6c6c6;font-family:'Liberation Serif',serif">ε</div><svg style="position:absolute;left:100px;top:340px" width="25" height="16" viewBox="0 0 25 16" fill="none" stroke="#c8c8c8" stroke-width="1"><path d="M7.5 9.5H12V13H7.5ZM8.5 13V14.8M11 13V14.8"/><path d="M18 7H24L21 10.2Z" fill="#c4c4c4" stroke="none"/></svg><svg style="position:absolute;left:131px;top:340px" width="15" height="16" viewBox="0 0 15 16"><path d="M1 2.6H8.4M2 2.6V13.4" stroke="#9a9a9a" stroke-width="1" fill="none"/><rect x="2.6" y="3.2" width="4.6" height="10" fill="#f6f3ea"/><circle cx="5" cy="6" r="1.5" fill="#e9a737"/><circle cx="5" cy="11" r="1.5" fill="#e9a737"/><path d="M7.6 1.6H11V8H13.6L9.3 13.6L5.6 8H7.6Z" fill="#4f7fb2" stroke="#2f4f78" stroke-width="0.7" stroke-linejoin="round"/></svg><svg style="position:absolute;left:153px;top:340px" width="15" height="16" viewBox="0 0 15 16"><path d="M1 3.6H7M2 3.6V13.8" stroke="#9a9a9a" stroke-width="1" fill="none"/><rect x="2.6" y="4.2" width="4.6" height="9.6" fill="#f6f3ea"/><circle cx="5" cy="7" r="1.5" fill="#e9a737"/><circle cx="5" cy="11.6" r="1.5" fill="#e9a737"/><path d="M7.8 13.6H11.2V7.4H13.8L9.5 1.8L5.4 7.4H7.8Z" fill="#4f7fb2" stroke="#2f4f78" stroke-width="0.7" stroke-linejoin="round"/></svg><svg style="position:absolute;left:174px;top:340px" width="15" height="16" viewBox="0 0 15 16"><rect x="1.8" y="2" width="9.6" height="9.4" rx="0.8" fill="#f3f3f3" stroke="#959595" stroke-width="1.2"/><rect x="8.2" y="9.6" width="5.4" height="4.2" rx="1.4" fill="#e8414a"/><path d="M9.4 11.7H12.4" stroke="#fbd5d7" stroke-width="1"/></svg><svg style="position:absolute;left:26.4px;top:365.8px" width="12" height="12" viewBox="0 0 12 12"><rect x="0.5" y="0.5" width="11" height="11" rx="1.5" fill="#fff" stroke="#c9c9c9"/><path d="M2.8 6.2L5 9L9.2 2.8" fill="none" stroke="#111" stroke-width="1.5"/></svg><div style="position:absolute;left:44px;top:370.8px;width:13px;height:1.3px;background:#f0a48a"></div><div style="position:absolute;left:61.3px;top:363.1px;line-height:17px;font-size:13px;font-weight:bold;color:#111;letter-spacing:0.086px;white-space:nowrap;-webkit-text-stroke:0.12px #111;">2022_derval</div><div style="position:absolute;left:280.4px;top:364.6px;width:15px;height:14.4px;border-radius:3px;background:#eeeeee"></div><svg style="position:absolute;left:279.79999999999995px;top:364.2px" width="15.2" height="15.2" viewBox="-8 -8 16 16"><circle cx="0" cy="0" r="4.35" fill="none" stroke="#9a1cae" stroke-width="2.15"/><circle cx="4.9" cy="2.9" r="2.6" fill="#fff"/><circle cx="4.9" cy="2.9" r="1.6" fill="#fff" stroke="#9a1cae" stroke-width="0.9"/></svg><svg style="position:absolute;left:26.4px;top:384px" width="12" height="12" viewBox="0 0 12 12"><rect x="0.5" y="0.5" width="11" height="11" rx="1.5" fill="#fff" stroke="#c9c9c9"/><path d="M2.8 6.2L5 9L9.2 2.8" fill="none" stroke="#111" stroke-width="1.5"/></svg><div style="position:absolute;left:43.8px;top:382.8px;width:13.4px;height:13.2px;background:#93599f;box-shadow:inset 0 0 0 0.9px #5f3c6b"></div><div style="position:absolute;left:62.1px;top:381.3px;line-height:17px;font-size:13px;font-weight:bold;color:#111;letter-spacing:-0.207px;white-space:nowrap;-webkit-text-stroke:0.12px #111;">champs — fields</div><div style="position:absolute;left:280.4px;top:382.8px;width:15px;height:14.4px;border-radius:3px;background:#eeeeee"></div><svg style="position:absolute;left:279.79999999999995px;top:382.4px" width="15.2" height="15.2" viewBox="-8 -8 16 16"><circle cx="0" cy="0" r="4.35" fill="none" stroke="#9a1cae" stroke-width="2.15"/><circle cx="4.9" cy="2.9" r="2.6" fill="#fff"/><circle cx="4.9" cy="2.9" r="1.6" fill="#fff" stroke="#9a1cae" stroke-width="0.9"/></svg><svg style="position:absolute;left:26.4px;top:402.2px" width="12" height="12" viewBox="0 0 12 12"><rect x="0.5" y="0.5" width="11" height="11" rx="1.5" fill="#fff" stroke="#c9c9c9"/><path d="M2.8 6.2L5 9L9.2 2.8" fill="none" stroke="#111" stroke-width="1.5"/></svg><div style="position:absolute;left:43.8px;top:401.0px;width:13.4px;height:13.2px;background:#6f9a6e;box-shadow:inset 0 0 0 0.9px #4a7050"></div><div style="position:absolute;left:62.1px;top:399.5px;line-height:17px;font-size:13px;font-weight:bold;color:#111;letter-spacing:-0.151px;white-space:nowrap;-webkit-text-stroke:0.12px #111;text-decoration:underline;text-decoration-thickness:1.3px;text-underline-offset:2px;">ferme-radius — surrounding</div><div style="position:absolute;left:280.4px;top:401.0px;width:15px;height:14.4px;border-radius:3px;background:#eeeeee"></div><svg style="position:absolute;left:279.79999999999995px;top:400.59999999999997px" width="15.2" height="15.2" viewBox="-8 -8 16 16"><circle cx="0" cy="0" r="4.35" fill="none" stroke="#9a1cae" stroke-width="2.15"/><circle cx="4.9" cy="2.9" r="2.6" fill="#fff"/><circle cx="4.9" cy="2.9" r="1.6" fill="#fff" stroke="#9a1cae" stroke-width="0.9"/></svg></div><div style="position:absolute;left:134.1px;top:702px;width:114.7px;height:11.2px;background:#fff;border:0.8px solid #c6c6c6;border-radius:1.5px"></div><svg style="position:absolute;left:137.5px;top:704.6px" width="6" height="6" viewBox="0 0 6 6"><circle cx="2.4" cy="2.4" r="1.6" fill="none" stroke="#999" stroke-width="0.7"/><path d="M3.6 3.6L5.3 5.3" stroke="#999" stroke-width="0.8"/></svg><div style="position:absolute;left:147px;top:703.1px;line-height:9.2px;font-size:6.2px;font-weight:normal;color:#9a9a9a;letter-spacing:0.107px;white-space:nowrap;">Type to locate (Ctrl+K)</div><div style="position:absolute;left:629.2px;top:703.2px;line-height:9.0px;font-size:6.0px;font-weight:normal;color:#2a2a2a;letter-spacing:-0.326px;white-space:nowrap;">Coordinate</div><div style="position:absolute;left:656.7px;top:702.6px;width:49.6px;height:10px;background:#fff;border:0.8px solid #c6c6c6;border-radius:1.5px"></div><div style="position:absolute;left:660.8px;top:703.4000000000001px;line-height:8.6px;font-size:5.6px;font-weight:normal;color:#2a2a2a;letter-spacing:-0.287px;white-space:nowrap;">47.6811°, -1.7528°</div><svg style="position:absolute;left:707.5px;top:703.7px" width="8" height="8" viewBox="0 0 8 8"><g stroke="#333" stroke-width="0.8" fill="none"><circle cx="4" cy="4" r="2.2"/><path d="M4 0.5V7.5M0.5 4H7.5M1.5 1.5L6.5 6.5M6.5 1.5L1.5 6.5"/></g></svg><div style="position:absolute;left:721px;top:703.2px;line-height:9.0px;font-size:6.0px;font-weight:normal;color:#2a2a2a;letter-spacing:-0.723px;white-space:nowrap;">Scale</div><div style="position:absolute;left:734.3px;top:702.4px;width:41px;height:10.4px;background:#fff;border:0.8px solid #c6c6c6;border-radius:1.5px"></div><div style="position:absolute;left:736.2px;top:703.4000000000001px;line-height:8.6px;font-size:5.6px;font-weight:normal;color:#2a2a2a;letter-spacing:-0.291px;white-space:nowrap;">1:20677</div><div style="position:absolute;left:766px;top:703px;width:0.7px;height:9.2px;background:#d2d2d2"></div><svg style="position:absolute;left:768.8px;top:706.2px" width="4" height="3" viewBox="0 0 4 3"><path d="M0.3 0.4H3.7L2 2.6Z" fill="#333"/></svg><svg style="position:absolute;left:780.2px;top:703.6px" width="6" height="8" viewBox="0 0 6 8"><rect x="0.6" y="3.4" width="4.8" height="4" rx="0.6" fill="#666"/><path d="M1.5 3.6V2.3a1.5 1.5 0 0 1 3 0V3.6" fill="none" stroke="#666" stroke-width="0.9"/></svg><div style="position:absolute;left:790px;top:703.2px;line-height:9.0px;font-size:6.0px;font-weight:normal;color:#2a2a2a;letter-spacing:-0.388px;white-space:nowrap;">Magnifier</div><div style="position:absolute;left:813.6px;top:702.4px;width:39.7px;height:10.4px;background:#fff;border:0.8px solid #c6c6c6;border-radius:1.5px"></div><div style="position:absolute;left:816.2px;top:703.4000000000001px;line-height:8.6px;font-size:5.6px;font-weight:normal;color:#2a2a2a;letter-spacing:-0.628px;white-space:nowrap;">100%</div><div style="position:absolute;left:847.5px;top:703px;width:0.7px;height:9.2px;background:#d2d2d2"></div><svg style="position:absolute;left:848.8px;top:703.6px" width="4" height="8" viewBox="0 0 4 8"><path d="M0.4 3L2 0.8L3.6 3Z M0.4 5L2 7.2L3.6 5Z" fill="#333"/></svg><div style="position:absolute;left:857.8px;top:703.2px;line-height:9.0px;font-size:6.0px;font-weight:normal;color:#2a2a2a;letter-spacing:-0.307px;white-space:nowrap;">Rotation</div><div style="position:absolute;left:881.3px;top:702.4px;width:39.9px;height:10.4px;background:#fff;border:0.8px solid #c6c6c6;border-radius:1.5px"></div><div style="position:absolute;left:883.8px;top:703.4000000000001px;line-height:8.6px;font-size:5.6px;font-weight:normal;color:#2a2a2a;letter-spacing:-0.196px;white-space:nowrap;">0.0 °</div><div style="position:absolute;left:915.3px;top:703px;width:0.7px;height:9.2px;background:#d2d2d2"></div><svg style="position:absolute;left:916.6px;top:703.6px" width="4" height="8" viewBox="0 0 4 8"><path d="M0.4 3L2 0.8L3.6 3Z M0.4 5L2 7.2L3.6 5Z" fill="#333"/></svg><svg style="position:absolute;left:925.4px;top:704.7px" width="6" height="6" viewBox="0 0 6 6"><rect x="0.4" y="0.4" width="5.2" height="5.2" rx="0.7" fill="#fff" stroke="#bdbdbd" stroke-width="0.7"/><path d="M1.4 3.1L2.5 4.4L4.6 1.5" fill="none" stroke="#111" stroke-width="0.9"/></svg><div style="position:absolute;left:933.3px;top:703.2px;line-height:9.0px;font-size:6.0px;font-weight:normal;color:#2a2a2a;letter-spacing:-0.615px;white-space:nowrap;">Render</div><svg style="position:absolute;left:956.2px;top:704.5px" width="6.4" height="6.4" viewBox="0 0 6.4 6.4"><g fill="none" stroke="#6a6a6a" stroke-width="0.55"><circle cx="3.2" cy="3.2" r="2.8" fill="#d8d8d8"/><ellipse cx="3.2" cy="3.2" rx="1.3" ry="2.8"/><path d="M0.4 3.2H6M0.9 1.8H5.5M0.9 4.6H5.5M3.2 0.4V6"/></g></svg><div style="position:absolute;left:963.9px;top:703.2px;line-height:9.0px;font-size:6.0px;font-weight:normal;color:#2a2a2a;letter-spacing:-0.71px;white-space:nowrap;">EPSG:4326</div><svg style="position:absolute;left:998.6px;top:704px" width="8" height="7.5" viewBox="0 0 8 7.5"><ellipse cx="3.9" cy="3.1" rx="3.6" ry="2.7" fill="#2e2e2e"/><path d="M4.6 4.6L6.6 7.2L2.6 5.4Z" fill="#2e2e2e"/><path d="M2 2.5H5.8M2 3.7H5" stroke="#fff" stroke-width="0.55"/></svg><div style="position:absolute;left:306.3px;top:219.60000000000002px;line-height:9.4px;font-size:6.4px;font-weight:normal;color:#2a2a2a;letter-spacing:-0.055px;white-space:nowrap;">Raster</div><div style="position:absolute;left:306.3px;top:227.4px;width:3.6px;height:0.5px;background:#666"></div><div style="position:absolute;left:331.4px;top:219.60000000000002px;line-height:9.4px;font-size:6.4px;font-weight:normal;color:#2a2a2a;letter-spacing:-0.045px;white-space:nowrap;">Database</div><div style="position:absolute;left:331.4px;top:227.4px;width:3.6px;height:0.5px;background:#666"></div><div style="position:absolute;left:365.1px;top:219.60000000000002px;line-height:9.4px;font-size:6.4px;font-weight:normal;color:#2a2a2a;letter-spacing:-0.01px;white-space:nowrap;">Web</div><div style="position:absolute;left:365.1px;top:227.4px;width:3.6px;height:0.5px;background:#666"></div><div style="position:absolute;left:384.2px;top:219.60000000000002px;line-height:9.4px;font-size:6.4px;font-weight:normal;color:#2a2a2a;letter-spacing:-0.06px;white-space:nowrap;">Mesh</div><div style="position:absolute;left:384.2px;top:227.4px;width:3.6px;height:0.5px;background:#666"></div><div style="position:absolute;left:405.9px;top:219.60000000000002px;line-height:9.4px;font-size:6.4px;font-weight:normal;color:#2a2a2a;letter-spacing:-0.032px;white-space:nowrap;">Processing</div><div style="position:absolute;left:417.09999999999997px;top:227.4px;width:3.6px;height:0.5px;background:#666"></div><div style="position:absolute;left:443.5px;top:219.60000000000002px;line-height:9.4px;font-size:6.4px;font-weight:normal;color:#2a2a2a;letter-spacing:0.086px;white-space:nowrap;">Help</div><div style="position:absolute;left:443.5px;top:227.4px;width:3.6px;height:0.5px;background:#666"></div><svg style="position:absolute;left:301.6px;top:232.4px" width="10.8" height="10.8" viewBox="0 0 10 10"><circle cx="5.9" cy="4.1" r="3.5" fill="#f3efc8" stroke="#8a8a8a" stroke-width="0.8"/><path d="M3.2 6.8L1 9.2" stroke="#b98a3c" stroke-width="1.6" stroke-linecap="round"/><path d="M4.3 4H7.3M5.8 2.5V5.5" stroke="#777" stroke-width="0.7"/></svg><svg style="position:absolute;left:315.8px;top:232.4px" width="10.8" height="10.8" viewBox="0 0 10 10"><circle cx="5.9" cy="4.1" r="3.5" fill="#eef0ee" stroke="#8a8a8a" stroke-width="0.8"/><path d="M3.2 6.8L1 9.2" stroke="#b98a3c" stroke-width="1.6" stroke-linecap="round"/><path d="M4.3 4H7.3" stroke="#777" stroke-width="0.7"/></svg><svg style="position:absolute;left:329.9px;top:232.4px" width="10.8" height="10.8" viewBox="0 0 10 10"><circle cx="5.9" cy="4.1" r="3.5" fill="#f1f1f1" stroke="#cfcfcf" stroke-width="0.8"/><path d="M3.2 6.8L1 9.2" stroke="#d6d6d6" stroke-width="1.6" stroke-linecap="round"/></svg><svg style="position:absolute;left:344.8px;top:232.4px" width="10.8" height="10.8" viewBox="0 0 10 10"><circle cx="5.9" cy="4.1" r="3.5" fill="#f6f6f6" stroke="#777" stroke-width="0.8"/><path d="M3.2 6.8L1 9.2" stroke="#b98a3c" stroke-width="1.6" stroke-linecap="round"/><rect x="5" y="5.2" width="4.4" height="4.2" fill="#3d6fa8"/><path d="M8.4 6.2L6.4 7.3L8.4 8.4Z" fill="#fff"/></svg><svg style="position:absolute;left:358.9px;top:232.4px" width="10.8" height="10.8" viewBox="0 0 10 10"><circle cx="5.9" cy="4.1" r="3.5" fill="#f4f4f4" stroke="#d2d2d2" stroke-width="0.8"/><path d="M3.2 6.8L1 9.2" stroke="#dcdcdc" stroke-width="1.6" stroke-linecap="round"/><rect x="5" y="5.4" width="4.2" height="3.8" fill="#f4f4f4" stroke="#d2d2d2" stroke-width="0.7"/></svg><svg style="position:absolute;left:373.0px;top:232.4px" width="10.8" height="10.8" viewBox="0 0 10 10"><rect x="1.2" y="0.8" width="6.4" height="7.6" fill="#e9e9e9" stroke="#8c8c8c" stroke-width="0.8"/><rect x="4.8" y="5" width="4.4" height="4.2" fill="#e8c63a" stroke="#b6962a" stroke-width="0.5"/></svg><svg style="position:absolute;left:387.9px;top:232.4px" width="10.8" height="10.8" viewBox="0 0 10 10"><path d="M0.8 5.2L3.5 2.2H8.2L6 5.2Z" fill="#c9c9c9" stroke="#9d9d9d" stroke-width="0.5"/><path d="M0.8 6.8L3.5 3.8H8.2L6 6.8Z" fill="#b9b9b9" stroke="#9d9d9d" stroke-width="0.5"/><rect x="5" y="5.2" width="4.3" height="4" fill="#e8c63a" stroke="#b6962a" stroke-width="0.5"/></svg><svg style="position:absolute;left:402.1px;top:232.4px" width="10.8" height="10.8" viewBox="0 0 10 10"><path d="M1.6 0.8H5.8V8.6L3.7 7L1.6 8.6Z" fill="#4d83bd" stroke="#2f5f96" stroke-width="0.5"/><rect x="4.8" y="5.2" width="4.4" height="4" fill="#e8c63a" stroke="#b6962a" stroke-width="0.5"/></svg><svg style="position:absolute;left:415.4px;top:232.4px" width="10.8" height="10.8" viewBox="0 0 10 10"><rect x="1" y="1" width="8" height="7.6" fill="#e4e4e4" stroke="#9a9a9a" stroke-width="0.8"/><path d="M4 1V8.6" stroke="#9a9a9a" stroke-width="0.6"/><path d="M5.6 1H8V4.6L6.8 3.7L5.6 4.6Z" fill="#4d83bd"/></svg><svg style="position:absolute;left:429.5px;top:232.4px" width="10.8" height="10.8" viewBox="0 0 10 10"><circle cx="5" cy="5" r="4" fill="#fafafa" stroke="#6e6e6e" stroke-width="0.9"/><path d="M5 2.4V5L6.8 6.2" fill="none" stroke="#555" stroke-width="0.8"/></svg><svg style="position:absolute;left:443.6px;top:232.4px" width="10.8" height="10.8" viewBox="0 0 10 10"><path d="M1.2 4.4A3.8 3.8 0 0 1 8 2.6L9 1.4V4.6H5.9L7 3.5A2.5 2.5 0 0 0 2.6 4.4Z" fill="#3a7dc8"/><path d="M8.8 5.6A3.8 3.8 0 0 1 2 7.4L1 8.6V5.4H4.1L3 6.5A2.5 2.5 0 0 0 7.4 5.6Z" fill="#3a7dc8"/></svg><div style="position:absolute;left:458.6px;top:233.3px;width:0.7px;height:8px;background:#e6e6e6"></div><svg style="position:absolute;left:464.9px;top:232.4px" width="10.8" height="10.8" viewBox="0 0 10 10"><rect x="0.6" y="0.8" width="8" height="7.4" fill="#efe05a" stroke="#8a8a8a" stroke-width="0.8" stroke-dasharray="1.2 0.6"/><path d="M5 3.8L9 6.6L7.4 6.9L8.4 9L7.6 9.4L6.7 7.3L5.4 8.4Z" fill="#fff" stroke="#333" stroke-width="0.5"/></svg><svg style="position:absolute;left:478.3px;top:237.0px" width="2.8" height="1.8" viewBox="0 0 2.8 1.8"><path d="M0.1 0.1H2.7L1.4 1.7Z" fill="#333"/></svg><svg style="position:absolute;left:484.5px;top:232.4px" width="10.8" height="10.8" viewBox="0 0 10 10"><rect x="1" y="1.2" width="6" height="4.6" fill="#d9d9d9" stroke="#8a8a8a" stroke-width="0.7"/><path d="M1 3H7" stroke="#8a8a8a" stroke-width="0.6"/><rect x="3" y="4.2" width="6" height="4.6" fill="#ebd84e" stroke="#b3a032" stroke-width="0.6"/></svg><svg style="position:absolute;left:497.9px;top:237.0px" width="2.8" height="1.8" viewBox="0 0 2.8 1.8"><path d="M0.1 0.1H2.7L1.4 1.7Z" fill="#333"/></svg><svg style="position:absolute;left:503.9px;top:232.4px" width="10.8" height="10.8" viewBox="0 0 10 10"><rect x="0.6" y="1" width="6" height="5.2" rx="0.6" fill="#ebd84e" stroke="#b3a032" stroke-width="0.6"/><rect x="2.6" y="3" width="6" height="5.2" rx="0.6" fill="#ebd84e" stroke="#b3a032" stroke-width="0.6"/><rect x="5.2" y="5.6" width="4.2" height="4" rx="0.6" fill="#fff" stroke="#d13a32" stroke-width="0.7"/><path d="M6.2 6.6L8.4 8.6M8.4 6.6L6.2 8.6" stroke="#d13a32" stroke-width="0.7"/></svg><svg style="position:absolute;left:516.9px;top:237.0px" width="2.8" height="1.8" viewBox="0 0 2.8 1.8"><path d="M0.1 0.1H2.7L1.4 1.7Z" fill="#333"/></svg><svg style="position:absolute;left:523.3px;top:232.4px" width="10.8" height="10.8" viewBox="0 0 10 10"><rect x="0.8" y="0.8" width="6.6" height="6.2" fill="#efe05a" stroke="#b3a032" stroke-width="0.6"/><path d="M7.6 5.2a1.5 1.5 0 0 1 1.5 1.5c0 1.1-1.5 2.9-1.5 2.9s-1.5-1.8-1.5-2.9a1.5 1.5 0 0 1 1.5-1.5Z" fill="#3f82c4"/><circle cx="7.6" cy="6.7" r="0.5" fill="#fff"/></svg><svg style="position:absolute;left:536.3px;top:237.0px" width="2.8" height="1.8" viewBox="0 0 2.8 1.8"><path d="M0.1 0.1H2.7L1.4 1.7Z" fill="#333"/></svg><div style="position:absolute;left:545.2px;top:233.3px;width:0.7px;height:8px;background:#e6e6e6"></div><svg style="position:absolute;left:548.8px;top:232.4px" width="10.8" height="10.8" viewBox="0 0 10 10"><circle cx="4.2" cy="4.2" r="3.6" fill="#3f78b8"/><path d="M4.2 3.6V6.4" stroke="#fff" stroke-width="1.1"/><circle cx="4.2" cy="2.2" r="0.65" fill="#fff"/><path d="M6.6 6.2L9.2 8.2L8 8.3L8.5 9.5L7.9 9.7L7.4 8.6L6.6 9.3Z" fill="#fff" stroke="#444" stroke-width="0.4"/></svg><svg style="position:absolute;left:563.1px;top:232.4px" width="10.8" height="10.8" viewBox="0 0 10 10"><rect x="0.8" y="1.6" width="8.4" height="7.4" fill="#fff" stroke="#777" stroke-width="0.7"/><path d="M0.8 3.4H9.2M0.8 5.2H9.2M0.8 7H9.2M3.6 1.6V9M6.4 1.6V9" stroke="#7d9a7d" stroke-width="0.5"/><path d="M0.8 1.2H9.2" stroke="#c0392b" stroke-width="1"/><path d="M0.8 8.8H9.2" stroke="#333" stroke-width="0.8"/></svg><svg style="position:absolute;left:577.4px;top:232.4px" width="10.8" height="10.8" viewBox="0 0 10 10"><g stroke="#3f82c4" stroke-width="1.5" stroke-linecap="round"><path d="M5 0.9V9.1M0.9 5H9.1M2.1 2.1L7.9 7.9M7.9 2.1L2.1 7.9"/></g><circle cx="5" cy="5" r="2.4" fill="#3f82c4"/><circle cx="5" cy="5" r="0.9" fill="#cfe0f2"/></svg><div style="position:absolute;left:593.2px;top:231.60000000000002px;font-size:11.5px;line-height:12px;font-weight:bold;color:#941a9c;font-family:'Liberation Serif',serif">Σ</div><svg style="position:absolute;left:605.7px;top:232.4px" width="10.8" height="10.8" viewBox="0 0 10 10"><rect x="0.8" y="0.8" width="8.4" height="8.4" fill="#cfe0f2" stroke="#5a8cc0" stroke-width="0.7"/><path d="M0.8 2.8H9.2" stroke="#5a8cc0" stroke-width="1.4"/><path d="M3.6 0.8V9.2M6.4 0.8V9.2" stroke="#5a8cc0" stroke-width="0.6"/></svg><svg style="position:absolute;left:619.1px;top:237.0px" width="2.8" height="1.8" viewBox="0 0 2.8 1.8"><path d="M0.1 0.1H2.7L1.4 1.7Z" fill="#333"/></svg><svg style="position:absolute;left:624.9px;top:232.4px" width="10.8" height="10.8" viewBox="0 0 10 10"><rect x="0.4" y="2.6" width="9.2" height="1.8" fill="#8a8a8a"/><rect x="0.4" y="5" width="9.2" height="2.8" fill="#d4d4d4" stroke="#7a7a7a" stroke-width="0.6"/><path d="M2 5V6.3M3.6 5V6.3M5.2 5V6.3M6.8 5V6.3M8.4 5V6.3" stroke="#666" stroke-width="0.4"/></svg><svg style="position:absolute;left:638.6px;top:237.0px" width="2.8" height="1.8" viewBox="0 0 2.8 1.8"><path d="M0.1 0.1H2.7L1.4 1.7Z" fill="#333"/></svg><svg style="position:absolute;left:644.5px;top:232.4px" width="10.8" height="10.8" viewBox="0 0 10 10"><rect x="0.8" y="0.8" width="8.6" height="5.8" rx="1.6" fill="#f0e06a" stroke="#c7b43c" stroke-width="0.6"/><path d="M2.6 6.4L2 8.6L4.6 6.4Z" fill="#f0e06a" stroke="#c7b43c" stroke-width="0.5"/><circle cx="2.4" cy="8.4" r="1.1" fill="#4aa14a"/></svg><svg style="position:absolute;left:658.2px;top:232.4px" width="10.8" height="10.8" viewBox="0 0 10 10"><circle cx="4" cy="4" r="3" fill="#f1f1f1" stroke="#cfcfcf" stroke-width="0.9"/><path d="M6.2 6.2L9 9" stroke="#cfcfcf" stroke-width="1.5" stroke-linecap="round"/></svg><svg style="position:absolute;left:671.8px;top:237.0px" width="2.8" height="1.8" viewBox="0 0 2.8 1.8"><path d="M0.1 0.1H2.7L1.4 1.7Z" fill="#c8c8c8"/></svg><div style="position:absolute;left:302.6px;top:254.0px;width:1.6px;height:0.7px;background:#bbb"></div><svg style="position:absolute;left:307.9px;top:248.9px" width="10.8" height="10.8" viewBox="0 0 10 10"><rect x="0.8" y="1.2" width="6.4" height="3.6" rx="1.6" fill="none" stroke="#d0d0d0" stroke-width="0.9"/><path d="M5.6 4.8V6.4" stroke="#d0d0d0" stroke-width="0.8"/><circle cx="6.6" cy="7.4" r="1.8" fill="#f4f4f4" stroke="#d0d0d0" stroke-width="0.8"/></svg><svg style="position:absolute;left:322.4px;top:248.9px" width="10.8" height="10.8" viewBox="0 0 10 10"><path d="M1 8.6L3.6 1.6L5 5.4L7.8 3.6L6.6 8.6" fill="none" stroke="#d0d0d0" stroke-width="0.9"/><path d="M5.2 6L8.8 9" stroke="#d0d0d0" stroke-width="0.9"/></svg><svg style="position:absolute;left:334.8px;top:253.5px" width="2.8" height="1.8" viewBox="0 0 2.8 1.8"><path d="M0.1 0.1H2.7L1.4 1.7Z" fill="#c8c8c8"/></svg><svg style="position:absolute;left:340.6px;top:248.9px" width="10.8" height="10.8" viewBox="0 0 10 10"><rect x="1" y="1" width="8" height="8" fill="#e6e6e6" stroke="#d0d0d0" stroke-width="0.8"/><path d="M1 4H9M1 6.6H9M3.8 1V9M6.4 1V9" stroke="#d0d0d0" stroke-width="0.6"/><path d="M2 8.4L8.6 1.6" stroke="#c4c4c4" stroke-width="1.2"/></svg><svg style="position:absolute;left:355.0px;top:248.9px" width="10.8" height="10.8" viewBox="0 0 10 10"><path d="M1.8 3H8.2L7.6 9H2.4Z" fill="#ececec" stroke="#d0d0d0" stroke-width="0.8"/><path d="M1 2.6H9M3.6 1.2H6.4M3.8 4.2V7.8M5 4.2V7.8M6.2 4.2V7.8" stroke="#d0d0d0" stroke-width="0.8"/></svg><svg style="position:absolute;left:368.7px;top:248.9px" width="10.8" height="10.8" viewBox="0 0 10 10"><path d="M0.8 2.4L7 6.2M0.8 6.6L7 3" stroke="#d0d0d0" stroke-width="0.9"/><circle cx="8" cy="2.6" r="1.1" fill="none" stroke="#d0d0d0" stroke-width="0.7"/><circle cx="8" cy="6.8" r="1.1" fill="none" stroke="#d0d0d0" stroke-width="0.7"/></svg><svg style="position:absolute;left:382.4px;top:248.9px" width="10.8" height="10.8" viewBox="0 0 10 10"><path d="M2 1H6L8 3V9H2Z" fill="#f2f2f2" stroke="#d0d0d0" stroke-width="0.8"/><path d="M6 1V3H8" fill="none" stroke="#d0d0d0" stroke-width="0.6"/></svg><svg style="position:absolute;left:396.9px;top:248.9px" width="10.8" height="10.8" viewBox="0 0 10 10"><rect x="1.6" y="1.6" width="6.8" height="7.6" fill="#f2f2f2" stroke="#d0d0d0" stroke-width="0.8"/><rect x="3.4" y="0.6" width="3.2" height="1.8" fill="#d0d0d0"/><rect x="3" y="3.6" width="4" height="4.4" fill="none" stroke="#d0d0d0" stroke-width="0.6"/></svg><svg style="position:absolute;left:411.8px;top:248.9px" width="10.8" height="10.8" viewBox="0 0 10 10"><path d="M4.2 1.6L1.2 4.2L4.2 6.8V5.2C6.6 5 7.6 6.4 7.2 8.6C9.4 6 8 3.2 4.2 3.2Z" fill="#d0d0d0"/></svg><svg style="position:absolute;left:425.7px;top:248.9px" width="10.8" height="10.8" viewBox="0 0 10 10"><path d="M5.8 1.6L8.8 4.2L5.8 6.8V5.2C3.4 5 2.4 6.4 2.8 8.6C0.6 6 2 3.2 5.8 3.2Z" fill="#d0d0d0"/></svg><div style="position:absolute;left:442.7px;top:249.8px;width:0.7px;height:8px;background:#e6e6e6"></div><svg style="position:absolute;left:446.0px;top:248.3px" width="10.8" height="10.8" viewBox="0 0 10 10"><path d="M1.6 2.6H9.4V6.6H1.6L0.2 4.6Z" fill="#ecd83c" stroke="#b9a52c" stroke-width="0.5"/><path d="M3 4.6H8" stroke="#6a5e1a" stroke-width="1.2" stroke-dasharray="1.1 0.5"/></svg><svg style="position:absolute;left:460.9px;top:248.9px" width="10.8" height="10.8" viewBox="0 0 10 10"><circle cx="3" cy="3" r="2.4" fill="#e0a020"/><circle cx="5.6" cy="4" r="2.4" fill="#c0392b"/><circle cx="4" cy="6" r="2.4" fill="#3a9a3a"/><rect x="5.6" y="6" width="3.6" height="3.6" fill="#222"/><rect x="6.4" y="6.8" width="2" height="2" fill="#3a9a3a"/></svg><div style="position:absolute;left:474.6px;top:249.8px;width:0.7px;height:8px;background:#e6e6e6"></div><svg style="position:absolute;left:478.2px;top:248.7px" width="10.8" height="10.8" viewBox="0 0 10 10"><path d="M1.8 2H9.2V5.6H1.8L0.4 3.8Z" fill="#5a90cc" stroke="#3a6da8" stroke-width="0.5"/><path d="M3 3.8H8" stroke="#e8eef6" stroke-width="1" stroke-dasharray="1.1 0.5"/><circle cx="7.6" cy="7.4" r="1.9" fill="#b51f1f"/></svg><svg style="position:absolute;left:491.7px;top:248.3px" width="10.8" height="10.8" viewBox="0 0 10 10"><path d="M1.8 2.6H9.6V6.6H1.8L0.2 4.6Z" fill="#e24a4a" stroke="#b62d2d" stroke-width="0.5"/><path d="M3.2 4.6H8.4" stroke="#fbe4e4" stroke-width="1.2" stroke-dasharray="1.1 0.5"/></svg><svg style="position:absolute;left:509.2px;top:248.9px" width="10.8" height="10.8" viewBox="0 0 10 10"><path d="M1 3.2H7V6.2H1L-0.2 4.7Z" fill="#d0d0d0" transform="translate(0.8 -0.6)"/><rect x="5.4" y="5.2" width="3.4" height="3.4" rx="0.6" fill="#f4f4f4" stroke="#d0d0d0" stroke-width="0.7"/></svg><svg style="position:absolute;left:523.4px;top:248.9px" width="10.8" height="10.8" viewBox="0 0 10 10"><path d="M1 3.2H7V6.2H1L-0.2 4.7Z" fill="#d0d0d0" transform="translate(0.8 -0.6)"/><rect x="5.4" y="5.2" width="3.4" height="3.4" rx="0.6" fill="#f4f4f4" stroke="#d0d0d0" stroke-width="0.7"/></svg><svg style="position:absolute;left:537.8px;top:248.9px" width="10.8" height="10.8" viewBox="0 0 10 10"><path d="M1 3.2H7V6.2H1L-0.2 4.7Z" fill="#d0d0d0" transform="translate(0.8 -0.6)"/><rect x="5.4" y="5.2" width="3.4" height="3.4" rx="0.6" fill="#f4f4f4" stroke="#d0d0d0" stroke-width="0.7"/></svg><svg style="position:absolute;left:552.0px;top:248.9px" width="10.8" height="10.8" viewBox="0 0 10 10"><path d="M1 3.2H7V6.2H1L-0.2 4.7Z" fill="#d0d0d0" transform="translate(0.8 -0.6)"/><rect x="5.4" y="5.2" width="3.4" height="3.4" rx="0.6" fill="#f4f4f4" stroke="#d0d0d0" stroke-width="0.7"/></svg><svg style="position:absolute;left:566.2px;top:248.9px" width="10.8" height="10.8" viewBox="0 0 10 10"><path d="M1 3.2H7V6.2H1L-0.2 4.7Z" fill="#d0d0d0" transform="translate(0.8 -0.6)"/><rect x="5.4" y="5.2" width="3.4" height="3.4" rx="0.6" fill="#f4f4f4" stroke="#d0d0d0" stroke-width="0.7"/></svg><div style="position:absolute;left:582px;top:249.8px;width:0.7px;height:8px;background:#e6e6e6"></div><svg style="position:absolute;left:587.2px;top:248.8px" width="11" height="11" viewBox="0 0 10 10"><circle cx="5" cy="4.2" r="4" fill="#4a6f9a" stroke="#2d4765" stroke-width="0.5"/><path d="M2.4 2.4C3.6 1.6 4.6 2.8 3.8 3.8C3 4.6 2 4 2.4 2.4ZM5.6 2C7 1.6 8 2.8 7.4 4C6.6 4.8 5.4 3.6 5.6 2Z" fill="#9ec2e6"/><circle cx="3" cy="7.4" r="1.9" fill="#111"/><circle cx="7" cy="7.4" r="1.9" fill="#111"/><rect x="3" y="5.4" width="4" height="2" fill="#111"/><circle cx="3" cy="7.6" r="0.8" fill="#fff"/><circle cx="7" cy="7.6" r="0.8" fill="#fff"/></svg><div style="position:absolute;left:603.2px;top:249.8px;width:0.7px;height:8px;background:#e6e6e6"></div><svg style="position:absolute;left:608.5px;top:248.9px" width="10.8" height="10.8" viewBox="0 0 10 10"><path d="M4.8 0.6C3 0.6 3 1.4 3 2.2V3.2H5V3.6H2C0.8 3.6 0.6 4.6 0.6 5.4C0.6 6.4 1 7 2 7H2.8V5.8C2.8 5 3.4 4.4 4.2 4.4H6C6.6 4.4 7 4 7 3.4V2.2C7 1.2 6.2 0.6 4.8 0.6Z" fill="#3a76b0"/><path d="M5.2 9.4C7 9.4 7 8.6 7 7.8V6.8H5V6.4H8C9.2 6.4 9.4 5.4 9.4 4.6C9.4 3.6 9 3 8 3H7.2V4.2C7.2 5 6.6 5.6 5.8 5.6H4C3.4 5.6 3 6 3 6.6V7.8C3 8.8 3.8 9.4 5.2 9.4Z" fill="#f2c53d"/></svg><svg style="position:absolute;left:622.3px;top:248.9px" width="10.8" height="10.8" viewBox="0 0 10 10"><g fill="none" stroke="#111" stroke-width="1.15" stroke-linecap="round" stroke-linejoin="round"><path d="M1.3 5a3.7 3.7 0 0 1 3.7-3.7 4 4 0 0 1 2.8 1.1L8.7 3.3"/><path d="M8.7 1.3v2h-2"/><path d="M8.7 5a3.7 3.7 0 0 1-3.7 3.7 4 4 0 0 1-2.8-1.1L1.3 6.7"/><path d="M3.3 6.7h-2v2"/></g></svg><svg style="position:absolute;left:636.8px;top:248.9px" width="10.8" height="10.8" viewBox="0 0 10 10"><g fill="none" stroke="#111" stroke-width="1.05" stroke-linejoin="round"><path d="M1.6 0.8V7.4H5.4M1.6 3.2H5.4"/><rect x="5.6" y="1.8" width="3.2" height="2.6" rx="0.5"/><rect x="5.6" y="6" width="3.2" height="2.6" rx="0.5"/></g></svg><svg style="position:absolute;left:650.6px;top:248.9px" width="10.8" height="10.8" viewBox="0 0 10 10"><g fill="none" stroke="#111" stroke-width="1.05" stroke-linejoin="round"><path d="M4.2 0.9H5.8L6.1 2.1L7 2.6L8.2 2.2L9 3.6L8.1 4.5V5.5L9 6.4L8.2 7.8L7 7.4L6.1 7.9L5.8 9.1H4.2L3.9 7.9L3 7.4L1.8 7.8L1 6.4L1.9 5.5V4.5L1 3.6L1.8 2.2L3 2.6L3.9 2.1Z"/><circle cx="5" cy="5" r="1.4"/></g></svg><div style="position:absolute;left:668.7px;top:249.8px;width:0.7px;height:8px;background:#e6e6e6"></div><svg style="position:absolute;left:671.9px;top:248.9px" width="10.8" height="10.8" viewBox="0 0 10 10"><rect x="1" y="0.8" width="8" height="8.6" fill="#2f5f96" stroke="#1d3f68" stroke-width="0.5"/><rect x="1" y="0.8" width="1.6" height="8.6" fill="#1d3f68"/><path d="M4.6 3.2C4.8 2 7 2 7 3.4C7 4.4 5.8 4.4 5.8 5.6M5.8 6.8V7.4" fill="none" stroke="#cfe0f2" stroke-width="0.9"/></svg><div style="position:absolute;left:689px;top:249.8px;width:0.7px;height:8px;background:#e6e6e6"></div><div class="abs" style="left:9px;top:0px;width:293px;height:453px;background:#efefef;box-shadow:0 0 8px 1px rgba(0,0,10,.105)"></div><div class="abs" style="left:9px;top:0px;width:293px;height:2px;background:#f4f4f4;border-bottom:0.8px solid #d9d9d9"></div><div class="abs" style="left:24px;top:0px;width:12px;height:0.8px;background:repeating-linear-gradient(90deg,#333 0 2px,transparent 2px 3.2px)"></div><div class="abs" style="left:95px;top:0px;width:0.8px;height:2px;background:#cfcfcf"></div><div class="abs" style="left:290px;top:0px;width:0.8px;height:2px;background:#cfcfcf"></div><div class="abs" style="left:301px;top:61px;width:1px;height:392px;background:#d6d8d8"></div><div style="position:absolute;left:9.0px;top:7.800000000000001px;line-height:17px;font-size:13px;font-weight:normal;color:#1b1b1b;letter-spacing:0.076px;white-space:nowrap;-webkit-text-stroke:0.22px #1b1b1b;">MapHub Browser</div><svg style="position:absolute;left:278.6px;top:10.8px" width="10" height="10" viewBox="0 0 10 10" fill="none" stroke="#8a8a8a" stroke-width="1.1"><rect x="0.55" y="0.55" width="8.9" height="8.9" rx="2" fill="#f4f4f4"/><path d="M3.2 5.2L5.4 2.6L7.6 4.6" stroke-width="0.9"/><circle cx="4.2" cy="5.9" r="1.7" fill="#fff" stroke-width="0.9"/></svg><svg style="position:absolute;left:290.8px;top:10.8px" width="10" height="10" viewBox="0 0 10 10" fill="none" stroke="#8a8a8a" stroke-width="1.1"><rect x="0.55" y="0.55" width="8.9" height="8.9" rx="2" fill="#f4f4f4"/><path d="M2.9 2.9L7.1 7.1M7.1 2.9L2.9 7.1" stroke="#3c3c3c" stroke-width="1.35"/></svg><div class="abs" style="left:214.3px;top:29.5px;width:57.4px;height:22px;border:1px solid #bdbdbd;border-radius:3px;background:linear-gradient(#fcfcfc,#ececec)"></div><div style="position:absolute;left:219.8px;top:32.3px;line-height:17px;font-size:13px;font-weight:normal;color:#1b1b1b;letter-spacing:0.01px;white-space:nowrap;-webkit-text-stroke:0.22px #1b1b1b;">Refresh</div><div class="abs" style="left:277px;top:30.3px;width:21px;height:20.4px;border:1px solid #bdbdbd;border-radius:3px;background:linear-gradient(#fcfcfc,#ececec)"></div><svg style="position:absolute;left:280.3px;top:33.3px" width="14.4" height="14.4" viewBox="0 0 24 24" fill="none" stroke="#111" stroke-width="2.1" stroke-linecap="round" stroke-linejoin="round"><path d="M3 12a9 9 0 0 1 9-9 9.75 9.75 0 0 1 6.74 2.74L21 8"/><path d="M21 3v5h-5"/><path d="M21 12a9 9 0 0 1-9 9 9.75 9.75 0 0 1-6.74-2.74L3 16"/><path d="M8 16H3v5"/></svg><div class="abs" style="left:9px;top:61.4px;width:293px;height:249.6px;background:#fff;border-top:1px solid #d0d0d0;border-bottom:1px solid #cfcfcf"></div><div class="abs" style="left:43.3px;top:62px;width:258.2px;height:17.8px;background:#e3f0fa;border:1px solid #b5d3ea"></div><svg style="position:absolute;left:12.200000000000001px;top:70.4px" width="7" height="4" viewBox="0 0 7 4"><path d="M0.2 0.3L6.8 0.3L3.5 3.8Z" fill="#444"/></svg><svg style="position:absolute;left:26.0px;top:63.3px" width="14.4" height="14.4" viewBox="0 0 24 24" fill="none" stroke="#1a1a1a" stroke-width="2.2" stroke-linecap="round" stroke-linejoin="round"><path d="M6 22V4a2 2 0 0 1 2-2h8a2 2 0 0 1 2 2v18Z"/><path d="M6 12H4a2 2 0 0 0-2 2v6a2 2 0 0 0 2 2h2"/><path d="M18 9h2a2 2 0 0 1 2 2v9a2 2 0 0 1-2 2h-2"/><path d="M10 6h4"/><path d="M10 10h4"/><path d="M10 14h4"/><path d="M10 18h4"/></svg><div style="position:absolute;left:45.0px;top:63.0px;line-height:17px;font-size:13px;font-weight:normal;color:#1b1b1b;letter-spacing:0.462px;white-space:nowrap;-webkit-text-stroke:0.22px #1b1b1b;">Meteory</div><svg style="position:absolute;left:30.300000000000004px;top:85.9px" width="5" height="7" viewBox="0 0 5 7"><path d="M0.5 0.3L4.4 3.5L0.5 6.7Z" fill="#444"/></svg><svg style="position:absolute;left:43.3px;top:81.5px" width="14.4" height="14.4" viewBox="0 0 24 24" fill="none" stroke="#1a1a1a" stroke-width="2.2" stroke-linecap="round" stroke-linejoin="round"><path d="M20 20a2 2 0 0 0 2-2V8a2 2 0 0 0-2-2h-7.9a2 2 0 0 1-1.69-.9L9.6 3.9A2 2 0 0 0 7.93 3H4a2 2 0 0 0-2 2v13a2 2 0 0 0 2 2Z"/></svg><div style="position:absolute;left:62.3px;top:81.2px;line-height:17px;font-size:13px;font-weight:normal;color:#1b1b1b;letter-spacing:0.178px;white-space:nowrap;-webkit-text-stroke:0.22px #1b1b1b;">Demo</div><svg style="position:absolute;left:30.300000000000004px;top:104.10000000000001px" width="5" height="7" viewBox="0 0 5 7"><path d="M0.5 0.3L4.4 3.5L0.5 6.7Z" fill="#444"/></svg><svg style="position:absolute;left:43.3px;top:99.7px" width="14.4" height="14.4" viewBox="0 0 24 24" fill="none" stroke="#1a1a1a" stroke-width="2.2" stroke-linecap="round" stroke-linejoin="round"><path d="M20 20a2 2 0 0 0 2-2V8a2 2 0 0 0-2-2h-7.9a2 2 0 0 1-1.69-.9L9.6 3.9A2 2 0 0 0 7.93 3H4a2 2 0 0 0-2 2v13a2 2 0 0 0 2 2Z"/></svg><div style="position:absolute;left:62.3px;top:99.4px;line-height:17px;font-size:13px;font-weight:normal;color:#1b1b1b;letter-spacing:-0.076px;white-space:nowrap;-webkit-text-stroke:0.22px #1b1b1b;">Global variables</div><svg style="position:absolute;left:30.300000000000004px;top:122.3px" width="5" height="7" viewBox="0 0 5 7"><path d="M0.5 0.3L4.4 3.5L0.5 6.7Z" fill="#444"/></svg><svg style="position:absolute;left:43.3px;top:117.89999999999999px" width="14.4" height="14.4" viewBox="0 0 24 24" fill="none" stroke="#1a1a1a" stroke-width="2.2" stroke-linecap="round" stroke-linejoin="round"><path d="M20 20a2 2 0 0 0 2-2V8a2 2 0 0 0-2-2h-7.9a2 2 0 0 1-1.69-.9L9.6 3.9A2 2 0 0 0 7.93 3H4a2 2 0 0 0-2 2v13a2 2 0 0 0 2 2Z"/></svg><div style="position:absolute;left:62.3px;top:117.6px;line-height:17px;font-size:13px;font-weight:normal;color:#1b1b1b;letter-spacing:0.016px;white-space:nowrap;-webkit-text-stroke:0.22px #1b1b1b;">Help Stijn</div><svg style="position:absolute;left:30.300000000000004px;top:140.5px" width="5" height="7" viewBox="0 0 5 7"><path d="M0.5 0.3L4.4 3.5L0.5 6.7Z" fill="#444"/></svg><svg style="position:absolute;left:43.3px;top:136.10000000000002px" width="14.4" height="14.4" viewBox="0 0 24 24" fill="none" stroke="#1a1a1a" stroke-width="2.2" stroke-linecap="round" stroke-linejoin="round"><path d="M18 8c0 3.613-3.869 7.429-5.393 8.795a1 1 0 0 1-1.214 0C9.87 15.429 6 11.613 6 8a6 6 0 0 1 12 0"/><circle cx="12" cy="8" r="2"/><path d="M8.714 14h-3.71a1 1 0 0 0-.948.683l-2.004 6A1 1 0 0 0 3 22h18a1 1 0 0 0 .948-1.316l-2-6a1 1 0 0 0-.949-.684h-3.712"/></svg><div style="position:absolute;left:62.3px;top:135.8px;line-height:17px;font-size:13px;font-weight:normal;color:#1b1b1b;letter-spacing:0.305px;white-space:nowrap;-webkit-text-stroke:0.22px #1b1b1b;">myproject</div><svg style="position:absolute;left:30.300000000000004px;top:158.7px" width="5" height="7" viewBox="0 0 5 7"><path d="M0.5 0.3L4.4 3.5L0.5 6.7Z" fill="#444"/></svg><svg style="position:absolute;left:43.3px;top:154.3px" width="14.4" height="14.4" viewBox="0 0 24 24" fill="none" stroke="#1a1a1a" stroke-width="2.2" stroke-linecap="round" stroke-linejoin="round"><path d="M20 20a2 2 0 0 0 2-2V8a2 2 0 0 0-2-2h-7.9a2 2 0 0 1-1.69-.9L9.6 3.9A2 2 0 0 0 7.93 3H4a2 2 0 0 0-2 2v13a2 2 0 0 0 2 2Z"/></svg><div style="position:absolute;left:62.3px;top:154.0px;line-height:17px;font-size:13px;font-weight:normal;color:#1b1b1b;letter-spacing:0.054px;white-space:nowrap;-webkit-text-stroke:0.22px #1b1b1b;">Projects</div><svg style="position:absolute;left:29.1px;top:179.6px" width="7" height="4" viewBox="0 0 7 4"><path d="M0.2 0.3L6.8 0.3L3.5 3.8Z" fill="#444"/></svg><svg style="position:absolute;left:43.3px;top:172.5px" width="14.4" height="14.4" viewBox="0 0 24 24" fill="none" stroke="#2f9a3c" stroke-width="2.2" stroke-linecap="round" stroke-linejoin="round"><path d="M18 8c0 3.613-3.869 7.429-5.393 8.795a1 1 0 0 1-1.214 0C9.87 15.429 6 11.613 6 8a6 6 0 0 1 12 0"/><circle cx="12" cy="8" r="2"/><path d="M8.714 14h-3.71a1 1 0 0 0-.948.683l-2.004 6A1 1 0 0 0 3 22h18a1 1 0 0 0 .948-1.316l-2-6a1 1 0 0 0-.949-.684h-3.712"/></svg><div style="position:absolute;left:62.3px;top:172.2px;line-height:17px;font-size:13px;font-weight:normal;color:#1b1b1b;letter-spacing:-0.342px;white-space:nowrap;-webkit-text-stroke:0.22px #1b1b1b;">QGIS Plugin</div><svg style="position:absolute;left:60.599999999999994px;top:190.7px" width="14.4" height="14.4" viewBox="0 0 24 24" fill="none" stroke="#1a1a1a" stroke-width="2.2" stroke-linecap="round" stroke-linejoin="round"><path d="M21 8a2 2 0 0 0-1-1.73l-7-4a2 2 0 0 0-2 0l-7 4A2 2 0 0 0 3 8v8a2 2 0 0 0 1 1.73l7 4a2 2 0 0 0 2 0l7-4A2 2 0 0 0 21 16Z"/><path d="m3.3 7 8.7 5 8.7-5"/><path d="M12 22V12"/></svg><div style="position:absolute;left:80.2px;top:190.39999999999998px;line-height:17px;font-size:13px;font-weight:bold;color:#111;letter-spacing:-0.005px;white-space:nowrap;-webkit-text-stroke:0.12px #111;">2022_derval</div><svg style="position:absolute;left:281.4px;top:190.59999999999997px" width="16.0" height="16.0" viewBox="-8 -8 16 16"><circle cx="0" cy="0" r="4.35" fill="none" stroke="#9a1cae" stroke-width="2.15"/><circle cx="4.9" cy="2.9" r="2.6" fill="#fff"/><circle cx="4.9" cy="2.9" r="1.6" fill="#fff" stroke="#9a1cae" stroke-width="0.9"/></svg><svg style="position:absolute;left:60.599999999999994px;top:208.9px" width="14.4" height="14.4" viewBox="0 0 24 24" fill="none" stroke="#1a1a1a" stroke-width="2.2" stroke-linecap="round" stroke-linejoin="round"><path d="M21 8a2 2 0 0 0-1-1.73l-7-4a2 2 0 0 0-2 0l-7 4A2 2 0 0 0 3 8v8a2 2 0 0 0 1 1.73l7 4a2 2 0 0 0 2 0l7-4A2 2 0 0 0 21 16Z"/><path d="m3.3 7 8.7 5 8.7-5"/><path d="M12 22V12"/></svg><div style="position:absolute;left:80.2px;top:208.6px;line-height:17px;font-size:13px;font-weight:bold;color:#111;letter-spacing:-0.281px;white-space:nowrap;-webkit-text-stroke:0.12px #111;">champs — fields</div><svg style="position:absolute;left:281.4px;top:208.79999999999998px" width="16.0" height="16.0" viewBox="-8 -8 16 16"><circle cx="0" cy="0" r="4.35" fill="none" stroke="#9a1cae" stroke-width="2.15"/><circle cx="4.9" cy="2.9" r="2.6" fill="#fff"/><circle cx="4.9" cy="2.9" r="1.6" fill="#fff" stroke="#9a1cae" stroke-width="0.9"/></svg><svg style="position:absolute;left:60.599999999999994px;top:227.1px" width="14.4" height="14.4" viewBox="0 0 24 24" fill="none" stroke="#1a1a1a" stroke-width="2.2" stroke-linecap="round" stroke-linejoin="round"><path d="M21 8a2 2 0 0 0-1-1.73l-7-4a2 2 0 0 0-2 0l-7 4A2 2 0 0 0 3 8v8a2 2 0 0 0 1 1.73l7 4a2 2 0 0 0 2 0l7-4A2 2 0 0 0 21 16Z"/><path d="m3.3 7 8.7 5 8.7-5"/><path d="M12 22V12"/></svg><div style="position:absolute;left:80.2px;top:226.79999999999998px;line-height:17px;font-size:13px;font-weight:bold;color:#111;letter-spacing:-0.182px;white-space:nowrap;-webkit-text-stroke:0.12px #111;">ferme-radius — surrounding</div><svg style="position:absolute;left:281.4px;top:226.99999999999997px" width="16.0" height="16.0" viewBox="-8 -8 16 16"><circle cx="0" cy="0" r="4.35" fill="none" stroke="#9a1cae" stroke-width="2.15"/><circle cx="4.9" cy="2.9" r="2.6" fill="#fff"/><circle cx="4.9" cy="2.9" r="1.6" fill="#fff" stroke="#9a1cae" stroke-width="0.9"/></svg><svg style="position:absolute;left:43.3px;top:245.3px" width="14.4" height="14.4" viewBox="0 0 24 24" fill="none" stroke="#1a1a1a" stroke-width="2.2" stroke-linecap="round" stroke-linejoin="round"><path d="M21 8a2 2 0 0 0-1-1.73l-7-4a2 2 0 0 0-2 0l-7 4A2 2 0 0 0 3 8v8a2 2 0 0 0 1 1.73l7 4a2 2 0 0 0 2 0l7-4A2 2 0 0 0 21 16Z"/><path d="m3.3 7 8.7 5 8.7-5"/><path d="M12 22V12"/></svg><div style="position:absolute;left:62.9px;top:245.0px;line-height:17px;font-size:13px;font-weight:normal;color:#1b1b1b;letter-spacing:0.022px;white-space:nowrap;-webkit-text-stroke:0.22px #1b1b1b;">2022_derval</div><svg style="position:absolute;left:43.3px;top:263.5px" width="14.4" height="14.4" viewBox="0 0 24 24" fill="none" stroke="#1a1a1a" stroke-width="2.2" stroke-linecap="round" stroke-linejoin="round"><path d="M12.83 2.18a2 2 0 0 0-1.66 0L2.6 6.08a1 1 0 0 0 0 1.83l8.58 3.91a2 2 0 0 0 1.66 0l8.58-3.9a1 1 0 0 0 0-1.83z"/><path d="M2 12a1 1 0 0 0 .58.91l8.6 3.91a2 2 0 0 0 1.65 0l8.58-3.9A1 1 0 0 0 22 12"/><path d="M2 17a1 1 0 0 0 .58.91l8.6 3.91a2 2 0 0 0 1.65 0l8.58-3.9A1 1 0 0 0 22 17"/></svg><div style="position:absolute;left:62.9px;top:263.2px;line-height:17px;font-size:13px;font-weight:normal;color:#1b1b1b;letter-spacing:-0.281px;white-space:nowrap;-webkit-text-stroke:0.22px #1b1b1b;">GloFAS 30 days Flood Reanalysis Mete…</div><div class="abs" style="left:150px;top:313.5px;width:10px;height:1px;background:repeating-linear-gradient(90deg,#c8c8c8 0 1px,transparent 1px 2px)"></div><div style="position:absolute;left:8.9px;top:318.1px;line-height:17px;font-size:13px;font-weight:normal;color:#1b1b1b;letter-spacing:-0.239px;white-space:nowrap;-webkit-text-stroke:0.22px #1b1b1b;">Layers</div><svg style="position:absolute;left:278.8px;top:321.3px" width="10" height="10" viewBox="0 0 10 10" fill="none" stroke="#8a8a8a" stroke-width="1.1"><rect x="0.55" y="0.55" width="8.9" height="8.9" rx="2" fill="#f4f4f4"/><path d="M3.2 5.2L5.4 2.6L7.6 4.6" stroke-width="0.9"/><circle cx="4.2" cy="5.9" r="1.7" fill="#fff" stroke-width="0.9"/></svg><svg style="position:absolute;left:291.0px;top:321.3px" width="10" height="10" viewBox="0 0 10 10" fill="none" stroke="#8a8a8a" stroke-width="1.1"><rect x="0.55" y="0.55" width="8.9" height="8.9" rx="2" fill="#f4f4f4"/><path d="M2.9 2.9L7.1 7.1M7.1 2.9L2.9 7.1" stroke="#3c3c3c" stroke-width="1.35"/></svg><svg style="position:absolute;left:12px;top:340px" width="15" height="16" viewBox="0 0 15 16"><path d="M1.6 7.4L4.6 3.6L8.4 6.4L6 9.8Z" fill="#ebcf55"/><path d="M1.2 8.4L2 7.2L6.6 9.6L5.8 10.8Z" fill="#4a7fc0"/><path d="M1 9L5.8 11.2L8 13L4.4 13L1.2 10.8Z" fill="#d43b30"/><path d="M5.6 8.4L8.4 6.4L9.4 9.2L7.8 12.6L6 10.6Z" fill="#e9a962"/><path d="M8.2 8L13.3 2.9L14.3 3.9L9.2 9.4Z" fill="#dd8b2c"/></svg><svg style="position:absolute;left:34px;top:340px" width="15" height="16" viewBox="0 0 15 16"><path d="M1.6 13.2V7L4.4 3.2V13.2Z" fill="#e4e4e4" stroke="#8e8e8e" stroke-width="0.9"/><path d="M5.2 13V2.2L8 1.2V13Z" fill="#6d94c4" stroke="#7f8ea3" stroke-width="0.8"/><path d="M8.8 10V2.6L11 3.8V9" fill="#e4e4e4" stroke="#8e8e8e" stroke-width="0.9"/><circle cx="10.6" cy="12.3" r="2.9" fill="#3fae49"/><path d="M10.6 10.7V13.9M9 12.3H12.2" stroke="#fff" stroke-width="1.1"/></svg><svg style="position:absolute;left:55px;top:340px" width="17" height="16" viewBox="0 0 17 16"><path d="M1 8.2C4 3.4 10.4 3.2 14.2 8.2C10.4 12.6 4 12.6 1 8.2Z" fill="#f4f6f8" stroke="#9aa4ae" stroke-width="1"/><path d="M1.4 6.6C4.6 2.6 10.6 2.6 14 6.4" fill="none" stroke="#b4bcc4" stroke-width="0.8"/><circle cx="7.4" cy="7.9" r="2.9" fill="#4f82b8"/><circle cx="7.4" cy="7.9" r="1.2" fill="#1f3b58"/><path d="M11.8 12.6H15.8L13.8 15Z" fill="#3c3c3c"/></svg><svg style="position:absolute;left:77px;top:340px" width="17" height="16" viewBox="0 0 17 16"><path d="M1.2 1.4H12.8V3.8H1.2Z" fill="#e9cc45"/><path d="M1.2 3.8H12.8L8.6 8.6V14L5.6 12.6V8.6Z" fill="#5a8ec9"/><path d="M7.4 8.6V13" stroke="#88b0dc" stroke-width="0.8"/><path d="M11.4 12.6H15.4L13.4 15Z" fill="#3c3c3c"/></svg><div style="position:absolute;left:100.5px;top:336.5px;font-size:15px;line-height:16px;color:#c6c6c6;font-family:'Liberation Serif',serif">ε</div><svg style="position:absolute;left:100px;top:340px" width="25" height="16" viewBox="0 0 25 16" fill="none" stroke="#c8c8c8" stroke-width="1"><path d="M7.5 9.5H12V13H7.5ZM8.5 13V14.8M11 13V14.8"/><path d="M18 7H24L21 10.2Z" fill="#c4c4c4" stroke="none"/></svg><svg style="position:absolute;left:131px;top:340px" width="15" height="16" viewBox="0 0 15 16"><path d="M1 2.6H8.4M2 2.6V13.4" stroke="#9a9a9a" stroke-width="1" fill="none"/><rect x="2.6" y="3.2" width="4.6" height="10" fill="#f6f3ea"/><circle cx="5" cy="6" r="1.5" fill="#e9a737"/><circle cx="5" cy="11" r="1.5" fill="#e9a737"/><path d="M7.6 1.6H11V8H13.6L9.3 13.6L5.6 8H7.6Z" fill="#4f7fb2" stroke="#2f4f78" stroke-width="0.7" stroke-linejoin="round"/></svg><svg style="position:absolute;left:153px;top:340px" width="15" height="16" viewBox="0 0 15 16"><path d="M1 3.6H7M2 3.6V13.8" stroke="#9a9a9a" stroke-width="1" fill="none"/><rect x="2.6" y="4.2" width="4.6" height="9.6" fill="#f6f3ea"/><circle cx="5" cy="7" r="1.5" fill="#e9a737"/><circle cx="5" cy="11.6" r="1.5" fill="#e9a737"/><path d="M7.8 13.6H11.2V7.4H13.8L9.5 1.8L5.4 7.4H7.8Z" fill="#4f7fb2" stroke="#2f4f78" stroke-width="0.7" stroke-linejoin="round"/></svg><svg style="position:absolute;left:174px;top:340px" width="15" height="16" viewBox="0 0 15 16"><rect x="1.8" y="2" width="9.6" height="9.4" rx="0.8" fill="#f3f3f3" stroke="#959595" stroke-width="1.2"/><rect x="8.2" y="9.6" width="5.4" height="4.2" rx="1.4" fill="#e8414a"/><path d="M9.4 11.7H12.4" stroke="#fbd5d7" stroke-width="1"/></svg><div class="abs" style="left:9px;top:361.5px;width:293px;height:91.5px;background:#fff;border-top:1px solid #d0d0d0"></div><svg style="position:absolute;left:26.4px;top:365.8px" width="12" height="12" viewBox="0 0 12 12"><rect x="0.5" y="0.5" width="11" height="11" rx="1.5" fill="#fff" stroke="#c9c9c9"/><path d="M2.8 6.2L5 9L9.2 2.8" fill="none" stroke="#111" stroke-width="1.5"/></svg><div style="position:absolute;left:44px;top:370.8px;width:13px;height:1.3px;background:#f0a48a"></div><div style="position:absolute;left:61.3px;top:363.1px;line-height:17px;font-size:13px;font-weight:bold;color:#111;letter-spacing:0.086px;white-space:nowrap;-webkit-text-stroke:0.12px #111;">2022_derval</div><div style="position:absolute;left:280.4px;top:364.6px;width:15px;height:14.4px;border-radius:3px;background:#eeeeee"></div><svg style="position:absolute;left:279.79999999999995px;top:364.2px" width="15.2" height="15.2" viewBox="-8 -8 16 16"><circle cx="0" cy="0" r="4.35" fill="none" stroke="#9a1cae" stroke-width="2.15"/><circle cx="4.9" cy="2.9" r="2.6" fill="#fff"/><circle cx="4.9" cy="2.9" r="1.6" fill="#fff" stroke="#9a1cae" stroke-width="0.9"/></svg><svg style="position:absolute;left:26.4px;top:384px" width="12" height="12" viewBox="0 0 12 12"><rect x="0.5" y="0.5" width="11" height="11" rx="1.5" fill="#fff" stroke="#c9c9c9"/><path d="M2.8 6.2L5 9L9.2 2.8" fill="none" stroke="#111" stroke-width="1.5"/></svg><div style="position:absolute;left:43.8px;top:382.8px;width:13.4px;height:13.2px;background:#93599f;box-shadow:inset 0 0 0 0.9px #5f3c6b"></div><div style="position:absolute;left:62.1px;top:381.3px;line-height:17px;font-size:13px;font-weight:bold;color:#111;letter-spacing:-0.207px;white-space:nowrap;-webkit-text-stroke:0.12px #111;">champs — fields</div><div style="position:absolute;left:280.4px;top:382.8px;width:15px;height:14.4px;border-radius:3px;background:#eeeeee"></div><svg style="position:absolute;left:279.79999999999995px;top:382.4px" width="15.2" height="15.2" viewBox="-8 -8 16 16"><circle cx="0" cy="0" r="4.35" fill="none" stroke="#9a1cae" stroke-width="2.15"/><circle cx="4.9" cy="2.9" r="2.6" fill="#fff"/><circle cx="4.9" cy="2.9" r="1.6" fill="#fff" stroke="#9a1cae" stroke-width="0.9"/></svg><svg style="position:absolute;left:26.4px;top:402.2px" width="12" height="12" viewBox="0 0 12 12"><rect x="0.5" y="0.5" width="11" height="11" rx="1.5" fill="#fff" stroke="#c9c9c9"/><path d="M2.8 6.2L5 9L9.2 2.8" fill="none" stroke="#111" stroke-width="1.5"/></svg><div style="position:absolute;left:43.8px;top:401.0px;width:13.4px;height:13.2px;background:#6f9a6e;box-shadow:inset 0 0 0 0.9px #4a7050"></div><div style="position:absolute;left:62.1px;top:399.5px;line-height:17px;font-size:13px;font-weight:bold;color:#111;letter-spacing:-0.151px;white-space:nowrap;-webkit-text-stroke:0.12px #111;text-decoration:underline;text-decoration-thickness:1.3px;text-underline-offset:2px;">ferme-radius — surrounding</div><div style="position:absolute;left:280.4px;top:401.0px;width:15px;height:14.4px;border-radius:3px;background:#eeeeee"></div><svg style="position:absolute;left:279.79999999999995px;top:400.59999999999997px" width="15.2" height="15.2" viewBox="-8 -8 16 16"><circle cx="0" cy="0" r="4.35" fill="none" stroke="#9a1cae" stroke-width="2.15"/><circle cx="4.9" cy="2.9" r="2.6" fill="#fff"/><circle cx="4.9" cy="2.9" r="1.6" fill="#fff" stroke="#9a1cae" stroke-width="0.9"/></svg></div></body></html>
